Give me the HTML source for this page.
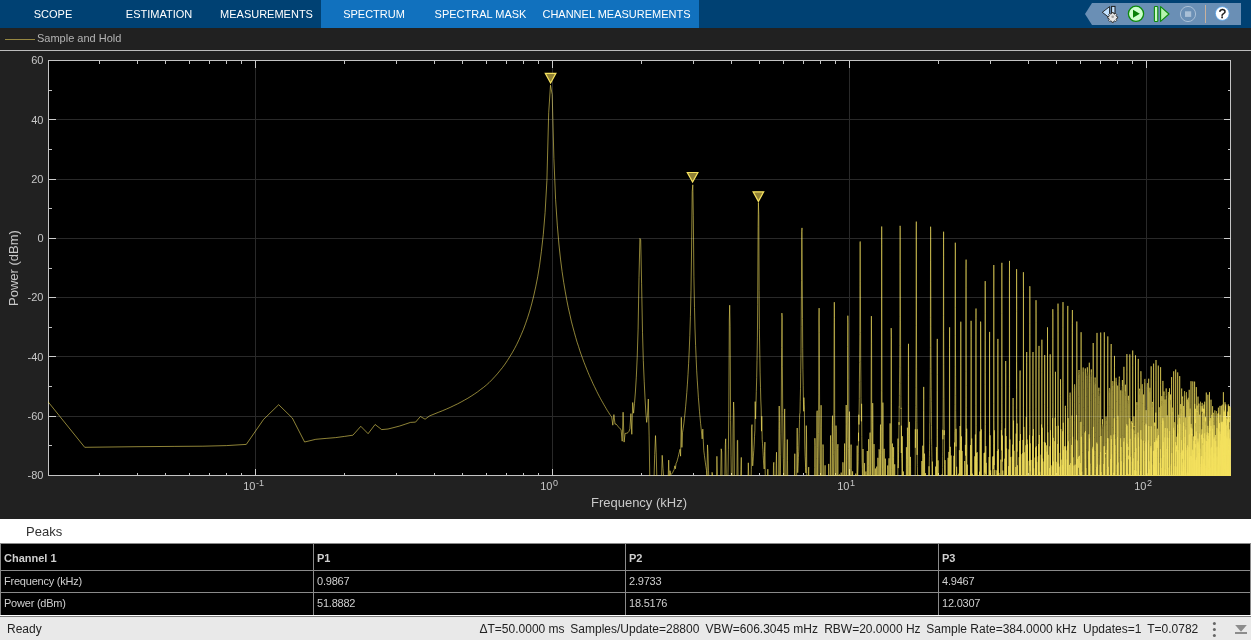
<!DOCTYPE html>
<html lang="en">
<head>
<meta charset="utf-8">
<title>Spectrum Analyzer</title>
<style>
html,body{margin:0;padding:0;}
body{width:1251px;height:640px;overflow:hidden;background:#212121;font-family:"Liberation Sans",sans-serif;position:relative;}
.abs{position:absolute;}
#wrap{position:absolute;left:0;top:0;width:1251px;height:640px;will-change:transform;}
#topbar{left:0;top:0;width:1251px;height:28px;background:#004173;}
#tabsel{left:321px;top:0;width:378px;height:28px;background:#1171be;}
.tab{top:0;height:28px;line-height:28px;font-size:11px;color:#fff;text-align:center;white-space:nowrap;transform:translateX(-50%);}
#legendline{left:5px;top:39px;width:30px;height:1px;background:#968741;}
#legendtxt{left:37px;top:31px;font-size:11px;line-height:14px;color:#b4b4b4;white-space:nowrap;}
#sep{left:0;top:50px;width:1251px;height:1px;background:#bdbdbd;}
svg.plot{position:absolute;left:0;top:0;}
#peakshdr{left:0;top:519px;width:1251px;height:24px;background:#fff;}
#peakstxt{left:26px;top:524px;font-size:13px;line-height:16px;color:#303030;}
#tbl{left:0;top:543px;width:1251px;height:73px;background:#000;}
.hl{left:0;width:1251px;height:1px;background:#8a8a8a;}
.vl{top:543px;width:1px;height:72px;background:#8a8a8a;}
.c{font-size:11px;line-height:14px;color:#cfcfcf;white-space:nowrap;letter-spacing:-0.22px;}
.b{font-weight:bold;letter-spacing:0;}
#status{left:0;top:617px;width:1251px;height:23px;background:#e9e9e9;}
.st{top:622px;font-size:12px;line-height:15px;color:#222;white-space:pre;}
</style>
</head>
<body>
<div id="wrap">
<div id="topbar" class="abs"></div>
<div id="tabsel" class="abs"></div>
<div class="abs tab" style="left:53px">SCOPE</div>
<div class="abs tab" style="left:159px">ESTIMATION</div>
<div class="abs tab" style="left:266.5px">MEASUREMENTS</div>
<div class="abs tab" style="left:374px">SPECTRUM</div>
<div class="abs tab" style="left:480.5px">SPECTRAL MASK</div>
<div class="abs tab" style="left:616.5px">CHANNEL MEASUREMENTS</div>
<svg class="abs" style="left:1080px;top:0" width="171" height="28" viewBox="1080 0 171 28">
<polygon points="1085,14 1092,3 1241,3 1241,25 1092,25" fill="#6a8fb5"/>
<polygon points="1102.3,12.3 1109.6,6.6 1109.6,18" fill="#c3e2ff" stroke="#1a1a1a" stroke-width="0.9" stroke-linejoin="miter"/>
<rect x="1111.6" y="6.4" width="3.4" height="7" fill="#c3e2ff" stroke="#1a1a1a" stroke-width="1"/>
<g transform="translate(1112.7,16.8) scale(0.76)">
<path d="M-1,-5.6h2l.4,1.5 1.1,.5 1.4,-.8 1.4,1.4-.8,1.4 .5,1.1 1.5,.4v2l-1.5,.4-.5,1.1 .8,1.4-1.4,1.4-1.4,-.8-1.1,.5-.4,1.5h-2l-.4,-1.5-1.1,-.5-1.4,.8-1.4,-1.4 .8,-1.4-.5,-1.1-1.5,-.4v-2l1.5,-.4 .5,-1.1-.8,-1.4 1.4,-1.4 1.4,.8 1.1,-.5z" fill="#e6e6e6" stroke="#2a2a2a" stroke-width="1.15" stroke-linejoin="round"/>
<circle r="1.7" fill="#9c9c9c"/>
</g>
<circle cx="1136" cy="13.8" r="7.6" fill="#ccffcc" stroke="#0c8a0c" stroke-width="1.3"/>
<polygon points="1133,9.8 1139.8,13.8 1133,17.8" fill="#068006"/>
<rect x="1154.4" y="6.5" width="3.4" height="15" rx="0.8" fill="#c6fbc0" stroke="#0c8a0c" stroke-width="1.1"/>
<polygon points="1160.6,6.6 1169,14 1160.6,21.4" fill="#b6f5ae" stroke="#0c8a0c" stroke-width="1.1" stroke-linejoin="round"/>
<circle cx="1188" cy="14" r="7.6" fill="none" stroke="#a9bfd6" stroke-width="1"/>
<rect x="1185" y="11.3" width="6.2" height="5.6" fill="#a9bfd6"/>
<rect x="1205" y="5" width="1" height="18" fill="#c9b19c"/>
<circle cx="1222.3" cy="13.5" r="6.9" fill="#fff" stroke="#4a9be6" stroke-width="0.8"/>
<text x="1222.3" y="18.2" text-anchor="middle" font-family="'Liberation Sans', sans-serif" font-size="13" fill="#111" stroke="#111" stroke-width="0.35">?</text>
</svg>
<div id="legendline" class="abs"></div>
<div id="legendtxt" class="abs">Sample and Hold</div>
<div id="sep" class="abs"></div>
<svg class="plot" width="1251" height="520" viewBox="0 0 1251 520">
<defs><clipPath id="axclip"><rect x="48" y="60" width="1183" height="416"/></clipPath></defs>
<rect x="48" y="60" width="1183" height="416" fill="#000"/>
<g stroke="#c4c4c4" stroke-width="1" shape-rendering="crispEdges"><line x1="48.5" y1="60.5" x2="55.5" y2="60.5"/><line x1="1223.5" y1="60.5" x2="1230.5" y2="60.5"/><line x1="48.5" y1="90.5" x2="51.5" y2="90.5"/><line x1="1227.5" y1="90.5" x2="1230.5" y2="90.5"/><line x1="48.5" y1="119.5" x2="55.5" y2="119.5"/><line x1="1223.5" y1="119.5" x2="1230.5" y2="119.5"/><line x1="48.5" y1="149.5" x2="51.5" y2="149.5"/><line x1="1227.5" y1="149.5" x2="1230.5" y2="149.5"/><line x1="48.5" y1="179.5" x2="55.5" y2="179.5"/><line x1="1223.5" y1="179.5" x2="1230.5" y2="179.5"/><line x1="48.5" y1="208.5" x2="51.5" y2="208.5"/><line x1="1227.5" y1="208.5" x2="1230.5" y2="208.5"/><line x1="48.5" y1="238.5" x2="55.5" y2="238.5"/><line x1="1223.5" y1="238.5" x2="1230.5" y2="238.5"/><line x1="48.5" y1="268.5" x2="51.5" y2="268.5"/><line x1="1227.5" y1="268.5" x2="1230.5" y2="268.5"/><line x1="48.5" y1="297.5" x2="55.5" y2="297.5"/><line x1="1223.5" y1="297.5" x2="1230.5" y2="297.5"/><line x1="48.5" y1="327.5" x2="51.5" y2="327.5"/><line x1="1227.5" y1="327.5" x2="1230.5" y2="327.5"/><line x1="48.5" y1="356.5" x2="55.5" y2="356.5"/><line x1="1223.5" y1="356.5" x2="1230.5" y2="356.5"/><line x1="48.5" y1="386.5" x2="51.5" y2="386.5"/><line x1="1227.5" y1="386.5" x2="1230.5" y2="386.5"/><line x1="48.5" y1="416.5" x2="55.5" y2="416.5"/><line x1="1223.5" y1="416.5" x2="1230.5" y2="416.5"/><line x1="48.5" y1="445.5" x2="51.5" y2="445.5"/><line x1="1227.5" y1="445.5" x2="1230.5" y2="445.5"/><line x1="48.5" y1="475.5" x2="55.5" y2="475.5"/><line x1="1223.5" y1="475.5" x2="1230.5" y2="475.5"/><line x1="99.5" y1="475.5" x2="99.5" y2="472.5"/><line x1="99.5" y1="60.5" x2="99.5" y2="63.5"/><line x1="137.5" y1="475.5" x2="137.5" y2="472.5"/><line x1="137.5" y1="60.5" x2="137.5" y2="63.5"/><line x1="165.5" y1="475.5" x2="165.5" y2="472.5"/><line x1="165.5" y1="60.5" x2="165.5" y2="63.5"/><line x1="189.5" y1="475.5" x2="189.5" y2="472.5"/><line x1="189.5" y1="60.5" x2="189.5" y2="63.5"/><line x1="209.5" y1="475.5" x2="209.5" y2="472.5"/><line x1="209.5" y1="60.5" x2="209.5" y2="63.5"/><line x1="226.5" y1="475.5" x2="226.5" y2="472.5"/><line x1="226.5" y1="60.5" x2="226.5" y2="63.5"/><line x1="241.5" y1="475.5" x2="241.5" y2="472.5"/><line x1="241.5" y1="60.5" x2="241.5" y2="63.5"/><line x1="255.5" y1="475.5" x2="255.5" y2="468.5"/><line x1="255.5" y1="60.5" x2="255.5" y2="67.5"/><line x1="344.5" y1="475.5" x2="344.5" y2="472.5"/><line x1="344.5" y1="60.5" x2="344.5" y2="63.5"/><line x1="396.5" y1="475.5" x2="396.5" y2="472.5"/><line x1="396.5" y1="60.5" x2="396.5" y2="63.5"/><line x1="434.5" y1="475.5" x2="434.5" y2="472.5"/><line x1="434.5" y1="60.5" x2="434.5" y2="63.5"/><line x1="462.5" y1="475.5" x2="462.5" y2="472.5"/><line x1="462.5" y1="60.5" x2="462.5" y2="63.5"/><line x1="486.5" y1="475.5" x2="486.5" y2="472.5"/><line x1="486.5" y1="60.5" x2="486.5" y2="63.5"/><line x1="506.5" y1="475.5" x2="506.5" y2="472.5"/><line x1="506.5" y1="60.5" x2="506.5" y2="63.5"/><line x1="523.5" y1="475.5" x2="523.5" y2="472.5"/><line x1="523.5" y1="60.5" x2="523.5" y2="63.5"/><line x1="538.5" y1="475.5" x2="538.5" y2="472.5"/><line x1="538.5" y1="60.5" x2="538.5" y2="63.5"/><line x1="552.5" y1="475.5" x2="552.5" y2="468.5"/><line x1="552.5" y1="60.5" x2="552.5" y2="67.5"/><line x1="641.5" y1="475.5" x2="641.5" y2="472.5"/><line x1="641.5" y1="60.5" x2="641.5" y2="63.5"/><line x1="693.5" y1="475.5" x2="693.5" y2="472.5"/><line x1="693.5" y1="60.5" x2="693.5" y2="63.5"/><line x1="731.5" y1="475.5" x2="731.5" y2="472.5"/><line x1="731.5" y1="60.5" x2="731.5" y2="63.5"/><line x1="759.5" y1="475.5" x2="759.5" y2="472.5"/><line x1="759.5" y1="60.5" x2="759.5" y2="63.5"/><line x1="783.5" y1="475.5" x2="783.5" y2="472.5"/><line x1="783.5" y1="60.5" x2="783.5" y2="63.5"/><line x1="803.5" y1="475.5" x2="803.5" y2="472.5"/><line x1="803.5" y1="60.5" x2="803.5" y2="63.5"/><line x1="820.5" y1="475.5" x2="820.5" y2="472.5"/><line x1="820.5" y1="60.5" x2="820.5" y2="63.5"/><line x1="835.5" y1="475.5" x2="835.5" y2="472.5"/><line x1="835.5" y1="60.5" x2="835.5" y2="63.5"/><line x1="849.5" y1="475.5" x2="849.5" y2="468.5"/><line x1="849.5" y1="60.5" x2="849.5" y2="67.5"/><line x1="938.5" y1="475.5" x2="938.5" y2="472.5"/><line x1="938.5" y1="60.5" x2="938.5" y2="63.5"/><line x1="990.5" y1="475.5" x2="990.5" y2="472.5"/><line x1="990.5" y1="60.5" x2="990.5" y2="63.5"/><line x1="1028.5" y1="475.5" x2="1028.5" y2="472.5"/><line x1="1028.5" y1="60.5" x2="1028.5" y2="63.5"/><line x1="1056.5" y1="475.5" x2="1056.5" y2="472.5"/><line x1="1056.5" y1="60.5" x2="1056.5" y2="63.5"/><line x1="1080.5" y1="475.5" x2="1080.5" y2="472.5"/><line x1="1080.5" y1="60.5" x2="1080.5" y2="63.5"/><line x1="1100.5" y1="475.5" x2="1100.5" y2="472.5"/><line x1="1100.5" y1="60.5" x2="1100.5" y2="63.5"/><line x1="1117.5" y1="475.5" x2="1117.5" y2="472.5"/><line x1="1117.5" y1="60.5" x2="1117.5" y2="63.5"/><line x1="1132.5" y1="475.5" x2="1132.5" y2="472.5"/><line x1="1132.5" y1="60.5" x2="1132.5" y2="63.5"/><line x1="1146.5" y1="475.5" x2="1146.5" y2="468.5"/><line x1="1146.5" y1="60.5" x2="1146.5" y2="67.5"/><rect x="48.5" y="60.5" width="1182.0" height="415.0" fill="none"/></g>
<g clip-path="url(#axclip)" fill="none" stroke="#f5e15e" stroke-opacity="0.58" stroke-width="1">
<path d="M-4.7 336.2l89.4 111.1M278.7 404.7l13.6 13.3M360.8 426.3l7.3 7.4M410.5 422.4l5.1 -0.3M446.3 409.1l3.9 -1.7M474.3 394.1l3.1 -2.1M497.3 373.9l2.6 -3.2M516.8 344.3l2.2 -4.6M533.7 295.9l2 -9M548.7 112.6l1.8 -27.4M562.1 271.6l1.6 10.8M574.3 332.3l1.4 5.1M585.4 365.8l1.3 3.3M595.6 389l1.2 2.5M605.1 406.7l1.1 1.9M613.9 414.6l1.1 9.6M622.2 441.2l0.9 -29M629.9 428.8l1 -15.2M637.2 357.5l0.9 -28.3M644.2 381.2l0.8 16.7M654.7 454.4l0.8 -18.8M669.4 484.4l0.6 -13.7M674.8 465.8l0.6 3M680 449.3l0.6 6.9M685 413.1l0.6 -6.3M689.8 335.7l0.6 -19.2M694.5 307.6l0.5 21.4M699 405l0.5 6.7M703.3 441.1l0.5 9.7M707.5 444.9l0.5 8.5M717.4 474.9l0.5 9.5M727.5 484.4l0.5 -11.6M731 455.2l0.4 24.3M740.5 484.4l0.4 -15M751.6 427.9l0.4 -3.3M754.5 436.7l0.4 -6.5M757.4 337.9l0.3 -33.1M760.1 372.9l0.4 14.8M762.9 449.6l0.3 5.8M767.5 484.4l0.3 -15.2M778.6 484.4l0.3 -55.6M781.3 404l0.3 -56.3M783.6 473.3l0.3 9M787.3 439.5l0.2 21.3M797.4 445.3l0.3 27.4M799.5 419.6l0.2 -5.5M801.5 280.6l0.2 -49M803.4 399.1l0.3 12.2M805.4 462.1l0.2 5.5M808.7 467.1l0.3 17.3M817.2 410.7l0.2 37.1M819.1 308.1l0.2 24.4M821.3 418.6l0.2 65.8M828.7 463.9l0.2 9.1M832.5 415.7l0.2 26M834.7 413.5l0.1 37.2M837.7 448.5l0.2 -4.3M843 463.6l0.2 20.8M846.4 423.2l0.2 61.2M848.2 379.2l0.1 42.9M849.7 447.8l0.2 36.6M855.7 473.6l0.2 10.8M858.3 453.8l0.2 -21.1M859.6 362.6l0.2 -27.9M860.9 381.7l0.1 16M862.1 462.7l0.2 5.7M864.4 463.2l0.2 -0.1M867.5 472.5l0.1 11.9M870.1 432.6l0.2 49.2M871.6 343.9l0.1 67M873.7 484.4l0.2 -9.7M876.7 466.6l0.1 17.8M880.4 431.9l0.1 -7.3M881.6 244l0.1 -17.5M882.8 433.1l0.1 -30.5M885.3 470l0.1 -11.4M889.9 484.4l0.1 -45.5M891.2 328.1l0.2 9.7M893.3 484.4l0.2 -26.9M896.9 475.8l0.2 8.6M898.6 452.6l0.1 -6.1M899.5 382.2l0.2 -16.1M900.5 320.1l0.1 27.8M901.4 425.7l0.1 14.2M902.3 436.2l0.1 37.2M907.2 484.4l0.1 -20.8M908.4 350l0.1 -6.2M909.6 441.4l0.1 43M915.3 429.3l0.1 18.5M916.1 325.5l0.1 -89.5M916.9 422.7l0.1 12.3M918.2 474.9l0.1 9.5M923.5 484.4l0.1 -74.1M925.5 473.2l0.1 11.2M929.5 450.3l0.1 -6.5M930.3 368.6l0.1 -21M931 353.7l0.1 19.6M931.7 445.6l0.1 6.3M935.6 484.4v-17.8M937.1 390.5l0.1 -48.2M938.1 460.4l0.1 19.7M942.8 429.8l0.1 9.5M943.5 243.2l0.1 -11.5M944.2 429.7v5.4M945.1 460.1l0.1 24.3M949.4 448.8l0.1 -101.3M950.9 484.4l0.1 -25.2M954.3 476.6l0.1 -6.1M954.9 404.6l0.1 -16.7M955.5 350.1l0.1 26.1M956.1 466.6l0.1 1.6M959.3 484.4l0.1 -18.2M960.4 479.1l0.1 -16.4M961 412.9v28.6M962.1 470.9v-20M965.4 451.5v-6.6M965.9 330l0.1 -61.8M966.5 437.8l0.1 11.8M970.4 484.4v-32.6M971.2 339.4l0.1 129.2M972.4 473.7v10.7M975.6 484.4v-8.1M976.1 385.1l0.1 40.4M977.1 461.5l0.1 -9.3M980.3 478.6l0.1 -16.4M980.8 416.7l0.1 27.5M981.8 474.9l0.1 9.5M984.7 472.5l0.1 -13.5M985.2 281.1l0.1 32.1M985.7 474.2l0.1 -28.1M989.3 484.4l0.1 -13.9M990 484.4v-24M992.7 460.2l0.1 -3.5M993.5 443.3l0.1 -17.3M994 396.1v24.6M994.8 478.5l0.1 -8.6M997.7 481.2v-21.1M998.1 466.6l0.1 17.8M1001.2 484.4l0.1 -8.5M1001.6 407l0.1 -19.8M1002 383l0.1 20.8M1002.8 484.4v-13.9M1005.3 428.3v38.4M1006.1 484.4v-26M1008.5 466.2l0.1 0.6M1009.2 462l0.1 -17.5M1009.6 418.5l0.1 24M1010.3 484.4v-24.4M1012.6 444.6l0.1 17.9M1013.5 468v-45.4M1015.7 481.8l0.1 -14.8M1016.4 409.6l0.1 -20.3M1016.8 388.9v20.3M1017.4 484.4l0.1 -19.1M1019.9 481.4l0.1 -41.9M1020.5 434.1v16.9M1022.9 484.4l0.1 -37.7M1023.4 288.9v-16.7M1023.8 426.9l0.1 9.6M1026.2 484.4v-52.4M1026.7 362.4l0.1 68M1027.5 444.4v27.9M1029.5 460.2l0.1 5.2M1029.8 286.2l0.1 2.4M1030.2 471.3v-26.5M1032.2 473.8l0.1 10.6M1032.9 357.6l0.1 -5.6M1033.4 449.5v34.9M1035.6 447.5l0.1 28.1M1036.1 322.4v86.1M1036.7 484.4v-22.6M1038.6 444.1l0.1 23.6M1039.2 484.4l0.1 -13.2M1041.2 454.6v26.8M1041.8 372.8l0.1 -33.1M1042.2 427.7l0.1 33.4M1044.3 472.3v-30.4M1044.8 391.9v54M1045.4 466.6v-23.5M1047.1 452.4l0.1 -0.8M1047.5 352.9l0.1 72.6M1048.2 454.8v4.8M1049.9 473.9v10.5M1050.6 436.4v48M1052.5 434.5v-16.4M1052.8 338.4v-29.2M1053.2 437.8v0M1054.8 441.2l0.1 20.1M1055.4 413.3v-41.5M1055.8 453.4l0.1 31M1057.7 449.6l0.1 27.5M1058 303.6l0.1 29.2M1058.3 425.8l0.1 16.9M1060.2 484.4v-25.2M1060.8 456.8v-27.8M1062.4 465.1v19.3M1062.9 432.7v-32.4M1063.1 466.6l0.1 16.7M1063.6 450.1v29M1065.1 459.9l0.1 24.5M1065.4 406v1.5M1065.7 446.4v30.6M1067.4 484.4l0.1 -38.9M1067.7 363.2v-52.1M1068 484.4v-50.2M1069.5 484.4v-19.5M1069.9 397.6v-1.9M1070.1 393.2l0.1 0.6M1070.4 464.7v19.7M1072.1 427.2v-11.6M1072.4 310v13.7M1072.7 440.3v44.1M1074.1 465.5v18.9M1074.4 387.7v-0.8M1074.6 384.3v0M1074.8 387.2l0.1 0.8M1075.2 464.6v19.8M1076.6 421.6v62.5M1076.9 358.8v53.5M1077.3 481.5l0.1 -22.6M1078.6 432.1v-17.8M1078.8 372.4v-0.4M1079 370.9v0.1M1079.2 373.7l0.1 0.6M1079.5 474.8v-19M1080.9 421.9v28.3M1081.3 484.4v-17M1082.6 470.2v-17.8M1082.8 370.7l0.1 -0.5M1083.1 368v-0.2M1083.3 367.6v0.2M1083.5 369.6v0.4M1083.7 425.4l0.1 17.8M1085 443l0.1 41.4M1085.5 484.4v-43.9M1086.7 449.7v-17.8M1086.9 374.5v-0.4M1087.1 372.3v-0.1M1087.3 367.3v4.4M1087.5 372.4l0.1 0.2M1087.7 374.7l0.1 0.4M1088 459.6v17.8M1089.3 483.5v-104.8M1089.8 484.4v-20.5M1090.8 400.5v-17.7M1091 374l0.1 -0.3M1091.2 372.6l0.1 -3.2M1091.5 373.4v0.2M1091.7 376.4v0.6M1092.7 461.1v-12.4M1093.1 463.1l0.1 -29.4M1093.4 484.4v-51.2M1094.6 484.4v-11.1M1094.8 383v-0.5M1095 380.2v-0.2M1095.2 379.7v0.1M1095.4 381.5v0.4M1095.6 432.7v17.8M1096.8 442.6v34M1097.1 471.3v13.1M1098.2 484.4l0.1 -8.8M1098.4 394.8l0.1 -0.4M1098.6 392.3l0.1 -0.2M1098.8 391.4l0.1 -3.7M1099 391.9l0.1 0.2M1099.2 394l0.1 0.3M1099.4 454.2l0.1 17.8M1100.5 471.7v12.7M1100.7 392.2l0.1 43.7M1101.1 472l0.1 12.4M1102.1 427l0.1 -0.4M1102.3 424.8l0.1 -0.1M1102.5 424.3l0.1 0.1M1102.7 425.4v0.3M1102.9 428.2v0.4M1104 446.7l0.1 -0.5M1104.3 358.8v70.2M1104.7 457.7v5.4M1105.7 420.1v-0.5M1105.9 417.2v-0.2M1106.1 416.6v0.1M1106.3 418.3v0.4M1106.5 459.9v8.3M1107.6 458.4v26M1107.8 448.2v25.8M1109 459.4v-17.8M1109.2 390.5v-0.4M1109.4 388.3v-0.1M1109.6 388.2v0.1M1109.7 390.1l0.1 0.4M1109.9 442.3v17.8M1111 438.5v42.2M1111.2 467.7l0.1 16.7M1112.3 480.9l0.1 -17.8M1112.5 384.8v-0.5M1112.7 382.2v-0.2M1112.9 381.7v0.1M1113 383.3l0.1 0.3M1113.2 411.9v17.7M1114.1 434.6v35.1M1114.4 380.7l0.1 -24.8M1114.9 452.9v-7.8M1115.7 398v-15.8M1115.9 379.3v-0.3M1116 377.9l0.1 -0.1M1116.2 378.2v0.2M1116.4 380.4v0.5M1116.6 454.9v17.8M1117.5 437v5M1117.9 430.3v-14.5M1118.8 452.6v-17.8M1119 381v-0.4M1119.1 378.8l0.1 -0.1M1119.3 378.4v0.1M1119.5 379.7v0.3M1119.7 386.4v17.8M1120.5 472.4v12M1120.9 404.8v79.6M1122 464.7v-17.8M1122.1 388.8l0.1 -0.4M1122.3 386.5v-0.1M1122.5 386.7v0.2M1122.6 389.4l0.1 0.5M1123.5 480.3v-17.5M1123.9 413.1v-44.6M1124.1 463.2v21.2M1125.1 395.1l0.1 -0.5M1125.3 392.2v-0.2M1125.5 391.6v0.1M1125.6 393.5v0.4M1125.8 444.2v13.2M1126.7 453.5l0.1 30.9M1127.1 433v51.4M1128 446.8v3.2M1128.2 402.2v-0.4M1128.3 400.1l0.1 0M1128.5 400.7v0.3M1128.7 403.9v2M1129.4 484.4l0.1 -17.2M1129.8 484.4v-10M1129.9 475.6v8.8M1130.2 473.5v10.9M1131 426.9v-0.4M1131.2 424.6v-0.1M1131.3 424.2v0.1M1131.5 425.7v0.3M1131.6 441.9l0.1 12.6M1132.5 428.2v-5.2M1132.7 468.5l0.1 15.9M1133.7 484.4v-9.5M1133.8 428.7l0.1 -0.4M1134 426.6v-0.1M1134.1 426.2l0.1 0M1134.3 427.4v0.2M1134.5 430.2v3.4M1135.2 452v24.5M1135.5 446.1v-55.7M1135.7 434.2v31.7M1136.5 484.4v-11.1M1136.7 408.3v-0.5M1136.8 405.9v-0.2M1137 405.7v0.1M1137.1 407.7v0.5M1137.2 470.2l0.1 14.2M1138.2 484.4v-37.4M1138.4 437.5v13.2M1139.2 429l0.1 -17.7M1139.4 391.8v-0.3M1139.5 390.1v-0.1M1139.7 390.1v0.1M1139.8 391.8v0.3M1140 426.2v17.8M1140.8 447.1v37.3M1141.1 442.6v-3.1M1141.9 405v-16.4M1142.1 385.9v-0.3M1142.2 384.3v0M1142.3 384.4l0.1 0.2M1142.5 386.2v0.3M1142.6 421.4v17.8M1143.5 468l0.1 -64.1M1143.9 484.4v-8.1M1144.6 383v-0.6M1144.7 379.8l0.1 -0.3M1144.9 378.9v0.1M1145 380.4v0.3M1145.2 406.9v17.7M1146 484.4v-44.7M1146.3 484.4v-16.8M1146.5 470.8v13.6M1147.2 386.7v-0.4M1147.3 384v-0.2M1147.4 383.2v0.1M1147.6 384.3v0.3M1147.7 387.2v2.3M1148.3 484.4v-20.9M1148.7 440.9v-55.7M1148.9 445.2v39.2M1149.6 461.3v-17.8M1149.7 390.4v-0.3M1149.8 388.3v-0.2M1150 387.8v0.1M1150.1 389.2v0.3M1150.2 393v17.8M1151 484.4v-23M1151.2 378.5v75.9M1151.5 470.7v-7.1M1152.1 406.8v-0.4M1152.2 404v-0.2M1152.4 402.9v-1M1152.5 403.4v0.2M1152.6 405.6v0.4M1153.3 484.4v-19.7M1153.6 367.3v-3.7M1153.9 484.4v-11.1M1154.5 475.4v-17.8M1154.7 426.2v-0.4M1154.8 424.5v-2.1M1154.9 425.6v0.3M1155 445.5l0.1 17.8M1155.7 450v-0.4M1156 360v15.1M1156.3 444.8v-4.4M1156.9 447v3.5M1157 448.2v-10.1M1157.1 447v0M1157.3 447.3v0.2M1157.4 449.2v0.3M1158.1 484.4l0.1 -20.1M1158.3 365.6l0.1 39.6M1158.6 463v14.6M1159.2 410.6l0.1 -0.4M1159.4 408.2v-0.2M1159.5 407.4v0M1159.6 408.3v0.2M1159.7 410.8l0.1 0.4M1160.3 462.9l0.1 2.3M1160.6 385.4l0.1 99M1161.3 476.4l0.1 4M1161.5 404.3l0.1 -0.4M1161.7 401.9v-0.1M1161.8 401.2v0.1M1161.9 402.3v0.2M1162 405v0.5M1162.6 484.4v-24.8M1162.8 484.4l0.1 -12.4M1163 428.7v-8M1163.3 475.1v7.4M1163.8 398.5v-0.5M1163.9 395.5l0.1 -0.1M1164.1 395.3v0.2M1164.2 397.8v0.5M1164.8 484.4v-9.6M1165.1 399.5v21.4M1165.4 470.8v13.6M1166 395.5v-0.5M1166.1 392.7v-0.2M1166.2 388.4v3.4M1166.3 392.6v0.3M1166.5 395.3v0.5M1167 459.8v-10.9M1167.3 462.6v-34.2M1167.6 461.5v-15.1M1168.2 398.9v-1.8M1168.3 394.2v-0.3M1168.4 392.2v1M1168.5 394.4v0.4M1168.6 413.1v17.8M1169.3 439.8v-1.7M1169.6 484.4v-31M1170.2 470v-17.8M1170.3 402.5v-0.4M1170.4 400.4v-0.2M1170.5 400l0.1 0M1170.7 401.2v0.3M1170.8 404.1v10.4M1171.4 463.9l0.1 17M1171.7 455.1v-2M1172.4 416.5v-4.9M1172.5 408.9v-0.2M1172.6 407.6v0M1172.7 408.2v0.2M1172.8 410.7v0.4M1173.3 476.1v8.3M1173.5 428.6v44M1173.8 484.4v-35.4M1174.4 462.6v-17.8M1174.5 424.4v-0.3M1174.6 422.6v-0.1M1174.7 422.2v0.1M1174.8 423.3v0.2M1174.9 425.8v0.4M1175.6 457.1v-15M1175.7 446.2v38.2M1176.4 460.2l0.1 -13.5M1176.6 449.1v-0.3M1176.7 447.5v0M1176.8 447.7v0.1M1176.9 449.5v0.3M1177.4 484.4v-11.7M1177.7 484.4v-8.7M1177.8 449.8v-16.2M1178.5 446.1v-17.8M1178.6 416.4v-0.3M1178.7 414.8v0M1178.8 415.4v0.2M1178.9 418v0.5M1179.4 484.4v-15.3M1179.7 399.1v-23M1179.8 474.5l0.1 9.9M1180.4 418.9v-5.8M1180.5 410.6v-0.3M1180.6 409.1v-0.1M1180.7 409.2l0.1 0.2M1180.8 410.9l0.1 0.4M1181 441.7v17.7M1181.6 484.4v-45.3M1181.8 474.5v9.9M1182.4 449.1v-17.8M1182.5 400.5v-0.4M1182.6 398.8v-2.3M1182.7 399.9v0.3M1182.8 419.9v17.8M1183.2 484.4v-19.1M1183.5 422.5v27.4M1183.7 426v5.9M1184.3 478.5v-24.8M1184.4 393.9v-0.5M1184.5 391.4v-0.1M1184.6 391.4v0.1M1184.7 393.6v0.5M1184.8 468.5v15.9M1185.2 436.9l0.1 19.8M1185.5 447v37.4M1185.7 463.1v21.3M1186.2 399.3v-3.3M1186.3 393.1v-0.2M1186.4 392.1v0M1186.5 393.3v0.3M1186.6 408.5v17.8M1187.2 456.8v-6.6M1187.5 445.4v8.7M1188 459v-17.8M1188.1 400.1v-0.4M1188.2 398v-0.1M1188.3 398v0.1M1188.4 399.9v0.4M1188.5 451.9v17.8M1189 484.4l0.1 -44.3M1189.2 438.2v46.2M1189.4 475.6v8.8M1189.9 412.5v-0.4M1190 409.6v-0.3M1190.1 408.6v0.1M1190.2 409.7v0.3M1190.3 412.9v11.2M1190.9 431.5v-3.9M1191.1 448.7v-24.8M1191.7 443.9v-4.8M1191.8 436.7v-0.3M1191.9 435.2v-0.1M1191.9 435.2l0.1 0.1M1192 436.6l0.1 0.3M1192.1 439.7l0.1 17.8M1192.7 464.2v20.2M1192.9 454.5v-4.1M1193.4 473.2l0.1 -18.7M1193.5 457l0.1 -0.4M1193.6 454.7l0.1 -0.1M1193.7 454.9v0.1M1193.8 457.3v0.5M1194.2 484.4v-10.3M1194.4 480.3v-43.6M1194.6 407.2v72.6M1194.9 484.4v-16.7M1195.2 435.8v0.6M1195.3 423.9v-0.4M1195.4 422v-0.1M1195.5 422.3v0.2M1195.6 424.7v0.4M1195.8 470.7v13.7M1196.3 480.6v-64.2M1196.5 484.4v-11.4M1196.9 432.6v-17.1M1197 412.9v-0.3M1197.1 411.3v-0.1M1197.2 411.2v0.1M1197.3 412.6v0.3M1197.4 415.5v17.1M1197.8 442.8v11.4M1198 396.6v29.2M1198.2 463.2l0.1 21.2M1198.7 410.9v-0.6M1198.8 407.9v-0.1M1198.9 407.6v0.2M1199 409.9v0.5M1199.1 444.6v39.8M1199.6 484.4v-36.3M1199.8 484.4v-35.8M1200.4 452.2v-17.8M1200.4 403.6l0.1 -0.3M1200.5 401.8v0M1200.6 402.3v0.2M1200.7 405v0.5M1201.2 466.9v14.4M1201.5 450v-15.2M1201.9 472.1v12.3M1202.1 413.9v-0.5M1202.2 411v-0.2M1202.3 410.4v0.1M1202.3 412.3l0.1 0.3M1202.4 433.7v2.2M1202.9 456.6l0.1 -11.5M1203.1 473.1v-35M1203.5 484.4l0.1 -25.2M1203.7 416.3v-0.4M1203.8 413.3v-0.2M1203.9 409v3.3M1204 413.2v-4.6M1204 416l0.1 0.5M1204.5 463.3v17.3M1204.7 401.7v37.3M1204.9 452v13.1M1205.3 423.7v-0.5M1205.4 421v-0.2M1205.5 420.3v0.1M1205.6 418.2v3.7M1205.7 428.6v17.8M1206.1 468.7v15.7M1206.3 409.2v75.2M1206.8 484.4v-12.6M1206.9 442.6v-0.4M1207 440.1v-0.2M1207.1 434.9v4.3M1207.2 440v-6.4M1207.3 442.4v0.4M1207.7 457.1v-15.2M1207.9 435.5v-40.8M1208.1 484.4v-31.6M1208.5 470v2.1M1208.6 469.5v-11M1208.6 468l0.1 0M1208.7 468.3v0.2M1208.8 470.3v0.3M1209.3 457.8v3.7M1209.5 392.1v19.8M1209.7 455.5v28.9M1210.1 433v-0.4M1210.2 430.5v-0.2M1210.2 429.6v0M1210.3 430.4v-12.3M1210.4 432.8v0.4M1210.9 484.4v-35.3M1211 450.2v34.2M1211.6 484.4v-16.2M1211.7 417.6v-0.4M1211.7 415.1v-0.1M1211.8 415v0.1M1211.9 417.1v0.4M1212 473.3v11.1M1212.5 432.4v36.2M1212.6 428.8l0.1 12.3M1213.1 424.9v-6.9M1213.2 415.4v-0.3M1213.3 414v-0.1M1213.4 414.4v0.2M1213.5 416.6v0.4M1213.9 484.4v-16.7M1214.1 457.3v-32.1M1214.2 466.7l0.1 -13.6M1214.7 433v-17.8M1214.7 411.6v-0.3M1214.8 410.3v0M1214.9 411.3v0.3M1215 414.7v16.1M1215.4 462.5v21.9M1215.7 461.6v-20.5M1216.1 458v-17.6M1216.2 414.1v-0.4M1216.3 412.3v-0.1M1216.4 412.5v0.2M1216.4 414.8l0.1 0.5M1216.9 478.1v-6.6M1217 427.9l0.1 8.7M1217.6 464.4v-17.8M1217.7 415.7v-0.4M1217.8 413.8v-0.1M1217.8 413.9v0.2M1217.9 416.1v0.4M1218 484.4l0.1 -19.7M1218.3 440.8l0.1 43.6M1218.5 413.2v30.2M1218.7 429.3v8M1219.1 432.2v-0.5M1219.2 423v5.8M1219.2 427.8v-4.3M1219.3 428.6v0.2M1219.4 431.3v0.4M1219.8 452.1v-3.9M1220 405.9v11.5M1220.1 460.1v-7.9M1220.5 444.7l0.1 -0.5M1220.6 441.8v-0.2M1220.7 441.1v0.1M1220.8 434v9.1M1220.9 458.3v-16.3M1221.3 455.2v-33.2M1221.5 484.4v-46.9M1221.8 458.4l0.1 16.9M1222 424.4v-2.7M1222.1 476.2v-7.3M1222.2 447.1v-23.4M1222.5 484.4v-8.6M1222.7 432.8v-10.9M1222.9 464.2v-34M1223.2 484.4l0.1 -23M1223.4 472.8v-17.7M1223.5 448.4v-0.4M1223.5 447.2v0M1223.6 419.4v-3.4M1223.7 435.1v-13.3M1223.9 476.1v8.3M1224.1 484.4v-44.5M1224.2 450.5v33.9M1224.4 449.7v34.7M1224.8 441.5v-12.5M1224.8 425.9l0.1 -0.3M1224.9 424.7v0M1225 422.3v-20.1M1225.1 449.4v9.8M1225.3 469.7v14.7M1225.5 414.2v-8M1225.7 434.4v-30M1225.9 479.3v-12.3M1226.1 437.9v-14.9M1226.2 420.2v-3.6M1226.3 418.7v0M1226.3 419.1l0.1 0.2M1226.4 421.4v0.4M1226.6 465.8v15M1226.9 484.4v-33.4M1227 484.4l0.1 -56.5M1227.2 484.4v-17M1227.5 445.2v-14.2M1227.6 428.3v-0.3M1227.6 426.8v-0.1M1227.7 426.8v0.2M1227.8 428.5v0.3M1227.8 455.9l0.1 17.8M1228.2 437v47.4M1228.4 412.5v10.1M1228.7 484.4l0.1 -28.6M1228.9 424.9v-0.4M1228.9 406v16.2M1229 421.4v-2.8M1229.1 422v0.1M1229.1 424l0.1 0.4M1229.3 482.1v-17.8M1229.6 443.2v41.2M1229.8 484.4v-28.8M1230.1 466.4v18M1230.2 422.4v-0.5M1230.3 419.5v-0.2"/>
<path d="M84.7 447.3l52.3 -0.6M292.3 418l12.3 24M368.1 433.7l7 -9.2M415.6 422.1l4.8 -5.6M450.2 407.4l3.7 -1.8M477.4 392l3 -2.3M499.9 370.7l2.6 -3.2M519 339.7l2.2 -5M535.7 286.9l2 -10.1M550.5 85.2l1.7 9.4M563.7 282.4l1.6 9.5M575.7 337.4l1.4 4.8M586.7 369.1l1.3 3.2M596.8 391.5l1.2 2.4M606.2 408.6l1.1 1.9M615 424.2l1 -0.3M623.1 412.2l1 29.9M630.9 413.6l0.9 20.7M638.1 329.2l0.9 -51.8M645 397.9l0.8 14.1M655.5 435.6l0.7 17.2M670 470.7l0.7 4M675.4 468.8l0.7 -5.7M680.6 456.2l0.7 -38.9M685.6 406.8l0.6 -6.8M690.4 316.5l0.6 -26.3M695 329l0.6 16.6M699.5 411.7l0.6 6.1M703.8 450.8l0.6 4.5M708 453.4l0.5 17.4M720.7 479.2l0.5 -30.4M728 472.8l0.4 -23.4M732.7 484.4l0.4 -56.3M740.9 469.4l0.4 -12M752 424.6l0.4 31.6M754.9 430.2l0.3 -28.6M757.7 304.8l0.4 -78.3M760.5 387.7l0.3 12.3M763.2 455.4l0.3 5.4M767.8 469.2l0.3 15.2M778.9 428.8l0.3 -22.8M781.6 347.7l0.3 -34.6M783.9 482.3l0.3 -18.4M787.5 460.8l0.3 23.6M797.7 472.7l0.2 -4.5M799.7 414.1l0.3 -1.2M801.7 231.6l0.3 -3.7M803.7 411.3l0.2 -13.7M805.6 467.6l0.3 5.4M814.5 484.4l0.2 -16.7M817.4 447.8l0.2 36.6M819.3 332.5l0.3 76.8M822.8 480.8l0.2 -36.3M828.9 473l0.2 11.4M832.7 441.7l0.2 42.7M834.8 450.7l0.2 24.3M837.9 444.2l0.2 34.2M844.3 484.4l0.2 -32.6M846.9 476.8l0.2 -16.5M848.3 422.1l0.2 26.3M850.7 484.4l0.2 -27M856.9 484.4l0.1 -12M858.5 432.7l0.1 8.5M859.8 334.7l0.1 -48.8M861 397.7l0.2 13.1M862.3 468.4l0.1 5.4M864.6 463.1l0.1 21.3M868.3 484.4l0.2 -19.1M870.5 484.4l0.2 -10M871.7 410.9l0.2 31.6M873.9 474.7l0.1 -30.6M877.8 482.2l0.1 -24.4M880.5 424.6l0.1 30M881.7 226.5l0.1 18.2M882.9 402.6l0.1 8.5M885.4 458.6l0.1 24.9M890 438.9l0.1 -15.5M891.4 337.8l0.1 65.3M893.5 457.5l0.1 -10.3M897.8 484.4l0.1 -34.5M898.7 446.5l0.1 -7.1M899.7 366.1l0.1 -20.6M900.6 347.9l0.1 20M901.5 439.9l0.1 7.1M902.4 473.4l0.1 11M907.3 463.6l0.1 -35.9M908.5 343.8l0.1 31.6M910.4 484.4l0.1 -27.5M915.4 447.8l0.1 -12.9M916.2 236l0.1 -14.4M917 435l0.1 19.9M921.7 484.4l0.1 -20.3M923.6 410.3l0.1 -23.4M928.9 481.6l0.1 -15.3M929.6 443.8l0.1 -3.9M930.4 347.6v-29.9M931.1 373.3l0.1 15.5M931.8 451.9l0.1 5.9M935.6 466.6l0.1 15.1M937.2 342.3l0.1 -3.4M942 484.4l0.1 -10.1M942.9 439.3l0.1 -13.1M943.6 231.7l0.1 24.8M944.2 435.1l0.1 -4.8M948 484.4l0.1 -26.2M949.5 347.5l0.1 -20.2M951 459.2l0.1 -3.7M954.4 470.5v-6.7M955 387.9l0.1 -21.5M955.6 376.2l0.1 19.2M956.2 468.2l0.1 5.5M959.4 466.2v-16M960.5 462.7v-20.3M961 441.5l0.1 20.4M962.1 450.9l0.1 14.3M965.4 444.9l0.1 10.7M966 268.2l0.1 -8.6M966.6 449.6v34.8M970.4 451.8l0.1 -6.7M971.3 468.6v15.8M974.7 484.4v-23.2M975.6 476.3l0.1 -17M976.2 425.5v25.3M977.2 452.2l0.1 27.5M980.4 462.2l0.1 -20.7M980.9 444.2l0.1 19.9M984 484.4v-11.4M984.8 459l0.1 -13.1M985.3 313.2v59.5M985.8 446.1v30.7M989.4 470.5l0.1 -37.8M990 460.4l0.1 -25.1M992.8 456.7v27.7M993.6 426v-22.6M994 420.7l0.1 18.4M994.9 469.9v14.5M997.7 460.1l0.1 -30M998.3 484.4l0.1 -31.3M1001.3 475.9v-24.4M1001.7 387.2v-27.3M1002.1 403.8l0.1 16.2M1002.8 470.5l0.1 9.4M1005.3 466.7l0.1 17.7M1006.1 458.4l0.1 -22.3M1008.6 466.8v17.6M1009.3 444.5v-23.2M1009.7 442.5v17.9M1010.3 460l0.1 -2.9M1012.7 462.5v21.9M1013.5 422.6l0.1 -2M1015.8 467v17.4M1016.5 389.3v-28.1M1016.8 409.2l0.1 16.1M1017.5 465.3v19.1M1020 439.5v-60.7M1020.5 451l0.1 33.4M1023 446.7v-6.8M1023.4 272.2l0.1 19M1023.9 436.5v47.9M1026.2 432l0.1 -15M1026.8 430.4v40.1M1027.5 472.3l0.1 12.1M1029.6 465.4v-9.4M1029.9 288.6v46.1M1030.2 444.8l0.1 -1.4M1032.5 484.4v-14.3M1033 352v32.6M1033.7 484.4v-16.1M1035.7 475.6v8.8M1036.1 408.5v33.7M1036.7 461.8l0.1 2.1M1038.7 467.7v16.7M1039.3 471.2v-36.2M1041.4 484.4l0.1 -38.9M1041.9 339.7v5.2M1042.3 461.1v23.3M1044.3 441.9l0.1 6.6M1044.8 445.9v29.3M1045.4 443.1v12.8M1047.2 451.6v32.8M1047.6 425.5v32.4M1048.2 459.6v24.8M1050.1 484.4l0.1 -110.7M1050.8 484.4v-15.9M1052.5 418.1l0.1 16.4M1052.8 309.2l0.1 8M1053.2 437.8v35.6M1054.9 461.3v23.1M1055.4 371.8l0.1 0M1056.1 481.8v-20M1057.8 483.2v-10.5M1058.1 332.8v64.2M1058.4 442.7v41.7M1060.2 459.2v-6.3M1060.8 429l0.1 9.1M1062.6 484.4v-37.2M1062.9 400.3v-72.6M1063.2 484.4v-15.6M1064.7 484.4l0.1 -25.6M1065.2 480.5v-17.7M1065.4 407.5l0.1 4.7M1065.9 484.4l0.1 -16.9M1067.5 445.5v9.2M1067.7 311.1l0.1 -5.2M1068 434.2l0.1 -16.1M1069.5 464.9v6.1M1069.9 395.7l0.1 -1.2M1070.2 393.8v1M1070.6 484.4v-21.2M1072.1 415.6v24.7M1072.4 323.7v84.2M1072.9 484.4v-21.2M1074.1 484.4l0.1 -10.6M1074.4 386.9v-0.6M1074.6 384.3l0.1 0.2M1074.9 388v2.5M1076.2 484.4v-26.4M1076.6 481.4l0.1 -16.5M1076.9 412.3v29.1M1077.4 458.9v12.8M1078.6 414.3v-17.8M1078.8 372v-0.4M1079 371l0.1 0.2M1079.3 374.3v0.7M1079.5 455.8v4.9M1080.9 450.2v34.2M1081.3 467.4l0.1 -30.6M1082.6 452.4l0.1 -17.8M1082.9 370.2v-0.4M1083.1 367.8v-0.1M1083.3 367.8v0.1M1083.5 370l0.1 0.4M1083.8 443.2v17.8M1085.2 484.4v-24.7M1085.5 440.5v-9.5M1086.7 431.9v-17.8M1086.9 374.1v-0.3M1087.1 372.2v-0.2M1087.3 371.7l0.1 0M1087.6 372.6v0.3M1087.8 375.1v0.4M1088.8 484.4v-33.1M1089.3 378.7v-16M1089.8 463.9v-0.3M1090.8 382.8l0.1 -6.2M1091.1 373.7v-0.2M1091.3 369.4v3.2M1091.5 373.6v0.3M1091.7 377v17.1M1092.7 448.7l0.1 23.9M1093.2 433.7v-54.5M1093.4 433.2l0.1 -6.3M1094.6 473.3v-17.8M1094.8 382.5v-0.4M1095 380v-0.2M1095.2 379.8v0.1M1095.4 381.9v0.5M1095.6 450.5v17.8M1096.9 484.4v-20.5M1097.2 484.4v-16.8M1098.3 475.6v-17.8M1098.5 394.4v-0.4M1098.7 392.1v-0.1M1098.9 387.7v3.7M1099.1 392.1v0.2M1099.3 394.3v0.4M1099.5 472v12.4M1100.6 484.4v-8.6M1100.8 435.9v26.4M1102 480.5v-17.8M1102.2 426.6v-0.3M1102.4 424.7v-0.1M1102.6 424.4v0M1102.7 425.7l0.1 0.3M1102.9 428.6l0.1 14.2M1104.1 446.2v38.2M1104.3 429l0.1 32.2M1104.7 463.1l0.1 21.3M1105.7 419.6v-0.5M1105.9 417v-0.1M1106.1 416.7v0.2M1106.3 418.7v0.4M1106.5 468.2v16.2M1107.7 484.1v-21.9M1107.8 474l0.1 10.4M1109 441.6v-17.8M1109.2 390.1v-0.4M1109.4 388.2v-0.1M1109.6 388.3v0.2M1109.8 390.5v0.4M1109.9 460.1l0.1 17.8M1111.1 477.2v-25.9M1111.3 484.4v-28M1112.4 463.1v-17.8M1112.5 384.3l0.1 -0.4M1112.7 382v-0.1M1112.9 381.8v0.1M1113.1 383.6v0.4M1113.2 429.6l0.1 17.8M1114.1 469.7v14.7M1114.5 355.9v11.5M1114.9 445.1v29.3M1115.7 382.2v-0.5M1115.9 379v-0.2M1116.1 377.8v0M1116.2 378.4l0.1 0.2M1116.4 380.9v0.4M1116.6 472.7v11.7M1117.5 442v42.4M1117.9 415.8v21.5M1118.8 434.8l0.1 -17.8M1119 380.6v-0.3M1119.2 378.7v-0.2M1119.3 378.5l0.1 0.1M1119.5 380v0.4M1119.7 404.2v17.8M1120.6 484.4v-35.3M1121 481v-34M1122 446.9v-17.8M1122.2 388.4v-0.4M1122.3 386.4l0.1 -0.1M1122.5 386.9v0.3M1122.7 389.9v0.6M1123.5 462.8v18M1123.9 368.5v-1.7M1125 484.4v-12.5M1125.2 394.6v-0.5M1125.3 392v-0.2M1125.5 391.7v0.2M1125.6 393.9l0.1 0.4M1125.8 457.4v22.3M1126.9 484.4v-112.1M1127.2 484.4l0.1 -38.2M1128 450l0.1 -17.7M1128.2 401.8v-0.4M1128.4 400.1v-4.3M1128.5 401v0.3M1128.7 405.9v17.8M1129.5 467.2v-14.5M1129.8 474.4v-28.8M1130 484.4v-37.2M1130.9 484.4v-17.6M1131 426.5l0.1 -0.4M1131.2 424.5v-0.1M1131.3 424.3l0.1 0.1M1131.5 426v0.3M1131.7 454.5v22.9M1132.5 423l0.1 33M1132.8 484.4l0.1 -28.3M1133.7 474.9v-17.8M1133.9 428.3v-0.3M1134 426.5v-0.2M1134.2 426.2v0.1M1134.3 427.6v0.3M1134.5 433.6v17.8M1135.2 476.5v7.9M1135.5 390.4v-35.1M1135.7 465.9v18.5M1136.5 473.3v-20.3M1136.7 407.8v-0.3M1136.8 405.7v-0.1M1137 405.8v0.2M1137.1 408.2v0.4M1137.9 484.4v-23.6M1138.2 447v-75.9M1138.4 450.7l0.1 33.7M1139.3 411.3v-17M1139.4 391.5v-0.3M1139.5 390l0.1 -0.1M1139.7 390.2v0.1M1139.8 392.1l0.1 0.4M1140 444v17.8M1140.9 484.4v-21.2M1141.1 439.5v36.4M1141.9 388.6l0.1 -0.5M1142.1 385.6v-0.3M1142.2 384.3v-0.1M1142.4 384.6v0.1M1142.5 386.5v0.4M1142.6 439.2l0.1 17.8M1143.6 403.9v-9.4M1143.9 476.3v6M1144.6 382.4v-0.5M1144.8 379.5v-0.2M1144.9 379v0M1145 380.7l0.1 0.4M1145.2 424.6v17.8M1146 439.7v-16M1146.3 467.6v-42M1147 477l0.1 -17.8M1147.2 386.3v-0.4M1147.3 383.8v-0.1M1147.4 383.3l0.1 0M1147.6 384.6v0.3M1147.7 389.5v17.8M1148.3 463.5l0.1 -23.2M1148.7 385.2v-6.5M1149 484.4v-23.3M1149.6 443.5v-17.7M1149.7 390.1v-0.4M1149.8 388.1l0.1 -0.1M1150 387.9v0.1M1150.1 389.5v0.3M1150.2 410.8l0.1 17.8M1151 461.4v-13.3M1151.2 454.4v30M1151.5 463.6v20.8M1152.1 406.4v-0.5M1152.2 403.8l0.1 -0.2M1152.4 401.9v1M1152.5 403.6v0.2M1152.6 406l0.1 0.5M1153.3 464.7v15.6M1153.6 363.6v35.1M1153.9 473.3v11.1M1154.5 457.6l0.1 -17.8M1154.7 425.8v-0.3M1154.8 422.4v2.1M1154.9 425.9v-2.8M1155.1 463.3v14.3M1155.7 449.6v34.8M1156 375.1v96.3M1156.3 440.4v34.3M1156.9 450.5v-0.4M1157 438.1v9.6M1157.1 447l0.1 -5.5M1157.3 447.5v0.1M1157.4 449.5v0.4M1158.2 464.3v-28.1M1158.4 405.2v51.4M1159.1 484.2v-17.8M1159.3 410.2v-0.4M1159.4 408v-0.2M1159.5 407.4v0.1M1159.6 408.5v0.2M1159.8 411.2v0.4M1160.4 465.2v19.2M1160.8 484.4v-26.4M1161.4 476.6v-17.8M1161.6 403.9v-0.3M1161.7 401.8v-0.2M1161.8 401.3v0M1161.9 402.5v0.3M1162 405.5l0.1 9.9M1162.6 459.6v-13.9M1162.9 472v-52.6M1163 420.7l0.1 29.4M1163.7 478.2v-22.9M1163.8 398l0.1 -0.5M1164 395.4v-0.2M1164.1 395.5v0.2M1164.2 398.3v0.5M1164.8 474.8l0.1 5M1165.1 420.9l0.1 63.5M1165.9 484.4v-9.9M1166 395v-0.4M1166.1 392.5v-0.2M1166.2 391.8v0M1166.3 392.9l0.1 0.3M1166.5 395.8v2.6M1167 448.9l0.1 25.5M1167.3 428.4v4.5M1167.6 446.4v20.7M1168.2 397.1v-0.5M1168.3 393.9v-0.2M1168.4 393.2v0.1M1168.5 394.8v0.3M1168.6 430.9l0.1 17.8M1169.3 438.1v38.3M1169.6 453.4v-22.3M1170.2 452.2v-17.7M1170.3 402.1v-0.3M1170.4 400.2l0.1 -0.1M1170.6 400v0.1M1170.7 401.5v0.3M1170.8 414.5v17.8M1171.5 484.4v-14.7M1171.7 453.1v31.3M1172.4 411.6v-0.4M1172.5 408.7v-0.3M1172.6 407.6v0M1172.7 408.4v0.2M1172.8 411.1v0.5M1173.4 484.4v-11.2M1173.5 472.6l0.1 11.8M1173.8 449v-18.7M1174.4 444.8v-17.8M1174.5 424.1v-0.3M1174.6 422.5v-0.1M1174.7 422.3v0.1M1174.8 423.5v0.3M1174.9 426.2l0.1 1.5M1175.6 442.1v20.1M1175.8 484.4v-34.7M1176.5 446.7v4.7M1176.6 448.8v-3.4M1176.7 447.5v-0.1M1176.8 447.8v0.2M1176.9 449.8v0.4M1177.4 472.7l0.1 -22.4M1177.7 475.7v-43.6M1177.8 433.6l0.1 20.1M1178.5 428.3v-9.4M1178.6 416.1v-0.3M1178.7 414.8v0M1178.8 415.6v0.2M1178.9 418.5v0.5M1179.4 469.1l0.1 -2.4M1179.7 376.1v12.9M1179.9 484.4v-24.9M1180.4 413.1l0.1 -0.4M1180.5 410.3l0.1 -0.2M1180.6 409l0.1 0M1180.8 409.4v0.1M1180.9 411.3v0.3M1181 459.4v17.8M1181.6 439.1v-47.5M1181.9 484.4v-10.7M1182.4 431.3v-17.8M1182.5 400.1v-0.3M1182.6 396.5v2.3M1182.7 400.2v0.4M1182.8 437.7v17.8M1183.2 465.3v9.9M1183.5 449.9v34.5M1183.7 431.9v52.5M1184.3 453.7v-10.8M1184.4 393.4v-0.4M1184.5 391.3v-0.1M1184.6 391.5v0.2M1184.7 394.1v0.4M1184.9 484.4v-9.2M1185.3 456.7v27.7M1185.6 484.4v-44.7M1185.8 484.4v-10.8M1186.2 396v-0.5M1186.3 392.9v-0.2M1186.4 392.1v0M1186.5 393.6v0.4M1186.6 426.3v17.8M1187.2 450.2v31.1M1187.5 454.1v30.3M1188 441.2v-17.8M1188.1 399.7v-0.3M1188.2 397.9v-0.1M1188.3 398.1v0.2M1188.4 400.3v0.4M1188.5 469.7v14.7M1189.1 440.1v-23.8M1189.3 484.4v-42.9M1189.7 484.4l0.1 -8.3M1189.9 412.1v-0.5M1190 409.3v-0.2M1190.1 408.7v0M1190.2 410v0.3M1190.3 424.1v17.8M1190.9 427.6v35.1M1191.1 423.9v11.6M1191.7 439.1v-0.4M1191.8 436.4v-0.2M1191.9 435.1v0M1192 435.3v0.1M1192.1 436.9v0.3M1192.2 457.5v17.7M1192.8 484.4v-11.7M1192.9 450.4v33.7M1193.5 454.5v16.9M1193.6 456.6v-20.1M1193.7 454.6v-0.1M1193.7 455l0.1 0.3M1193.8 457.8l0.1 0.5M1194.2 474.1v-16.9M1194.4 436.7l0.1 -1M1194.6 484.4l0.1 -59.1M1194.9 467.7v-5M1195.2 436.4v3.6M1195.3 423.5v-3.9M1195.4 421.9v0M1195.5 422.5v0.2M1195.6 425.1v0.5M1196.1 484.4v-17.4M1196.3 416.4v-29.3M1196.5 473v11.4M1196.9 415.5l0.1 -0.4M1197 412.6v-0.2M1197.1 411.2v-0.1M1197.2 411.3v0.1M1197.3 412.9v0.3M1197.4 432.6v17.8M1197.8 454.2v30.2M1198 425.8l0.1 58.6M1198.6 484.4l0.1 -31.5M1198.7 410.3l0.1 -0.4M1198.8 407.8v-0.2M1198.9 407.8v0.2M1199 410.4v0.5M1199.2 478.7v-10.4M1199.6 448.1v-14.5M1199.8 448.6v1.1M1200.4 434.4v-17.8M1200.5 403.3v-0.3M1200.5 401.8l0.1 -0.1M1200.6 402.5v0.2M1200.7 405.5v0.5M1201.3 484.4v-27.8M1201.5 434.8v20.7M1202 484.4v-23.4M1202.1 413.4v-0.4M1202.2 410.8v-0.2M1202.3 410.5v0.2M1202.4 412.6v0.5M1202.4 435.9l0.1 45.5M1203 445.1v24.7M1203.1 438.1l0.1 3.8M1203.6 459.2v-0.1M1203.7 415.9v-0.5M1203.8 413.1v-0.2M1203.9 412.3v0M1204 408.6v-4.1M1204.1 416.5v10.8M1204.6 484.4v-20.7M1204.7 439v45.4M1204.9 465.1v19.3M1205.3 423.2l0.1 -0.4M1205.4 420.8v-0.2M1205.5 420.4v0M1205.6 421.9v0.3M1205.7 446.4v17.7M1206.2 484.4v-35.1M1206.4 484.4v-12.2M1206.8 471.8v2.6M1206.9 442.2v-0.4M1207 439.9v-0.2M1207.1 439.2v0M1207.2 433.6v-1.3M1207.3 442.8v0.4M1207.7 441.9v20.4M1207.9 394.7v0.3M1208.1 452.8v-19.7M1208.5 472.1v-0.5M1208.6 458.5v2M1208.7 468v0M1208.7 468.5l0.1 0.1M1208.8 470.6v0.4M1209.3 461.5v22.9M1209.5 411.9v72.5M1209.7 484.4l0.1 -8.6M1210.1 432.6v-0.4M1210.2 430.3v-0.2M1210.2 429.6l0.1 0.1M1210.3 418.1v1.4M1210.4 433.2v0.5M1210.9 449.1v-23.2M1211.1 484.4v-29.7M1211.6 468.2v-21M1211.7 417.2v-0.4M1211.7 415l0.1 -0.1M1211.8 415.1v0.2M1211.9 417.5v0.5M1212.3 484.4v-8.1M1212.5 468.6v15.8M1212.7 441.1v43.3M1213.1 418v-0.4M1213.2 415.1v-0.3M1213.3 413.9v-1.1M1213.4 414.6v0.2M1213.5 417v0.5M1213.9 467.7v-9.4M1214.1 425.2v5.9M1214.3 453.1v22.3M1214.7 415.2v-1M1214.7 411.3l0.1 -0.2M1214.8 410.3v0M1214.9 411.6v0.3M1215 430.8v17.8M1215.5 477.5v-42.2M1215.7 441.1v15.2M1216.1 440.4v-17.8M1216.2 413.7v-0.3M1216.3 412.2v-0.1M1216.4 412.7v0.2M1216.5 415.3v0.4M1216.9 471.5v12.9M1217.1 436.6v47.8M1217.6 446.6v-17.8M1217.7 415.3v-0.3M1217.8 413.7v0M1217.8 414.1l0.1 0.2M1217.9 416.5v0.4M1218.1 464.7v6.3M1218.4 484.4v-39.4M1218.5 443.4v41M1218.7 437.3v47.1M1219.1 431.7v-0.5M1219.2 428.8v-0.2M1219.2 423.5l0.1 4.3M1219.3 428.8v0.3M1219.4 431.7v0.5M1219.8 448.2v35.1M1220 417.4v67M1220.1 452.2l0.1 29.4M1220.6 444.2v-0.4M1220.6 441.6v-0.2M1220.7 441.2v0.1M1220.8 443.1v0.4M1220.9 442v19.5M1221.3 422v5.1M1221.5 437.5v-14.4M1221.9 475.3v9.1M1222 421.7v36.7M1222.1 468.9v7.3M1222.2 423.7v12.6M1222.5 475.8v8.6M1222.7 421.9v25.6M1222.9 430.2v4.5M1223.3 461.4v0.6M1223.4 455.1v-4M1223.5 448v-0.2M1223.5 447.2v0.1M1223.6 416v33.7M1223.7 421.8v22.8M1223.9 484.4l0.1 -9.7M1224.1 439.9v-29.3M1224.3 484.4v-54.5M1224.6 478.4l0.1 -15.6M1224.8 429v-0.6M1224.9 425.6v-0.2M1224.9 424.7v0.1M1225 402.2v15.6M1225.1 459.2v-32.4M1225.3 484.4v-15.3M1225.5 406.2v29.2M1225.7 404.4v7.3M1225.9 467v17.4M1226.1 423v-0.5M1226.2 416.6v3M1226.3 418.7v-0.1M1226.4 419.3v0.2M1226.4 421.8v0.5M1226.7 484.4v-16M1226.9 451v-25.6M1227.1 427.9v-8.7M1227.2 467.4v6.7M1227.5 431v-0.5M1227.6 428v-0.2M1227.6 426.7v0M1227.7 427v0.1M1227.8 428.8v0.4M1227.9 473.7v10.7M1228.2 484.4v-22.6M1228.4 422.6v61.8M1228.8 455.8v6.1M1228.9 424.5v-0.3M1228.9 422.2v-0.2M1229 418.6v2.8M1229.1 422.1v-15.9M1229.2 424.4v0.4M1229.3 464.3v18.1M1229.7 478.4v-35.2M1229.8 455.6v-15.8M1230.2 484.4v-24.9M1230.2 421.9v-0.5M1230.3 419.3v-0.2"/>
<path d="M137 446.7l37.1 -0.3M304.6 442l11.2 -2.7M375.1 424.5l6.6 5.1M420.4 416.5l4.7 2.7M453.9 405.6l3.6 -1.7M480.4 389.7l3 -2.2M502.5 367.5l2.5 -3.4M521.2 334.7l2.2 -5.2M537.7 276.8l1.9 -11.7M552.2 94.6l1.7 64.1M565.3 291.9l1.5 8.4M577.1 342.2l1.5 4.4M588 372.3l1.3 3.1M598 393.9l1.2 2.3M607.3 410.5l1.2 1.8M616 423.9l1.1 1.3M624.1 442.1l1 -8.7M631.8 434.3l0.9 -31.8M639 277.4l0.9 -39M645.8 412l0.9 10.4M656.2 452.8l0.8 31.6M670.7 474.7l0.7 -0.4M676.1 463.1l0.7 -1M681.3 417.3l0.6 30.1M686.2 400l0.6 -7.5M691 290.2l0.6 -43.2M695.6 345.6l0.6 13.7M700.1 417.8l0.5 5.7M704.4 455.3l0.5 3.9M708.5 470.8l0.5 12.7M721.2 448.8l0.5 3.2M728.4 449.4l0.4 -36.9M733.1 428.1l0.5 -26.1M741.3 457.4l0.4 27M752.4 456.2l0.3 9.7M755.2 401.6l0.4 17.3M758.1 226.5l0.3 -23.9M760.8 400l0.4 9M763.5 460.8l0.4 4.9M773.2 484.4l0.3 -19.3M779.2 406l0.3 15.3M781.9 313.1l0.3 4.1M784.2 463.9l0.3 -49.1M794.3 484.4l0.3 -14.9M797.9 468.2l0.3 -5M800 412.9l0.2 -11.2M802 227.9l0.2 35.1M803.9 397.6l0.3 7.2M805.9 473l0.2 -20.9M814.7 467.7l0.2 -29.5M817.8 484.4l0.2 -8M819.6 409.3l0.2 32.8M823 444.5l0.2 3.8M830.3 478.2l0.2 -42.4M833.5 477.4l0.2 -22.9M835 475l0.2 9.4M839.4 484.4l0.2 -9.9M844.5 451.8l0.1 -8.3M847.1 460.3l0.2 -21.4M848.5 448.4l0.2 19.6M850.9 457.4l0.2 -12.8M857 472.4l0.2 -26.7M858.6 441.2l0.2 -26.5M859.9 285.9l0.2 -43.4M861.2 410.8l0.1 10.4M862.4 473.8l0.2 5.1M865.6 484.4l0.2 -9.7M868.5 465.3l0.1 -26.1M870.7 474.4l0.1 -19.4M871.9 442.5l0.1 21.9M874 444.1l0.1 5.9M877.9 457.8l0.2 12.4M880.6 454.6l0.2 29.8M881.8 244.7l0.2 147M883 411.1l0.2 57.6M887.6 484.4l0.1 -18.9M890.1 423.4l0.1 19.9M891.5 403.1l0.1 40.7M893.6 447.2l0.1 28.1M897.9 449.9l0.1 -11.3M898.8 439.4l0.2 -17.2M899.8 345.5l0.1 -28.8M900.7 367.9l0.1 15.8M901.6 447l0.1 6.1M903.3 476.9l0.1 -5.4M907.4 427.7l0.1 3.5M908.6 375.4l0.1 60.3M910.5 456.9l0.1 9.5M915.5 434.9l0.1 -3M916.3 221.6l0.1 21.4M917.1 454.9l0.1 -25.6M921.8 464.1l0.1 -3.1M923.7 386.9l0.1 12.6M929 466.3l0.1 11.3M929.7 439.9l0.1 -16.8M930.4 317.7l0.1 -56.9M931.2 388.8l0.1 12.8M931.9 457.8l0.1 5.5M936.4 476.7v-29.6M937.3 338.9l0.1 35.7M942.1 474.3l0.1 10.1M943 426.2l0.1 -12.6M943.7 256.5v75.3M944.3 430.3l0.1 9.8M948.1 458.2v-0.4M949.6 327.3v15.6M951.1 455.5v28.9M954.4 463.8l0.1 -21.3M955.1 366.4v-31M955.7 395.4v15.2M956.3 473.7v5.7M959.4 450.2l0.1 18.7M960.5 442.4l0.1 -28.1M961.1 461.9l0.1 16.2M962.2 465.2l0.1 19.2M965.5 455.6l0.1 -11.6M966.1 259.6v28.2M966.6 484.4l0.1 -55.7M970.5 445.1l0.1 30.1M971.6 484.4l0.1 -16.8M974.7 461.2l0.1 -4.9M975.7 459.3l0.1 -22M976.2 450.8l0.1 18.8M979.5 484.4v-12.7M980.5 441.5v-29M981 464.1v15.2M984 473l0.1 -19.9M984.9 445.9v-15.4M985.3 372.7l0.1 30.4M986.2 484.4l0.1 -21.6M989.5 432.7v-86.7M990.1 435.3l0.1 11.2M993.2 484.4v-20.4M993.6 403.4l0.1 -33.4M994.1 439.1v14.6M996.8 481l0.1 -10.7M997.8 430.1v-57.6M998.4 453.1v-3.8M1001.3 451.5l0.1 -8M1001.7 359.9l0.1 -46.5M1002.2 420v13.3M1004.7 484.4l0.1 -25.7M1005.6 482.5v-39.5M1006.2 436.1v14.4M1008.9 484.4l0.1 -30.5M1009.3 421.3l0.1 -34.7M1009.7 460.4l0.1 14.1M1010.4 457.1v27.3M1013 484.4v-56.8M1013.6 420.6v37.9M1016.1 484.4l0.1 -50.8M1016.5 361.2l0.1 -49.7M1016.9 425.3v13.4M1019.2 482.5v-25.3M1020 378.8l0.1 -8.3M1020.9 484.4v-30.2M1023 439.9l0.1 31.5M1023.5 291.2v118.8M1024.2 484.4v-31.3M1026.3 417v21.2M1026.8 470.5v13.9M1029 484.4v-13M1029.6 456v-13.1M1029.9 334.7l0.1 47.2M1030.3 443.4v23M1032.5 470.1l0.1 -34.2M1033 384.6l0.1 58.8M1033.7 468.3l0.1 10M1035.8 478.5l0.1 -18.1M1036.1 442.2l0.1 22.8M1036.8 463.9v20.5M1038.9 484.4v-32M1039.3 435l0.1 3.7M1041.5 445.5v-21M1041.9 344.9v52.1M1042.5 484.4l0.1 -11.3M1044.4 448.5v35.9M1044.8 475.2l0.1 9.2M1045.4 455.9l0.1 28.5M1047.3 484.4v-11.9M1047.6 457.9v22.2M1049.5 484.4v-16.3M1050.2 373.7v-19.4M1050.8 468.5l0.1 -3.4M1052.6 434.5v49.9M1052.9 317.2v59.6M1053.2 473.4l0.1 11M1055.1 484.4v-39.7M1055.5 371.8v41.5M1056.1 461.8v15.6M1057.8 472.7l0.1 -14.7M1058.1 397v31.3M1058.6 484.4v-20.9M1060.2 452.9l0.1 31.5M1060.9 438.1v46.3M1062.6 447.2l0.1 -15.9M1062.9 327.7l0.1 -25.6M1063.2 468.8l0.1 -46.1M1064.8 458.8v-12.7M1065.2 462.8v-17.8M1065.5 412.2v17.8M1066 467.5v-17.1M1067.5 454.7v25.7M1067.8 305.9v33.1M1068.1 418.1v21.4M1069.5 471l0.1 13.4M1070 394.5v-0.8M1070.2 394.8v1.2M1070.6 463.2l0.1 2.2M1072.1 440.3v44.1M1072.4 407.9l0.1 37.9M1072.9 463.2v-5.9M1074.2 473.8v-17.8M1074.4 386.3v-0.6M1074.7 384.5v0.2M1074.9 390.5v17.8M1076.2 458l0.1 -18.5M1076.7 464.9v-20.1M1076.9 441.4v20.7M1077.4 471.7v12.7M1078.6 396.5v-17.8M1078.8 371.6l0.1 -0.2M1079.1 371.2v0.3M1079.3 375v10.8M1079.5 460.7l0.1 23.7M1081 484.4l0.1 -14.3M1081.4 436.8v6.4M1082.7 434.6v-17.7M1082.9 369.8v-0.4M1083.1 367.7v-0.1M1083.3 367.9l0.1 0.2M1083.6 370.4v0.5M1083.8 461v17.8M1085.2 459.7v-50.5M1085.5 431l0.1 27.6M1086.7 414.1v-17.8M1086.9 373.8l0.1 -0.3M1087.1 372l0.1 -0.1M1087.4 371.7v0.1M1087.6 372.9v0.2M1087.8 375.5v0.4M1088.8 451.3v3.7M1089.3 362.7v19.8M1089.8 463.6v20.8M1090.9 376.6v-0.5M1091.1 373.5v-0.3M1091.3 372.6v0M1091.5 373.9v0.4M1091.7 394.1v17.8M1092.8 472.6v11.8M1093.2 379.2v-36.2M1093.5 426.9v30.9M1094.6 455.5v-17.8M1094.8 382.1l0.1 -0.5M1095 379.8l0.1 -0.1M1095.2 379.9l0.1 0.2M1095.4 382.4l0.1 0.4M1095.6 468.3l0.1 16.1M1096.9 463.9l0.1 -38.3M1097.2 467.6v-23.5M1098.3 457.8v-17.8M1098.5 394v-0.3M1098.7 392v-0.2M1098.9 391.4v0M1099.1 392.3v0.2M1099.3 394.7v0.4M1100.2 484.4v-10.2M1100.6 475.8v-21.3M1100.8 462.3v19M1102 462.7v-17.7M1102.2 426.3v-0.3M1102.4 424.6v-0.1M1102.6 424.4v0.1M1102.8 426v0.3M1103 442.8v17.8M1104.2 484.4v-9.6M1104.4 461.2v22.1M1105.6 484.4v-31.5M1105.7 419.1l0.1 -0.4M1105.9 416.9l0.1 -0.2M1106.1 416.9v0.1M1106.3 419.1v0.5M1107.3 484.4v-27.6M1107.7 462.2v-31.5M1107.9 483.5l0.1 -44.5M1109 423.8l0.1 -17.7M1109.2 389.7l0.1 -0.3M1109.4 388.1v-0.1M1109.6 388.5v0.1M1109.8 390.9v0.4M1110.7 483v-24M1111.1 451.3v-42.5M1111.3 456.4l0.1 -17.2M1112.4 445.3v-17.8M1112.6 383.9v-0.3M1112.7 381.9l0.1 -0.1M1112.9 381.9v0.1M1113.1 384v0.4M1113.3 447.4v17.8M1114.2 484.4v-52.3M1114.5 367.4v72.4M1114.9 474.4v10M1115.7 381.7l0.1 -0.5M1115.9 378.8v-0.2M1116.1 377.8v0M1116.3 378.6v0.2M1116.4 381.3v0.5M1116.7 484.4v-8.3M1117.6 484.4l0.1 -43.8M1117.9 437.3v47.1M1118.9 417v-17.8M1119 380.3v-0.3M1119.2 378.5v-0.1M1119.4 378.6v0.1M1119.5 380.4v0.3M1119.7 422v17.8M1120.6 449.1v-10.8M1121 447v4.5M1122 429.1v-17.8M1122.2 388v-0.4M1122.4 386.3v-6.3M1122.5 387.2v0.2M1122.7 390.5v9.5M1123.7 484.4v-13.8M1123.9 366.8v38.4M1125 471.9v-17.8M1125.2 394.1v-0.4M1125.3 391.8l0.1 -0.1M1125.5 391.9v0.2M1125.7 394.3v0.5M1126.5 481.5v-38.7M1126.9 372.3v-18.2M1127.3 446.2v-2.3M1128.1 432.3v-17.8M1128.2 401.4v-0.3M1128.4 395.8v4.3M1128.5 401.3l0.1 0.3M1128.7 423.7v17.8M1129.5 452.7v21.3M1129.8 445.6v-51.5M1130 447.2v-8.4M1130.9 466.8v-17.8M1131.1 426.1v-0.3M1131.2 424.4v-0.1M1131.4 424.4v0.2M1131.5 426.3v0.4M1132.2 484.4v-8.6M1132.6 456v28.4M1132.9 456.1v-26.7M1133.7 457.1l0.1 -17.8M1133.9 428v-0.3M1134 426.3l0.1 0M1134.2 426.3v0.1M1134.3 427.9l0.1 0.3M1134.5 451.4v17.8M1135.3 484.4v-24.3M1135.5 355.3v3.7M1135.8 484.4v-20.5M1136.5 453l0.1 -14.1M1136.7 407.5v-0.4M1136.8 405.6l0.1 -0.1M1137 406v0.2M1137.1 408.6l0.1 0.5M1137.9 460.8v7.2M1138.2 371.1l0.1 -12.2M1138.6 482.6v-36.3M1139.3 394.3v-0.5M1139.4 391.2v-0.2M1139.6 389.9v0M1139.7 390.3v0.2M1139.9 392.5v0.4M1140 461.8v17.7M1140.9 463.2v-60.9M1141.1 475.9v8.5M1142 388.1v-0.4M1142.1 385.3v-0.2M1142.2 384.2l0.1 0M1142.4 384.7v0.2M1142.5 386.9v0.3M1142.7 457v17.8M1143.6 394.5v27.4M1144.5 478v-17.8M1144.6 381.9l0.1 -0.4M1144.8 379.3v-0.1M1144.9 379v0.2M1145.1 381.1v0.4M1145.2 442.4v17.8M1146 423.7v19.7M1146.3 425.6v-0.3M1147.1 459.2v-17.8M1147.2 385.9v-0.4M1147.3 383.7v-0.2M1147.5 383.3v0.1M1147.6 384.9v0.3M1147.7 407.3l0.1 17.8M1148.4 440.3v12.9M1148.7 378.7v31.1M1149 461.1v8.7M1149.6 425.8v-17.8M1149.7 389.7v-0.3M1149.9 388v-0.1M1150 388v0.1M1150.1 389.8v0.3M1150.3 428.6v17.8M1151 448.1v23.6M1151.3 484.4v-20.5M1152 484.4v-8.3M1152.1 405.9v-0.3M1152.3 403.6v-0.2M1152.4 402.9v0M1152.5 403.8v0.3M1152.7 406.5v0.4M1153.4 483v-31.7M1153.6 398.7v55.7M1154.3 484.4v-17.2M1154.6 439.8v-11.2M1154.7 425.5v-0.3M1154.8 424.5v0M1154.9 423.1l0.1 3.6M1155.1 477.6v-35.5M1155.8 484.4v-61.7M1156 471.4v13M1156.3 474.7v9.7M1156.9 450.1v-0.4M1157 447.7v-0.1M1157.2 441.5v5.4M1157.3 447.6v-16.2M1157.4 449.9v0.3M1158.2 436.2v8.4M1158.4 456.6v27.8M1159.1 466.4l0.1 -17.8M1159.3 409.8v-0.3M1159.4 407.8v-0.1M1159.5 407.5v0M1159.6 408.7l0.1 0.3M1159.8 411.6v10M1160.5 484.4v-27.9M1160.8 458v8M1161.4 458.8l0.1 -17.8M1161.6 403.6v-0.4M1161.7 401.6v-0.1M1161.8 401.3v0.1M1161.9 402.8v0.3M1162.1 415.4v17.8M1162.6 445.7v22.3M1162.9 419.4v-38.5M1163.1 450.1v34.3M1163.7 455.3v1.6M1163.9 397.5v-0.4M1164 395.2v-0.1M1164.1 395.7v0.2M1164.2 398.8v0.6M1165 484.4v-42.4M1165.2 484.4v-30.8M1165.9 474.5v-17.8M1166 394.6v-0.4M1166.1 392.3v-0.1M1166.2 391.8l0.1 0.1M1166.4 393.2v0.2M1166.5 398.4v17.8M1167.1 474.4v10M1167.3 432.9v50.4M1167.6 467.1v17.3M1168.2 396.6v-0.5M1168.3 393.7v-0.2M1168.4 393.3v0.1M1168.5 395.1l0.1 0.4M1168.7 448.7v17.7M1169.3 476.4l0.1 8M1169.6 431.1v13.8M1170.2 434.5v-17.8M1170.3 401.8l0.1 -0.3M1170.5 400.1v-0.1M1170.6 400.1v0.1M1170.7 401.8v0.3M1170.8 432.3v17.8M1171.5 469.7l0.1 -62.5M1171.8 484.4v-10.9M1172.4 411.2v-0.5M1172.5 408.4v-0.2M1172.6 407.6v0M1172.7 408.6v0.3M1172.8 411.6l0.1 4.2M1173.4 473.2v-25.8M1173.6 483.4v-41.7M1173.8 430.3v16.6M1174.4 427v-0.8M1174.5 423.8v-0.3M1174.6 422.4v-0.1M1174.7 422.4v0.1M1174.8 423.8l0.1 0.3M1175 427.7v17.8M1175.6 462.2v22.2M1175.8 449.7v0.7M1176.5 451.4v-0.4M1176.6 445.4v2.9M1176.7 447.4v0M1176.8 448v0.1M1176.9 450.2v0.4M1177.5 450.3v13.7M1177.7 432.1v-53.8M1177.9 453.7v30.7M1178.5 418.9v-0.5M1178.6 415.8v-0.3M1178.7 414.8v0M1178.8 415.8v0.3M1178.9 419v12.8M1179.5 466.7v17.7M1179.7 389v79.8M1179.9 459.5v-6.5M1180.5 412.7v-0.4M1180.6 410.1v-0.3M1180.7 409v-4.9M1180.8 409.5v0.2M1180.9 411.6v0.4M1181.4 484.4v-13.5M1181.6 391.6l0.1 -3.1M1181.9 473.7v10.7M1182.4 413.5v-10.5M1182.5 399.8v-0.3M1182.6 398.8v0.1M1182.7 400.6l0.1 0.4M1182.8 455.5l0.1 -1.7M1183.2 475.2v9.2M1183.6 484.4v-58.6M1183.8 484.4v-37.3M1184.3 442.9v-17.8M1184.4 393v-0.3M1184.5 391.2v-0.1M1184.6 391.7v0.2M1184.7 394.5v0.6M1184.9 475.2v9.2M1185.3 484.4v-39.6M1185.6 439.7v-10M1185.8 473.6v5.3M1186.2 395.5l0.1 -0.5M1186.3 392.7l0.1 -0.2M1186.4 392.1l0.1 0.1M1186.5 394l0.1 0.4M1186.6 444.1l0.1 17.8M1187.3 484.4v-68.1M1187.6 484.4v-14.2M1188 423.4l0.1 -17.7M1188.1 399.4l0.1 -0.3M1188.2 397.8l0.1 0M1188.3 398.3l0.1 0.2M1188.4 400.7l0.1 0.4M1188.6 484.4v-11.7M1189.1 416.3v12.1M1189.3 441.5v-7.1M1189.8 476.1v8.3M1189.9 411.6v-0.4M1190 409.1v-0.1M1190.1 408.7v0.1M1190.2 410.3v0.4M1190.3 441.9v17.8M1190.9 462.7v21.7M1191.1 435.5v48.9M1191.7 438.7v-0.4M1191.8 436.2v-2.3M1191.9 435.1v-0.1M1192 435.4v0.1M1192.1 437.2v0.3M1192.2 475.2v9.2M1192.8 472.7v-58.2M1193 484.4v-11.7M1193.5 471.4v5.9M1193.6 436.5v6.9M1193.7 454.5v0M1193.8 455.3v0.2M1193.9 458.3v0.6M1194.2 457.2v19M1194.5 435.7v39.4M1194.7 425.3v-21.4M1194.9 462.7v21.7M1195.2 440v-13.8M1195.3 419.6v3.3M1195.4 421.9v0M1195.5 422.7v0.2M1195.6 425.6v0.5M1196.1 467v-7.3M1196.3 387.1v8M1196.8 484.4v-18.8M1197 415.1v-0.5M1197 412.4l0.1 -6.8M1197.1 411.1l0.1 0M1197.2 411.4v0.2M1197.3 413.2v0.3M1197.4 450.4v17.8M1197.9 477.3v-38.7M1198.1 484.4v-24.7M1198.7 452.9v3.3M1198.8 409.9v-0.4M1198.8 407.6l0.1 -0.1M1198.9 408v0.2M1199 410.9v0.5M1199.2 468.3v16.1M1199.6 433.6v21.4M1199.8 449.7v34.7M1200.4 416.6v-10.7M1200.5 403v-0.3M1200.6 401.7v0M1200.6 402.7l0.1 0.3M1200.7 406v13.5M1201.3 456.6v4.4M1201.5 455.5v28.9M1202 461v-31.7M1202.1 413v-0.5M1202.2 410.6v-0.1M1202.3 410.7v0.1M1202.4 413.1v0.4M1202.5 476.8v-7.4M1203 469.8v14.6M1203.2 441.9v42.5M1203.6 459.1v25.3M1203.7 415.4v-0.4M1203.8 412.9v-0.2M1203.9 412.3v0.1M1204 404.5v9.5M1204.1 427.3v17.8M1204.6 463.7v-30.3M1204.8 484.4v-33.4M1205.3 484.4v-12.7M1205.4 422.8v-0.4M1205.4 420.6l0.1 -0.1M1205.5 420.4v0.2M1205.6 422.2v0.4M1205.7 464.1v17.8M1206.2 449.3v-8.7M1206.4 472.2v-31M1206.8 474.4v10M1206.9 441.8l0.1 -0.4M1207 439.7v-0.2M1207.1 439.2v0.1M1207.2 432.3v8.4M1207.3 443.2v3.1M1207.7 462.3v22.1M1207.9 395v42.1M1208.1 433.1v16.1M1208.5 471.6v-0.4M1208.6 460.5v8.2M1208.7 468v-6.1M1208.8 468.6v-11.7M1208.8 471v0.4M1209.3 484.4l0.1 -50.6M1209.5 484.4v-36.3M1209.8 475.8v8.6M1210.1 432.2v-0.4M1210.2 430.1v-0.1M1210.3 429.7v0M1210.3 419.5l0.1 11.6M1210.4 433.7v2.8M1210.9 425.9v13M1211.1 454.7v-6.4M1211.6 447.2v6.7M1211.7 416.8v-0.4M1211.8 414.9v-0.1M1211.8 415.3l0.1 0.2M1211.9 418v0.5M1212.3 476.3v8.1M1212.5 484.4v-65.3M1212.7 484.4v-30.5M1213.1 417.6l0.1 -0.5M1213.2 414.8v-0.2M1213.3 412.8v1.1M1213.4 414.8v0.2M1213.5 417.5v0.4M1213.9 458.3v26.1M1214.1 431.1v53.3M1214.3 475.4v9M1214.7 414.2v-0.5M1214.8 411.1v-0.3M1214.8 410.3v0.1M1214.9 411.9v0.4M1215 448.6v15.8M1215.5 435.3v-0.3M1215.7 456.3v28.1M1216.1 422.6l0.1 -6.4M1216.2 413.4v-0.2M1216.3 412.1v-0.9M1216.4 412.9v0.2M1216.5 415.7v0.5M1216.9 484.4v-11M1217.1 484.4v-36.8M1217.6 428.8v-10.9M1217.7 415v-0.3M1217.8 413.7v-0.1M1217.9 414.3v0.2M1217.9 416.9v0.5M1218.1 471v13.4M1218.4 445v-37.4M1218.6 484.4v-47.2M1218.8 484.4v-26.8M1219.1 431.2v-0.4M1219.2 428.6v-0.2M1219.3 427.8v0.1M1219.3 429.1v0.3M1219.4 432.2v16M1219.9 484.4v-39.2M1220 484.4v-31.3M1220.5 484.4v-30.4M1220.6 443.8v-0.4M1220.6 441.4l0.1 -0.1M1220.7 441.3v0.2M1220.8 443.5v0.4M1220.9 461.5v22.9M1221.3 427.1v51.7M1221.5 423.1v21.4M1221.9 484.4v-10.4M1222 458.4v18.3M1222.1 476.2v0M1222.2 436.3v41.3M1222.5 484.4v-16.3M1222.7 447.5v36.9M1222.9 434.7v49.7M1223.3 462v22.4M1223.4 451.1v-0.6M1223.5 447.8v-0.2M1223.5 447.3l0.1 0.2M1223.6 449.7v0.5M1223.7 444.6v39.8M1224 474.7v-7.4M1224.1 410.6v7.9M1224.3 429.9v-11.5M1224.7 462.8v20M1224.8 428.4v-0.5M1224.9 425.4v-0.2M1224.9 424.8v0.1M1225 417.8v9.4M1225.1 426.8v5.6M1225.3 469.1l0.1 11.3M1225.5 435.4v49M1225.7 411.7v57.7M1226 484.4v-14.6M1226.1 422.5l0.1 -0.5M1226.2 419.6v-0.2M1226.3 418.6v0M1226.4 419.5v0.3M1226.4 422.3v0.5M1226.7 468.4v-4.6M1226.9 425.4v10.7M1227.1 419.2v28.4M1227.2 474.1v10.3M1227.5 430.5v-0.4M1227.6 427.8v-0.2M1227.6 426.7l0.1 -0.4M1227.7 427.1v0.2M1227.8 429.2v0.3M1228.1 483.6v-21.5M1228.2 461.8v-52.2M1228.5 484.4v-34.5M1228.8 461.9v22.5M1228.9 424.2v-0.4M1228.9 422l0.1 -0.1M1229 421.4v0M1229.1 406.2v2.1M1229.2 424.8v0.4M1229.5 484.4v-19.9M1229.7 443.2v3.8M1229.8 439.8l0.1 19.9M1230.2 459.5v-20.2M1230.2 421.4l0.1 -0.4M1230.3 419.1v-0.1"/>
<path d="M174.1 446.4l28.8 -0.2M315.8 439.3l10.3 -0.9M381.7 429.6l6.3 -0.6M425.1 419.2l4.5 -3.3M457.5 403.9l3.6 -1.9M483.4 387.5l2.9 -2.4M505 364.1l2.4 -3.6M523.4 329.5l2.1 -5.7M539.6 265.1l1.8 -13.8M553.9 158.7l1.7 40.9M566.8 300.3l1.5 7.5M578.6 346.6l1.3 4.3M589.3 375.4l1.3 2.9M599.2 396.2l1.2 2.2M608.5 412.3l1.1 1.8M617.1 425.2l1 1.3M625.1 433.4l1 -0.1M632.7 402.5l0.9 10.7M639.9 238.4l0.8 1.3M646.7 422.4l0.8 -7.2M661.5 480.5l0.7 -25.2M671.4 474.3l0.7 -0.9M676.8 462.1l0.6 -2.3M681.9 447.4l0.6 -14.6M686.8 392.5l0.6 -8.4M691.6 247l0.6 -55.6M696.2 359.3l0.5 11.5M700.6 423.5l0.6 5.4M704.9 459.2l0.5 3.7M711.6 484.4l0.5 -12.1M721.7 452l0.4 32.4M728.8 412.5l0.5 -92.5M733.6 402l0.4 10.5M747.9 484.4l0.4 -21.6M752.7 465.9l0.4 -4.7M755.6 418.9l0.4 -15.3M758.4 202.6l0.4 12.2M761.2 409l0.3 22.2M763.9 465.7l0.3 3.3M773.5 465.1l0.3 -2.8M779.5 421.3l0.3 62M782.2 317.2l0.2 49.7M784.5 414.8l0.2 -5.9M794.6 469.5l0.2 -15.8M798.2 463.2l0.2 -5.5M800.2 401.7l0.3 -13M802.2 263l0.3 55.7M804.2 404.8l0.2 4.4M806.1 452.1l0.2 -26.5M814.9 438.2l0.3 7.4M818 476.4l0.2 -18.3M819.8 442.1l0.2 22.4M823.2 448.3l0.2 36.1M830.5 435.8l0.2 -0.4M833.7 454.5l0.2 -34.4M835.6 484.4l0.2 -24.4M839.6 474.5l0.1 9.9M844.6 443.5l0.2 28.5M847.3 438.9l0.2 -30.8M848.7 468l0.2 16.4M851.1 444.6l0.1 23.8M857.2 445.7l0.2 31.8M858.8 414.7l0.2 9.8M860.1 242.5l0.1 -1M861.3 421.2l0.2 0.1M862.7 483.8l0.2 -14.3M865.8 474.7l0.1 -3.2M868.6 439.2l0.2 10.4M870.8 455l0.2 -25.8M872 464.4l0.1 16.8M874.1 450l0.2 34.4M878.1 470.2l0.1 14.2M880.9 482.6l0.1 -14.4M882 391.7l0.1 35.5M883.2 468.7l0.1 15.7M887.7 465.5l0.1 4M890.2 443.3l0.2 41.1M891.6 443.8l0.1 25.5M893.7 475.3l0.1 9.1M898 438.6l0.1 16.2M899 422.2l0.1 2.6M899.9 316.7l0.1 -52.5M900.8 383.7l0.1 13.1M901.7 453.1l0.1 5.6M903.4 471.5l0.1 12.9M907.5 431.2l0.2 47.8M908.7 435.7l0.2 30.7M910.6 466.4l0.1 18M915.6 431.9l0.1 -11.7M916.4 243l0.1 91M917.2 429.3l0.1 35.3M921.9 461l0.1 23.4M923.8 399.5l0.1 78M929.1 477.6l0.1 -5.5M929.8 423.1l0.1 -0.9M930.5 260.8l0.1 -34.1M931.3 401.6l0.1 10.9M932 463.3l0.1 5M936.4 447.1l0.1 4.5M937.4 374.6l0.1 55M942.4 480.7l0.1 -6.1M943.1 413.6l0.1 -15M943.7 331.8l0.1 32.7M944.4 440.1l0.1 24.3M948.1 457.8l0.1 26.6M949.6 342.9l0.1 100.2M953.1 484.4v-9.6M954.5 442.5l0.1 41.9M955.1 335.4l0.1 -62.5M955.7 410.6l0.1 12.5M956.6 484.4v-17.7M959.5 468.9l0.1 15.5M960.6 414.3l0.1 -49.2M961.3 484.4l0.1 -39.2M964.7 481.2v-20.2M965.6 444l0.1 -12.7M966.1 287.8l0.1 66.1M966.7 428.7l0.1 34.5M970.6 475.2v9.2M971.7 467.6v-29.1M974.8 456.3l0.1 28.1M975.8 437.3v-32.1M976.3 469.6l0.1 14.8M979.5 471.7l0.1 12.7M980.5 412.5l0.1 -53M981.1 483.3l0.1 -44.8M984.1 453.1v11.2M984.9 430.5l0.1 -19.5M985.4 403.1l0.1 21.3M986.3 462.8l0.1 11M989.5 346l0.1 -14.1M990.2 446.5v37.9M993.2 464l0.1 -8M993.7 370v-81.9M994.1 453.7l0.1 11.4M996.9 470.3l0.1 14.1M997.8 372.5l0.1 -33.6M998.4 449.3l0.1 32.2M1001.4 443.5v-13.4M1001.8 313.4v-47.5M1002.2 433.3l0.1 10.9M1004.8 458.7v8M1005.6 443l0.1 -70.8M1006.2 450.5l0.1 33.9M1009 453.9v-4.5M1009.4 386.6v-105.9M1009.8 474.5v9.3M1012.1 484.4l0.1 -20M1013 427.6l0.1 -29.6M1013.6 458.5l0.1 25.9M1016.2 433.6v47.4M1016.6 311.5v-42.1M1016.9 438.7l0.1 12.9M1019.2 457.2l0.1 11M1020.1 370.5v28.7M1020.9 454.2v7M1023.1 471.4v13M1023.5 410l0.1 35.2M1024.2 453.1l0.1 -0.7M1026.3 438.2l0.1 46.2M1027 480.3l0.1 -40.8M1029 471.4l0.1 -10.6M1029.6 442.9l0.1 -16.1M1030 381.9v27.5M1030.3 466.4l0.1 18M1032.6 435.9v3.8M1033.1 443.4v30.3M1035.2 484.4v-26.8M1035.9 460.4v-24.4M1036.2 465v17.3M1038.2 484.4v-26M1038.9 452.4v-83.9M1039.4 438.7v45.7M1041.5 424.5l0.1 15.7M1041.9 397l0.1 44.5M1042.6 473.1v-14.5M1044.6 478.9v-27.4M1045 484.4v-29.7M1046.7 484.4v-10.5M1047.3 472.5l0.1 -25.2M1047.7 484.4l0.1 -31.1M1049.5 468.1v0.6M1050.2 354.3v16.3M1050.9 465.1v19.3M1052.6 484.4l0.1 -12.1M1052.9 376.8l0.1 42M1053.4 484.4l0.1 -12.1M1055.1 444.7v-27M1055.5 413.3v50M1057.3 484.4l0.1 -20.9M1057.9 458v-19M1058.1 428.3l0.1 21.6M1058.6 463.5l0.1 6.3M1060.5 484.4v-88.9M1061.1 484.4v-24.1M1062.7 431.3v24.1M1063 302.1v10.8M1063.3 422.7v2.4M1064.8 446.1v23.4M1065.2 445l0.1 -17.8M1065.5 430v17.8M1066 450.4v18.8M1067.5 480.4l0.1 -11.5M1067.8 339v58.2M1068.1 439.5v44.9M1069.7 484.4l0.1 -42M1070 393.7v-0.7M1070.2 396l0.1 5.9M1070.7 465.4v19M1072.2 484.4v-9.6M1072.5 445.8v24.5M1072.9 457.3l0.1 27.1M1074.2 456v-17.8M1074.4 385.7l0.1 -0.5M1074.7 384.7v0.3M1074.9 408.3l0.1 17.8M1076.3 439.5v17.5M1076.7 444.8v-27.6M1076.9 462.1l0.1 16.1M1078.4 484.4v-27.7M1078.6 378.7l0.1 -4M1078.9 371.4v-0.3M1079.1 371.5v0.3M1079.3 385.8l0.1 17.8M1080.5 484.4l0.1 -21.3M1081.1 470.1v-118.9M1081.4 443.2v41.2M1082.7 416.9v-17.8M1082.9 369.4v-0.3M1083.1 367.6l0.1 -0.1M1083.4 368.1v0.2M1083.6 370.9v0.5M1084.7 484.4l0.1 -9.2M1085.2 409.2l0.1 -40.8M1085.6 458.6v25.8M1086.7 396.3l0.1 -17.8M1087 373.5v-0.3M1087.2 371.9v-0.1M1087.4 371.8v0M1087.6 373.1v0.3M1087.8 375.9l0.1 12.6M1088.8 455l0.1 29.4M1089.3 382.5l0.1 101.9M1090.7 484.4v-12.7M1090.9 376.1v-0.5M1091.1 373.2v-0.2M1091.3 372.6v0.1M1091.5 374.3l0.1 0.3M1091.7 411.9l0.1 17.8M1092.9 484.4v-13.1M1093.2 343v3.1M1093.5 457.8v26.6M1094.6 437.7l0.1 -17.8M1094.9 381.6v-0.3M1095.1 379.7v-0.1M1095.3 380.1v0.2M1095.5 382.8v0.5M1096.5 484.4v-17.2M1097 425.6v-79.7M1097.2 444.1l0.1 12.1M1098.3 440v-17.8M1098.5 393.7v-0.3M1098.7 391.8v-0.1M1098.9 391.4v0.1M1099.1 392.5v0.3M1099.3 395.1v0.4M1100.2 474.2v-9.4M1100.6 454.5v-30.4M1100.9 482.5v-41.5M1102 445v-16.3M1102.2 426v-0.3M1102.4 424.5v-0.1M1102.6 424.5v0.2M1102.8 426.3v0.3M1103 460.6v17.8M1104.2 474.8v-25.4M1104.4 484.4l0.1 -16.6M1105.6 452.9v1.2M1105.8 418.7v-0.3M1106 416.7v-0.1M1106.1 417l0.1 0.2M1106.3 419.6l0.1 0.5M1107.3 456.8v-6.9M1107.7 430.7v-66M1108 439v-0.7M1109.1 406.1v-13.8M1109.3 389.4v-0.3M1109.4 388l0.1 0M1109.6 388.6v0.3M1109.8 391.3v0.5M1110.7 459l0.1 12.2M1111.1 408.8v-57.5M1111.4 439.2v18.2M1112.4 427.5v-17.8M1112.6 383.6v-0.4M1112.8 381.8v-0.1M1112.9 382l0.1 0.2M1113.1 384.4v0.4M1113.3 465.2v17.8M1114.2 432.1l0.1 -13.8M1114.5 439.8v39.3M1115.6 484.4v-15.3M1115.8 381.2v-0.4M1115.9 378.6v-0.2M1116.1 377.8v0M1116.3 378.8v0.3M1116.4 381.8l0.1 2M1116.7 476.1v8.3M1117.7 440.6v-50.5M1118.1 484.4v-21.9M1118.9 399.2v-16.5M1119 380l0.1 -0.3M1119.2 378.4v0M1119.4 378.7v0.1M1119.5 380.7l0.1 0.4M1119.7 439.8v17.8M1120.6 438.3l0.1 25.5M1121 451.5l0.1 32.9M1122 411.3l0.1 -17.7M1122.2 387.6v-0.3M1122.4 380v6.2M1122.5 387.4l0.1 0.4M1122.7 400v17.7M1123.7 470.6v-28.9M1123.9 405.2l0.1 52.4M1125 454.1l0.1 -17.8M1125.2 393.7v-0.4M1125.4 391.7v-0.1M1125.5 392.1v0.2M1125.7 394.8v0.5M1126.5 442.8v1.7M1126.9 354.1v17.5M1127.3 443.9v37.5M1128.1 414.5v-10.3M1128.2 401.1l0.1 -0.3M1128.4 400.1v0M1128.6 401.6v0.4M1128.7 441.5v17.8M1129.5 474v10.4M1129.8 394.1v-39.7M1130 438.8v28.1M1130.9 449v-17.8M1131.1 425.8v-0.3M1131.2 424.3v-0.1M1131.4 424.6v0.1M1131.5 426.7l0.1 0.4M1132.2 475.8v8.6M1132.6 484.4l0.1 -22.6M1132.9 429.4v10.2M1133.8 439.3v-9M1133.9 427.7v-0.3M1134.1 426.3v-0.1M1134.2 426.4v0.2M1134.4 428.2v0.4M1134.5 469.2v15.2M1135.3 460.1v-22.5M1135.5 359v49M1135.8 463.9l0.1 -15.7M1136.6 438.9v-17.8M1136.7 407.1v-0.3M1136.9 405.5v0M1137 406.2v0.2M1137.2 409.1v0.5M1137.9 468v16.4M1138.3 358.9v23.9M1138.6 446.3v3.3M1139.3 393.8v-0.4M1139.4 391l0.1 -0.3M1139.6 389.9v-1.2M1139.7 390.5v0.2M1139.9 392.9v0.4M1140.6 480v-8.8M1140.9 402.3v-31.1M1141.8 484.4v-8.2M1142 387.7v-0.4M1142.1 385.1v-0.2M1142.3 384.2v0M1142.4 384.9v0.2M1142.5 387.2l0.1 0.5M1142.7 474.8v9.6M1143.6 421.9v62.5M1144.5 460.2v-17.8M1144.7 381.5v-0.4M1144.8 379.2v-0.2M1144.9 379.2l0.1 0.1M1145.1 381.5v0.4M1145.2 460.2v17.8M1146 443.4v41M1146.3 425.3v40.9M1147.1 441.4v-17.8M1147.2 385.5v-0.3M1147.3 383.5l0.1 -0.1M1147.5 383.4v0.1M1147.6 385.2v0.3M1147.8 425.1v17.8M1148.4 453.2v31.2M1148.7 409.8v61M1149 469.8v14.6M1149.6 408v-15.8M1149.7 389.4l0.1 -0.3M1149.9 387.9v-0.1M1150 388.1v0.2M1150.1 390.1l0.1 0.4M1150.3 446.4v17.8M1151 471.7v12.7M1151.3 463.9v-37.6M1152 476.1v-17.8M1152.1 405.6l0.1 -0.4M1152.3 403.4v-0.2M1152.4 402.9v0.1M1152.5 404.1l0.1 0.2M1152.7 406.9v2.3M1153.4 451.3l0.1 5.5M1153.6 454.4l0.1 29.6M1154.3 467.2l0.1 17.2M1154.6 428.6v-0.5M1154.7 425.2v-0.2M1154.8 424.5v0.2M1155 426.7v0.5M1155.1 442.1v3.5M1155.8 422.7v-10.1M1156.1 484.4v-10.4M1156.4 484.4v-13.4M1156.9 449.7v-0.3M1157 447.6l0.1 -0.2M1157.2 446.9v0.1M1157.3 431.4v-2.7M1157.4 450.2v0.4M1158.2 444.6v39.8M1158.4 484.4l0.1 -38.2M1159.2 448.6v-17.7M1159.3 409.5v-0.3M1159.4 407.7v-0.1M1159.5 407.5l0.1 0.1M1159.7 409v0.3M1159.8 421.6v17.8M1160.5 456.5v-7.3M1160.8 466v18.4M1161.5 441v-17.8M1161.6 403.2v-0.3M1161.7 401.5v-0.1M1161.8 401.4v0.1M1161.9 403.1l0.1 0.3M1162.1 433.2v17.8M1162.6 468v16.4M1162.9 380.9v1.8M1163.1 484.4l0.1 -24.3M1163.7 456.9l0.1 -17.8M1163.9 397.1v-0.4M1164 395.1v0M1164.1 395.9v0.3M1164.2 399.4v15.5M1165 442v-4.5M1165.2 453.6l0.1 -25.6M1165.9 456.7v-17.8M1166 394.2v-0.3M1166.1 392.2l0.1 -0.2M1166.3 391.9v0.1M1166.4 393.4v0.4M1166.5 416.2v17.7M1167.1 484.4l0.1 -47.6M1167.4 484.4v-41.7M1168.1 484.4v-14.4M1168.2 396.1v-0.5M1168.3 393.5v-0.1M1168.4 393.4v0.1M1168.6 395.5v0.5M1168.7 466.4v17.8M1169.4 484.4v-12.2M1169.6 444.9v39.5M1170.2 416.7l0.1 -12.5M1170.4 401.5v-0.3M1170.5 400v0M1170.6 400.2v0.2M1170.7 402.1v0.4M1170.8 450.1v17.8M1171.6 407.2v-30.1M1171.8 473.5v10.9M1172.4 410.7v-0.4M1172.5 408.2v-0.2M1172.6 407.6v0.1M1172.7 408.9l0.1 0.3M1172.9 415.8v17.8M1173.4 447.4v10.7M1173.6 441.7v-61.7M1173.8 446.9v37.5M1174.4 426.2v-0.4M1174.5 423.5v-0.2M1174.6 422.3l0.1 -0.1M1174.7 422.5l0.1 0.1M1174.9 424.1v0.3M1175 445.5v17.8M1175.7 484.4v-18.2M1175.8 450.4v34M1176.5 451v-0.5M1176.6 448.3v-0.2M1176.7 447.4v0M1176.8 448.1v-3.8M1176.9 450.6v0.4M1177.5 464v20.4M1177.7 378.3v-5.9M1177.9 477.3l0.1 -27.4M1178.5 418.4v-0.4M1178.6 415.5v-0.2M1178.7 414.8v0M1178.8 416.1v0.3M1178.9 431.8l0.1 17.6M1179.6 484.4v-54.2M1179.7 468.8v15.6M1179.9 453l0.1 31.3M1180.5 412.3v-0.4M1180.6 409.8v-0.2M1180.7 404.1v4.8M1180.8 409.7v0.2M1180.9 412v0.4M1181.4 470.9v13.5M1181.7 388.5v36.3M1182.2 484.4l0.1 -12.8M1182.4 403l0.1 -0.6M1182.5 399.5l0.1 -0.2M1182.6 398.9l0.1 0.1M1182.8 401v0.5M1182.9 453.8v4.2M1183.3 484.4v-35M1183.6 425.8v-19.8M1183.8 447.1v-3.7M1184.3 425.1v-17.8M1184.4 392.7v-0.3M1184.5 391.1v0M1184.6 391.9v0.3M1184.7 395.1v2.3M1185.1 484.4v-11.2M1185.3 444.8l0.1 -27.4M1185.6 429.7v26.6M1186.2 484.4v-14M1186.3 395v-0.4M1186.4 392.5v-0.2M1186.5 392.2v0.2M1186.6 394.4v0.4M1186.7 461.9v17.8M1187.3 416.3v-16.7M1187.6 470.2v-0.9M1188.1 405.7v-3.9M1188.2 399.1v-0.3M1188.3 397.8v0M1188.4 398.5v0.2M1188.5 401.1v0.5M1188.6 472.7v11.7M1189.1 428.4v56M1189.3 434.4v30M1189.8 483.2l0.1 -17.8M1189.9 411.2l0.1 -0.4M1190 409l0.1 -0.2M1190.1 408.8l0.1 0.1M1190.2 410.7v0.4M1190.3 459.7v17.8M1191 479v-84.1M1191.2 484.4v-28.1M1191.7 438.3v-0.4M1191.8 433.9v1.8M1191.9 435v-6.4M1192 435.5v0.2M1192.1 437.5v0.3M1192.6 478.7v-10.2M1192.8 414.5v-33.1M1193 472.7v-14.4M1193.5 477.3v-17.8M1193.6 443.4v12.2M1193.7 454.5v0M1193.8 455.5v-2M1193.9 458.9v15.6M1194.2 476.2l0.1 8.2M1194.5 475.1v9.3M1194.7 403.9v14.5M1195.1 484.4v-24.2M1195.2 426.2l0.1 -0.5M1195.3 422.9l0.1 -0.2M1195.4 421.9v0M1195.5 422.9v-14.1M1195.6 426.1v12.5M1196.1 459.7v24.7M1196.3 395.1v59.6M1196.8 465.6v-5.7M1197 414.6v-0.4M1197.1 405.6v6.3M1197.2 411.1v0M1197.2 411.6l0.1 0.1M1197.3 413.5v0.4M1197.4 468.2v16.2M1197.9 438.6v1.8M1198.1 459.7v-18.1M1198.7 456.2v-5.8M1198.8 409.5v-0.4M1198.9 407.5v0M1198.9 408.2l0.1 0.2M1199 411.4v4.8M1199.4 484.4v-8.7M1199.6 455v29.4M1199.9 484.4v-12M1200.4 405.9v-0.5M1200.5 402.7v-0.3M1200.6 401.7v0.1M1200.7 403v0.3M1200.7 419.5l0.1 17.7M1201.3 461v23.4M1201.6 484.4v-17.4M1202 429.3v6.1M1202.1 412.5v-2.9M1202.2 410.5v-0.1M1202.3 410.8v0.3M1202.4 413.5v0.5M1202.5 469.4l0.1 15M1203 484.4v-49.4M1203.2 484.4v-11M1203.6 484.4v-9.4M1203.7 415v-0.4M1203.8 412.7v-0.1M1203.9 412.4v0.1M1204 414v0.3M1204.1 445.1v17.8M1204.6 433.4v7.3M1204.8 451v-12.4M1205.3 471.7v-28M1205.4 422.4v-0.3M1205.5 420.5v-0.1M1205.5 420.6v0.1M1205.6 422.6v0.4M1205.8 484.4v-14M1206.2 440.6v28.3M1206.4 441.2v6.5M1206.9 484.4v-11.1M1207 441.4v-0.3M1207 439.5v-0.1M1207.1 439.3v0.1M1207.2 440.7v0.3M1207.3 446.3v17.8M1207.8 484.4v-32.1M1207.9 437.1v47.3M1208.1 449.2v35.2M1208.5 471.2v-0.4M1208.6 468.7v-0.2M1208.7 461.9v6.1M1208.8 456.9v-17.9M1208.8 471.4l0.1 0.5M1209.4 433.8v-5.9M1209.5 448.1l0.1 -27.3M1210 478.5v-17.8M1210.1 431.8v-0.3M1210.2 430v-0.1M1210.3 429.7v0.1M1210.4 431.1v0.3M1210.4 436.5v17.8M1210.9 438.9v45.5M1211.1 448.3v31M1211.6 453.9v-17.8M1211.7 416.4v-0.3M1211.8 414.8v0M1211.9 415.5v0.2M1211.9 418.5v0.5M1212.3 476.8l0.1 -31.2M1212.5 419.1l0.1 -12.9M1212.7 453.9v2.5M1213.2 417.1v-0.4M1213.2 414.6v-0.2M1213.3 413.9v0.1M1213.4 415v0.3M1213.5 417.9v3.4M1214 484.4v-25.3M1214.1 484.4l0.1 -43.3M1214.3 484.4v-9.5M1214.7 413.7v-0.5M1214.8 410.8v-0.1M1214.8 410.4l0.1 0.1M1214.9 412.3v0.4M1215 464.4v13.5M1215.5 435v40.7M1215.7 480.7l0.1 -33M1216.2 416.2v-0.5M1216.2 413.2v-0.3M1216.3 411.2v0.9M1216.4 413.1v0.3M1216.5 416.2v5.7M1216.9 473.4l0.1 -16.8M1217.1 447.6v-1M1217.6 417.9v-0.5M1217.7 414.7v-0.2M1217.8 413.6v0M1217.9 414.5v0.3M1217.9 417.4v0.5M1218.2 477.7v-13.2M1218.4 407.6v2.4M1218.6 437.2v-17.4M1218.8 457.6v-1.5M1219.1 430.8v-0.4M1219.2 428.4v-0.2M1219.3 427.9v0.1M1219.3 429.4l0.1 0.3M1219.4 448.2v17.8M1219.9 445.2v-13.7M1220 453.1l0.1 -38.4M1220.5 454v-12M1220.6 443.4v-0.4M1220.7 441.3v-0.1M1220.7 441.5v0.1M1220.8 443.9v0.4M1221.1 484.4v-9M1221.4 484.4v-23.9M1221.5 444.5v39.9M1221.9 474v-30.7M1222.1 476.6v-0.2M1222.1 476.2v0.1M1222.3 479.5v-34.5M1222.5 468.1l0.1 8.5M1222.8 484.4v-58.4M1223 484.4v-22.2M1223.3 484.4v-47.2M1223.4 450.5v-0.5M1223.5 447.6v-0.2M1223.6 447.5v0.1M1223.6 450.2v0.5M1223.8 484.4v-21.9M1224 467.3v17.1M1224.1 418.5v59.4M1224.3 418.4v24.8M1224.7 484.4v-15M1224.8 427.9v-0.5M1224.9 425.2v-0.2M1224.9 424.9l0.1 0.2M1225 427.2v0.4M1225.1 432.4v52M1225.4 484.4v-37.9M1225.6 484.4v-49.2M1225.7 469.4v15M1226 469.8v3.3M1226.2 422v-0.4M1226.2 419.4v-0.2M1226.3 418.6v0.1M1226.4 419.8v0.2M1226.4 422.8l0.1 6.5M1226.7 463.8v20.6M1226.9 436.1v48.3M1227.1 447.6v36.8M1227.4 484.4v-8M1227.5 430.1v-0.4M1227.6 427.6v-0.2M1227.7 426.3v-6.9M1227.7 427.3v0.2M1227.8 429.5v0.4M1228.1 462.1v14.3M1228.2 409.6l0.1 -5.2M1228.5 449.9v0.5M1228.8 477.1v-17.8M1228.9 423.8v-0.3M1229 421.9v-0.2M1229 421.4v0.1M1229.1 408.3v14.5M1229.2 425.2v0.5M1229.5 464.5v-11.6M1229.7 447v37.4M1229.9 459.7v24.7M1230.2 439.3v15.3M1230.3 421v-13.7M1230.3 419v-0.1"/>
<path d="M202.9 446.2l23.5 -0.6M326.1 438.4l9.6 -0.8M388 429l6 -1.5M429.6 415.9l4.4 -1.8M461.1 402l3.4 -1.9M486.3 385.1l2.8 -2.5M507.4 360.5l2.4 -3.8M525.5 323.8l2.1 -6.1M541.4 251.3l1.9 -16.9M555.6 199.6l1.7 25.5M568.3 307.8l1.6 6.9M579.9 350.9l1.4 4M590.6 378.3l1.3 2.8M600.4 398.4l1.2 2.2M609.6 414.1l1.1 1.6M618.1 426.5l1 1.2M626.1 433.3l1 -0.2M633.6 413.2l0.9 -9.7M640.7 239.7l0.9 44.1M647.5 415.2l0.8 -16.2M662.2 455.3l0.8 12.9M672.1 473.4l0.7 -1.1M677.4 459.8l0.7 -2.5M682.5 432.8l0.6 -4M687.4 384.1l0.6 -9.5M692.2 191.4l0.6 -6.6M696.7 370.8l0.6 10.1M701.2 428.9l0.5 5.1M705.4 462.9l0.5 3.6M712.1 472.3l0.5 3.6M724.8 484.4l0.5 -40M729.3 320l0.4 -14.8M734 412.5l0.4 68.2M748.3 462.8l0.4 11.2M753.1 461.2l0.3 -5.2M756 403.6l0.3 -12M758.8 214.8l0.3 75.8M761.5 431.2l0.3 -15M764.2 469l0.3 -17.7M773.8 462.3l0.3 22.1M780.1 482.5l0.3 -11.7M782.4 366.9l0.3 45.4M784.7 408.9l0.3 33.3M794.8 453.7l0.3 30.7M798.4 457.7l0.3 -6M800.5 388.7l0.2 -15.5M802.5 318.7l0.2 29.6M804.4 409.2l0.3 32.8M806.3 425.6l0.3 13.4M815.2 445.6l0.2 38.8M818.2 458.1l0.3 -24.9M820 464.5l0.2 17.2M824.6 484.4l0.3 -13.3M830.7 435.4l0.2 40.6M833.9 420.1l0.2 -97.3M835.8 460l0.2 -34.4M841 484.4l0.2 -11.8M844.8 472l0.2 12.4M847.5 408.1l0.1 -61.7M849 484.4l0.2 -22M851.2 468.4l0.2 16M857.7 479l0.1 -5.3M859 424.5l0.1 -12.6M860.2 241.5l0.2 39.6M861.5 421.3l0.1 -17.5M862.9 469.5l0.1 -20.5M865.9 471.5l0.2 12.9M868.8 449.6l0.1 34.8M871 429.2l0.1 -41.2M872.4 484.4l0.2 -61.6M875.1 484.4l0.2 -12.3M879 484.4l0.1 -35.1M881 468.2l0.2 -17.9M882.1 427.2l0.1 23.7M884 484.4l0.1 -34.2M887.8 469.5l0.2 14.9M890.7 477.9l0.2 -21.9M891.7 469.3l0.2 15.1M894.6 481.8l0.1 -17.5M898.1 454.8l0.1 13.3M899.1 424.8l0.1 -18M900 264.2l0.1 -38.4M900.9 396.8l0.1 11.8M901.8 458.7l0.2 5.2M906.2 484.4l0.1 -15.6M908 484.4l0.1 -10.1M908.9 466.4l0.1 18M911.3 484.4l0.1 -8M915.7 420.2l0.1 -14.6M916.5 334l0.1 34.1M917.3 464.6l0.1 2M922.6 484.4l0.1 -26.1M924.4 484.4l0.1 -30.8M929.2 472.1v-5M929.9 422.2l0.1 -12.3M930.6 226.7l0.1 4.5M931.4 412.5v10.5M932.1 468.3l0.1 4.6M936.5 451.6l0.1 32.8M937.5 429.6l0.1 29.5M942.5 474.6l0.1 -6.9M943.2 398.6l0.1 -18.6M943.8 364.5l0.1 22.4M944.5 464.4l0.1 6.6M948.7 484.4l0.1 -22.8M949.7 443.1l0.1 36.9M953.1 474.8l0.1 7.3M954.6 484.4l0.1 -53.1M955.2 272.9l0.1 -30.2M955.8 423.1l0.1 8.9M956.6 466.7l0.1 2.5M960 484.4v-32.2M960.7 365.1l0.1 -42.7M961.4 445.2l0.1 -8.8M964.7 461l0.1 6M965.7 431.3v-15.2M966.2 353.9l0.1 31.5M966.8 463.2v19.6M970.9 484.4l0.1 -17.7M971.7 438.5l0.1 8.5M975.3 484.4v-35.3M975.8 405.2l0.1 -70.3M976.5 484.4v-30.6M980 484.4v-30.2M980.6 359.5v-37.9M981.2 438.5l0.1 -9.1M984.1 464.3l0.1 20.1M985 411v-26.4M985.5 424.4v16.5M986.4 473.8v10.6M989.6 331.9v21.8M990.6 484.4v-14.1M993.3 456v11M993.7 288.1l0.1 -23.1M994.2 465.1v-7.5M997.3 484.4v-11.1M997.9 338.9v4.9M998.9 484.4v-11.5M1001.4 430.1l0.1 20.3M1001.8 265.9l0.1 -3.1M1002.3 444.2v17.4M1004.8 466.7l0.1 17.7M1005.7 372.2v-11.2M1006.6 482.9v-34.4M1009 449.4l0.1 16.4M1009.4 280.7l0.1 -19.8M1009.8 483.8l0.1 -19.8M1012.2 464.4v-7.7M1013.1 398v7.6M1013.9 484.4v-22M1016.2 481l0.1 -33.2M1016.6 269.4v-0.3M1017 451.6v-25.2M1019.3 468.2v16.2M1020.1 399.2l0.1 65.1M1020.9 461.2l0.1 23.2M1023.2 484.4v-17.1M1023.6 445.2v23.5M1024.3 452.4v32M1026.5 481.7l0.1 -32.3M1027.1 439.5v0.9M1029.1 460.8v19.1M1029.7 426.8v-20.7M1030 409.4l0.1 19.9M1030.6 478.4l0.1 -18.4M1032.6 439.7l0.1 44.7M1033.1 473.7l0.1 10.7M1035.2 457.6l0.1 5.6M1035.9 436v-37.9M1036.3 484.4v-15.3M1038.2 458.4l0.1 -2.1M1038.9 368.5l0.1 -22.6M1039.7 478.2v-6.4M1041.6 440.2v44.2M1042 441.5v26.8M1042.6 458.6v21.7M1044.6 451.5v-46.9M1045 454.7l0.1 -12.3M1046.7 473.9l0.1 -28.5M1047.4 447.3v-39.8M1047.8 453.3v-20.9M1049.5 468.7l0.1 15.7M1050.2 370.6l0.1 110.7M1052.1 484.4l0.1 -10.8M1052.7 472.3v-16.7M1053 418.8v25.9M1053.5 472.3v-10.8M1055.1 417.7l0.1 9.7M1055.5 463.3l0.1 21.1M1057.4 463.5v12.7M1057.9 439v-25.9M1058.2 449.9v16.8M1058.7 469.8v14.6M1060.5 395.5v-16.3M1061.1 460.3l0.1 -0.6M1062.7 455.4v29M1063 312.9v69.4M1063.3 425.1v40.6M1064.8 469.5l0.1 14.9M1065.3 427.2v-17.2M1065.5 447.8l0.1 17.8M1066 469.2l0.1 15.2M1067.6 468.9v-15.2M1067.8 397.2l0.1 30.1M1068.3 484.4v-16.7M1069.8 442.4v-3.5M1070 393l0.1 -0.3M1070.3 401.9v17.8M1071.7 484.4l0.1 -37.7M1072.2 474.8l0.1 -22.8M1072.5 470.3v14.1M1073.2 484.4v-9.1M1074.2 438.2l0.1 -17.8M1074.5 385.2v-0.3M1074.7 385v0.4M1075 426.1v17.8M1076.3 457v27.4M1076.7 417.2l0.1 -47.3M1077 484.4l0.1 -31.3M1078.4 456.7l0.1 8.9M1078.7 374.7v-0.7M1078.9 371.1v-0.1M1079.1 371.8l0.1 0.3M1079.4 403.6v17.8M1080.6 463.1v0.8M1081.1 351.2v-19M1081.6 484.4v-9.4M1082.7 399.1l0.1 -17.8M1082.9 369.1l0.1 -0.4M1083.2 367.5v0M1083.4 368.3v0.3M1083.6 371.4v0.6M1084.8 475.2v9.2M1085.3 368.4v0.3M1085.8 484.4v-16.7M1086.8 378.5v-2.8M1087 373.2v-0.2M1087.2 371.8v-0.1M1087.4 371.8v0.2M1087.6 373.4l0.1 0.3M1087.9 388.5v17.8M1089 484.4v-44.3M1089.5 484.4v-18.4M1090.7 471.7v-17.8M1090.9 375.6l0.1 -0.4M1091.1 373l0.1 -0.1M1091.3 372.7l0.1 0.1M1091.6 374.6v0.4M1091.8 429.7v17.8M1092.9 471.3l0.1 -24.5M1093.2 346.1l0.1 47.4M1093.6 484.4l0.1 -17.4M1094.7 419.9v-17.8M1094.9 381.3v-0.4M1095.1 379.6v0M1095.3 380.3v0.3M1095.5 383.3v0.6M1096.5 467.2l0.1 6.4M1097 345.9v-13M1097.3 456.2v28.2M1098.3 422.2l0.1 -17.8M1098.5 393.4l0.1 -0.3M1098.7 391.7l0.1 -0.1M1098.9 391.5l0.1 0.1M1099.1 392.8l0.1 0.2M1099.3 395.5l0.1 5.4M1100.2 464.8l0.1 19.6M1100.6 424.1l0.1 -59.5M1100.9 441v-5M1102 428.7l0.1 -0.5M1102.2 425.7l0.1 -0.2M1102.4 424.4l0.1 -0.1M1102.6 424.7l0.1 0.1M1102.8 426.6v0.4M1103.8 484.4v-20.4M1104.2 449.4v-40.4M1104.5 467.8v-21.6M1105.6 454.1v-11.2M1105.8 418.4v-0.4M1106 416.6v0M1106.2 417.2v0.2M1106.4 420.1v0.5M1107.3 449.9l0.1 31.4M1107.7 364.7l0.1 -28.3M1108 438.3v39.2M1109.1 392.3v-0.5M1109.3 389.1v-0.2M1109.5 388v0M1109.6 388.9l0.1 0.2M1109.8 391.8v0.5M1110.8 471.2v13.2M1111.1 351.3l0.1 -7.3M1111.4 457.4v27M1112.4 409.7v-17.8M1112.6 383.2v-0.3M1112.8 381.7v0M1113 382.2v0.2M1113.1 384.8l0.1 0.5M1113.4 482.5v-9.7M1114.3 418.3v22.2M1114.6 476.7l0.1 -37.8M1115.6 469.1v-17.7M1115.8 380.8v-0.4M1115.9 378.4l0.1 -0.2M1116.1 377.8v0.1M1116.3 379.1v0.3M1116.5 383.8v17.8M1117.3 484.4v-19.7M1117.7 390.1v-4.5M1118.1 462.5v11M1118.9 382.7v-0.4M1119.1 379.7v-0.3M1119.2 378.4l0.1 -0.1M1119.4 378.8v0.2M1119.6 381.1v0.4M1119.7 457.6l0.1 17.8M1120.7 463.8v20.6M1121.2 484.4v-18.1M1122.1 393.6v-3.3M1122.2 387.3v-0.2M1122.4 386.2v0.2M1122.6 387.8v0.3M1122.7 417.7v17.8M1123.7 441.7v7.6M1124 457.6v26.8M1125.1 436.3v-17.8M1125.2 393.3v-0.3M1125.4 391.6v0M1125.5 392.3l0.1 0.2M1125.7 395.3v0.5M1126.5 444.5l0.1 39.9M1126.9 371.6v112.8M1127.4 484.4l0.1 -11.4M1128.1 404.2v-0.5M1128.3 400.8v-0.2M1128.4 400.1v0.1M1128.6 402v0.4M1128.7 459.3l0.1 -3.7M1129.6 484.4v-40.7M1129.8 354.4v1.1M1130 466.9l0.1 17.5M1130.9 431.2l0.1 -3M1131.1 425.5v-0.2M1131.2 424.2l0.1 0M1131.4 424.7v0.2M1131.6 427.1v0.4M1132.3 484.4v-22.7M1132.7 461.8v-96.1M1132.9 439.6v44.8M1133.8 430.3v-0.4M1133.9 427.4v-11M1134.1 426.2v-0.1M1134.2 426.6v0.1M1134.4 428.6v0.3M1134.6 484.4v-14.2M1135.3 437.6l0.1 14M1135.5 408l0.1 45.8M1135.9 448.2v19.8M1136.6 421.1v-11.4M1136.7 406.8v-0.3M1136.9 405.5v-3.3M1137 406.4v0.3M1137.2 409.6v7.3M1138.1 481v-45.8M1138.3 382.8v78.4M1138.6 449.6v34.8M1139.3 393.4v-0.5M1139.5 390.7v-0.2M1139.6 388.7v1.2M1139.7 390.7l0.1 0.2M1139.9 393.3v0.4M1140.6 471.2v13.2M1140.9 371.2l0.1 6.5M1141.8 476.2l0.1 -17.8M1142 387.3v-0.4M1142.1 384.9v-0.2M1142.3 384.2v0M1142.4 385.1v0.2M1142.6 387.7v0.4M1143.4 481.6v-40.9M1143.7 484.4v-13.6M1144.5 442.4l0.1 -17.8M1144.7 381.1v-0.4M1144.8 379v0M1145 379.3v0.2M1145.1 381.9v0.5M1145.8 484.4v-36.8M1146.1 484.4v-46.8M1146.3 466.2l0.1 18.2M1147.1 423.6v-17.7M1147.2 385.2v-0.4M1147.4 383.4v-0.1M1147.5 383.5v0.2M1147.6 385.5l0.1 0.4M1147.8 442.9v17.7M1148.5 478.4v-36M1148.7 470.8v13.6M1149.1 484.4v-14.2M1149.6 392.2v-0.5M1149.8 389.1v-0.2M1149.9 387.8v0M1150 388.3v0.2M1150.2 390.5v0.4M1150.3 464.2v17.8M1151.1 484.4v-15.9M1151.3 426.3v2.5M1152 458.3l0.1 -17.8M1152.2 405.2v-0.3M1152.3 403.2v-0.1M1152.4 403v0M1152.6 404.3v0.3M1152.7 409.2v17.8M1153.5 456.8v27.6M1153.7 484.4v-19.8M1154.5 484.4v-12.5M1154.6 428.1v-0.6M1154.7 425v-0.2M1154.8 424.7l0.1 0.1M1155 427.2v0.5M1155.1 445.6v38.8M1155.8 412.6l0.1 26.4M1156.1 474v-33.4M1156.4 471v13.4M1156.9 449.4l0.1 -0.4M1157.1 447.4v-0.1M1157.2 447v0M1157.3 428.7v19.6M1157.4 450.6l0.1 0.5M1158.3 484.4v-25.6M1158.5 446.2v-11.2M1159.2 430.9v-17.8M1159.3 409.2v-0.3M1159.4 407.6v-0.1M1159.6 407.6v0.2M1159.7 409.3v0.3M1159.8 439.4v17.8M1160.5 449.2v30.1M1160.9 484.4v-14.7M1161.5 423.2v-17.5M1161.6 402.9v-0.3M1161.7 401.4v-0.1M1161.8 401.5l0.1 0.2M1162 403.4v0.4M1162.1 451v17.7M1162.7 484.4v-41.5M1162.9 382.7v44.6M1163.2 460.1v-18.1M1163.8 439.1v-17.7M1163.9 396.7v-0.4M1164 395.1v-3.6M1164.1 396.2v0.3M1164.2 414.9l0.1 17.8M1165 437.5v34M1165.3 428v10.9M1165.9 438.9v-17.8M1166 393.9l0.1 -0.4M1166.2 392v-0.1M1166.3 392v0.1M1166.4 393.8v0.3M1166.5 433.9v17.8M1167.2 436.8v-21.4M1167.4 442.7v-5.1M1168.1 470v-17.8M1168.2 395.6v-0.4M1168.3 393.4v-0.1M1168.4 393.5l0.1 0.2M1168.6 396v0.5M1169.2 484.4v-16.7M1169.4 472.2v-72.4M1169.7 484.4v-18.7M1170.3 404.2v-0.5M1170.4 401.2v-0.2M1170.5 400v-0.1M1170.6 400.4v0.1M1170.7 402.5v0.3M1170.8 467.9v16.5M1171.6 377.1v7.2M1172.3 484.4v-14.5M1172.4 410.3v-0.4M1172.5 408l0.1 -0.1M1172.6 407.7l0.1 0.1M1172.8 409.2v0.3M1172.9 433.6v17.8M1173.4 458.1v26.3M1173.6 380l0.1 -8.7M1173.9 484.4v-18.2M1174.4 425.8v-0.4M1174.5 423.3l0.1 -0.2M1174.7 422.2v0M1174.8 422.6v0.1M1174.9 424.4v0.3M1175 463.3v17.8M1175.7 466.2v-70.2M1175.9 484.4v-8.5M1176.5 450.5v-0.4M1176.6 448.1v-0.2M1176.7 447.4v0M1176.8 444.3v-7.6M1176.9 451v0.5M1177.6 484.4v-24.4M1177.7 372.4v32.1M1178 449.9v9.5M1178.5 418v-0.5M1178.6 415.3v-0.1M1178.7 414.8l0.1 0.1M1178.8 416.4l0.1 0.4M1179 449.4v1.5M1179.6 430.2v-12.3M1179.8 484.4v-24.1M1180.4 484.4v-12.2M1180.5 411.9v-0.4M1180.6 409.6v-0.1M1180.7 408.9v0.1M1180.8 409.9v0.2M1180.9 412.4v0.4M1181.5 484.4v-13M1181.7 424.8v54.5M1182.3 471.6v12.8M1182.5 402.4v-0.6M1182.6 399.3v-0.2M1182.7 399v0.1M1182.8 401.5v0.5M1182.9 458v26.4M1183.3 449.4v0.3M1183.6 406v15.9M1183.8 443.4v35.3M1184.3 407.3v-11.9M1184.4 392.4v-0.3M1184.5 391.1v0M1184.6 392.2v0.3M1184.7 397.4v17.7M1185.1 473.2v-6M1185.4 417.4v9.3M1185.6 456.3v28.1M1186.2 470.4v-17.8M1186.3 394.6v-0.4M1186.4 392.3v-0.1M1186.5 392.4v0.2M1186.6 394.8v0.5M1187.1 484.4v-11.7M1187.3 399.6l0.1 19M1187.6 469.3v15.1M1188.1 401.8v-0.5M1188.2 398.8v-0.2M1188.3 397.8v0M1188.4 398.7v0.3M1188.5 401.6v0.5M1188.9 484.4v-24.3M1189.2 480.7v-53.6M1189.3 464.4v20M1189.9 465.4v-17.8M1190 410.8v-0.4M1190.1 408.8v-0.1M1190.2 408.9v0.2M1190.2 411.1l0.1 0.4M1190.8 484.4v-28.4M1191 394.9v-13.7M1191.2 456.3v1.8M1191.7 437.9v-0.3M1191.8 435.7v-0.1M1191.9 428.6v6.4M1192 435.7v0.2M1192.1 437.8v0.4M1192.6 468.5v15.9M1192.8 381.4v5.2M1193 458.3v21.6M1193.5 459.5v-1.1M1193.6 455.6v-0.3M1193.7 454.5v0M1193.8 453.5v-12.6M1193.9 474.5v3.4M1194.3 484.4v-12M1194.5 484.4v-22.7M1194.7 418.4v66M1195.1 460.2v10.4M1195.3 425.7v-0.5M1195.4 422.7v-0.2M1195.4 421.9l0.1 0M1195.5 408.8l0.1 6.2M1195.6 438.6v8.8M1196.2 484.4v-35.2M1196.3 454.7v29.7M1196.8 459.9l0.1 24.5M1197 414.2v-0.3M1197.1 411.9v-0.2M1197.2 411.1v0M1197.3 411.7v0.2M1197.3 413.9l0.1 0.3M1197.5 484.4v-10.4M1197.9 440.4v44M1198.1 441.6v17.4M1198.7 450.4v-17.8M1198.8 409.1v-0.4M1198.9 407.5v-3.9M1199 408.4v0.4M1199 416.2l0.1 17.8M1199.4 475.7v5.1M1199.7 484.4v-44.1M1199.9 472.4v-8.5M1200.4 405.4v-0.5M1200.5 402.4v-0.2M1200.6 401.8v0M1200.7 403.3v0.4M1200.8 437.2v17.8M1201.4 484.4v-23.4M1201.6 467v10.2M1202 435.4v3.5M1202.1 409.6v-3.5M1202.2 410.4v0M1202.3 411.1v0.2M1202.4 414v0.6M1202.8 484.4v-19M1203 435v-22.2M1203.2 473.4l0.1 -5.8M1203.6 475l0.1 -20.2M1203.7 414.6v-0.4M1203.8 412.6v-0.2M1203.9 412.5v0.1M1204 414.3v0.4M1204.1 462.9v17.8M1204.6 440.7v43.7M1204.8 438.6v24.1M1205.3 443.7v-4.5M1205.4 422.1v-0.3M1205.5 420.4v-0.1M1205.5 420.7l0.1 0.2M1205.6 423v0.4M1205.8 470.4v-4.7M1206.2 468.9v15.5M1206.4 447.7v36.7M1206.9 473.3v-17.8M1207 441.1v-0.3M1207 439.4l0.1 -0.1M1207.1 439.4v0.1M1207.2 441v0.3M1207.3 464.1v17.8M1207.8 452.3v-26.5M1208 484.4v-39.1M1208.2 484.4v-23.9M1208.5 470.8v-0.4M1208.6 468.5v-0.1M1208.7 468v0M1208.8 439v17.9M1208.9 471.9v-10.8M1209.4 427.9v32.1M1209.6 420.8v9.4M1210 460.7v-17.8M1210.1 431.5v-0.3M1210.2 429.9v-0.1M1210.3 429.8v0.1M1210.4 431.4v0.3M1210.4 454.3l0.1 17.8M1211 484.4v-48.5M1211.2 484.4v-13.7M1211.6 436.1v-16.9M1211.7 416.1v-0.3M1211.8 414.8v0M1211.9 415.7v0.3M1211.9 419l0.1 12.1M1212.4 445.6v6.4M1212.6 406.2v23M1212.7 456.4l0.1 28M1213.2 416.7v-0.4M1213.2 414.4l0.1 -0.1M1213.3 414v0M1213.4 415.3v0.3M1213.5 421.3v17.8M1214 459.1v-19.9M1214.2 441.1v-3.7M1214.3 474.9l0.1 9.5M1214.7 413.2v-0.5M1214.8 410.7v-0.2M1214.9 410.5v0.1M1214.9 412.7v0.4M1215.1 484.4v-7.9M1215.5 475.7v8.7M1215.8 447.7v5.2M1216.2 415.7v-0.4M1216.2 412.9l0.1 -0.2M1216.3 412.1v0.1M1216.4 413.4v0.3M1216.5 421.9v17.8M1217 456.6v19M1217.1 446.6l0.1 37.8M1217.6 417.4v-0.5M1217.7 414.5v-0.2M1217.8 413.6v0.1M1217.9 414.8v0.2M1217.9 417.9l0.1 11.6M1218.2 464.5l0.1 19.9M1218.4 410v45.8M1218.6 419.8v18.2M1218.8 456.1v28.3M1219.1 430.4v-0.4M1219.2 428.2v-0.1M1219.3 428v0.1M1219.4 429.7v0.3M1219.4 466v17.8M1219.9 431.5v22.1M1220.1 414.7v1.8M1220.5 442v24.3M1220.6 443v-2.6M1220.7 441.2v-0.1M1220.7 441.6v0.3M1220.8 444.3v0.5M1221.1 475.4v9M1221.4 460.5v-50.4M1221.6 484.4v-19.3M1221.9 443.3v6.8M1222.1 476.4v-0.1M1222.1 476.3v0.1M1222.3 445v2.8M1222.6 484.4v-26.4M1222.8 426v-21.4M1223 462.2v-5.1M1223.3 437.2v-9.2M1223.4 450v-38.3M1223.5 447.4v-0.1M1223.6 447.6v0.3M1223.6 450.7v0.6M1223.8 462.5v12M1224 484.4v-27.7M1224.2 484.4v-26M1224.3 443.2v41.2M1224.7 469.4v-27.2M1224.8 427.4v-0.4M1224.9 425v-0.1M1225 425.1v0.2M1225 427.6v0.5M1225.2 484.4v-11.2M1225.4 446.5v1.6M1225.6 435.2v-18.2M1225.8 483.9v-46M1226 473.1l0.1 11.3M1226.2 421.6v-0.4M1226.2 419.2v-0.2M1226.3 418.7v0M1226.4 420v0.3M1226.5 429.3v17.8M1226.8 484.4v-31.5M1227 484.4v-8.1M1227.1 484.4v-26.5M1227.4 476.4v-12.7M1227.5 429.7v-0.4M1227.6 427.4v-0.2M1227.7 419.4v7.2M1227.7 427.5v-15.9M1227.8 429.9v0.4M1228.1 476.4v8M1228.3 404.4v33.1M1228.5 450.4v34M1228.8 459.3v-17.8M1228.9 423.5v-0.3M1229 421.7v-0.1M1229 421.5v0.1M1229.1 422.8v0.3M1229.2 425.7v10.1M1229.5 452.9v24.7M1229.7 484.4l0.1 -40.1M1229.9 484.4v-10.8M1230.2 454.6v-8.9M1230.3 407.3v5.5M1230.3 418.9v0"/>
<path d="M226.4 445.6l19.9 -1.2M335.7 437.6l8.9 -1.2M394 427.5l5.7 -1.5M434 414.1l4.2 -1.7M464.5 400.1l3.4 -1.9M489.1 382.6l2.8 -2.8M509.8 356.7l2.4 -3.9M527.6 317.7l2.1 -6.6M543.3 234.4l1.8 -21.9M557.3 225.1l1.6 18.9M569.9 314.7l1.4 6.4M581.3 354.9l1.4 3.8M591.9 381.1l1.2 2.8M601.6 400.6l1.2 2.1M610.7 415.7l1 1.1M619.1 427.7l1 1.1M627.1 433.1l0.9 -0.5M634.5 403.5l0.9 -11.5M641.6 283.8l0.9 48.5M648.3 399l0.8 36.1M663 468.2l0.7 10.1M672.8 472.3l0.6 -1.3M678.1 457.3l0.6 -2.6M683.1 428.8l0.7 -4.8M688 374.6l0.6 -10.9M692.8 184.8l0.5 31.1M697.3 380.9l0.6 8.9M701.7 434l0.5 4.9M705.9 466.5l0.6 4M712.6 475.9l0.4 8.4M725.3 444.4l0.4 -5.6M729.7 305.2l0.4 21M736.9 478.1l0.4 -37.7M748.7 474l0.3 10.4M753.4 456l0.4 -5.6M756.3 391.6l0.4 -14M759.1 290.6l0.3 38.9M761.8 416.2l0.4 23.2M764.5 451.3l0.4 -9.2M775.9 484.4l0.3 -20.8M780.4 470.8l0.3 -16.1M782.7 412.3l0.3 26.9M785 442.2l0.3 42.2M796.6 484.4l0.3 -35M798.7 451.7l0.2 -6.6M800.7 373.2l0.3 -19.7M802.7 348.3l0.2 21M804.7 442l0.2 7.9M806.6 439l0.2 45.4M816.5 484.4l0.2 -25.9M818.5 433.2l0.2 -39.1M820.6 484.4l0.2 -56.5M824.9 471.1l0.2 -5.8M830.9 476l0.2 8.4M834.1 322.8l0.2 -20.6M836 425.6l0.2 5.6M841.2 472.6l0.2 11M845.9 484.4l0.2 -60M847.6 346.4l0.2 -30.7M849.2 462.4l0.2 -48.5M852.4 484.4l0.2 -13.1M857.8 473.7l0.2 -5.7M859.1 411.9l0.2 -13.3M860.4 281.1l0.2 51.5M861.6 403.8l0.2 32.5M863 449l0.2 15.3M867 484.4l0.2 -17.9M869.7 484.4l0.1 -13.1M871.1 388l0.2 -62.9M872.6 422.8l0.1 -19.7M875.3 472.1l0.1 -3.6M879.1 449.3l0.2 1.9M881.2 450.3l0.1 -23.7M882.2 450.9l0.2 18.5M884.1 450.2l0.1 -1.4M888.7 484.4l0.2 -20.6M890.9 456l0.1 -31.9M892.2 483.1l0.2 -39.5M894.7 464.3l0.1 13.2M898.2 468.1l0.2 -4.7M899.2 406.8l0.1 0.4M900.1 225.8l0.1 1.7M901 408.6l0.2 -0.7M902 463.9l0.1 4.9M906.3 468.8l0.1 -21.6M908.1 474.3l0.1 -26.2M909.3 484.4l0.1 -46.2M911.4 476.4l0.1 -0.3M915.8 405.6l0.1 -18.2M916.6 368.1l0.1 22.9M917.4 466.6l0.1 8.7M922.7 458.3l0.1 -12.6M924.5 453.6l0.1 3.1M929.2 467.1l0.1 -5.2M930 409.9l0.1 -11.4M930.7 231.2l0.1 50.5M931.4 423l0.1 2.6M932.2 472.9l0.1 11.5M936.9 484.2l0.1 -20.2M937.6 459.1l0.1 20.8M942.6 467.7l0.1 -11.2M943.3 380v-25M943.9 386.9l0.1 17.1M944.6 471l0.1 6M948.8 461.6l0.1 -9.7M950.2 480l0.1 -33.2M953.8 484.4v-12M954.7 431.3l0.1 -1.5M955.3 242.7l0.1 7.3M955.9 432l0.1 14.5M956.7 469.2l0.1 8.2M960 452.2l0.1 -26.2M960.8 322.4v-0.7M961.5 436.4v24.5M964.8 467l0.1 17.4M965.7 416.1l0.1 -19M966.3 385.4l0.1 21.8M967.3 484.4v-19.8M971 466.7l0.1 -128.9M971.8 447l0.1 37.4M975.3 449.1l0.1 -14.6M975.9 334.9l0.1 -26.4M976.5 453.8l0.1 -0.9M980 454.2l0.1 -22.8M980.6 321.6l0.1 2.1M981.3 429.4v31.6M984.6 478.5v-18.4M985 384.6l0.1 -43.8M985.5 440.9l0.1 13.5M988.9 484.4l0.1 -22.3M989.6 353.7l0.1 88.4M990.6 470.3l0.1 1.7M993.3 467l0.1 2M993.8 265l0.1 13M994.2 457.6l0.1 -27.3M997.3 473.3l0.1 -22.3M997.9 343.8l0.1 51.3M998.9 472.9l0.1 11.5M1001.5 450.4v-14.4M1001.9 262.8v36.3M1002.3 461.6l0.1 -26.1M1005.1 484.4l0.1 -10.5M1005.7 361l0.1 25.2M1006.6 448.5l0.1 4.2M1009.1 465.8v18.6M1009.5 260.9v16M1009.9 464v-24.6M1012.2 456.7l0.1 27.7M1013.1 405.6l0.1 58.5M1013.9 462.4l0.1 -11.6M1016.3 447.8v-9.5M1016.6 269.1l0.1 40.8M1017 426.4l0.1 -2.9M1019.6 479.8v-38.8M1020.2 464.3v20.1M1022.5 484.4l0.1 -31.2M1023.2 467.3l0.1 -23.8M1023.6 468.7v15.7M1025.8 484.4v-34.1M1026.6 449.4v-71.4M1027.1 440.4v42.4M1029.4 484.4v-14.2M1029.7 406.1l0.1 -29.1M1030.1 429.3v15.8M1030.7 460v19.3M1032.8 481.4l0.1 -26.7M1033.3 484.4v-39.6M1035.3 463.2v21.2M1035.9 398.1l0.1 -84.2M1036.3 469.1l0.1 -22.9M1038.3 456.3v28.1M1039 345.9v13.3M1039.7 471.8l0.1 12.6M1041.7 482.2v-21.1M1042 468.3l0.1 16.1M1044 480.4v-18.9M1044.6 404.6l0.1 -46.7M1045.1 442.4v23.3M1046.8 445.4v8.7M1047.4 407.5l0.1 -69.4M1047.8 432.4l0.1 14.2M1049.8 484.4v-29.1M1050.4 484.4l0.1 -22.8M1052.2 473.6v-7.2M1052.7 455.6v-21.7M1053 444.7v19.2M1053.5 461.5l0.1 22.9M1055.2 427.4v57M1055.7 484.4l0.1 -48.3M1057.4 476.2v8.2M1057.9 413.1l0.1 -42M1058.2 466.7v13.7M1059.9 484.4v-17.7M1060.5 379.2l0.1 19.4M1061.2 459.7v24.7M1062.8 484.4v-12.3M1063 382.3l0.1 39.9M1063.3 465.7l0.1 18.7M1065 484.4l0.1 -13.6M1065.3 410v-2.8M1065.6 465.6v17.8M1067.1 481.9l0.1 -22.4M1067.6 453.7v-19.4M1067.9 427.3v21.2M1068.3 467.7v-26.3M1069.8 438.9v-5.7M1070.1 392.7v-0.1M1070.3 419.7v17.7M1071.8 446.7v-1.8M1072.3 452v-33.7M1072.6 484.4v-13.5M1073.2 475.3v9.1M1074.3 420.4v-17.8M1074.5 384.9v-0.3M1074.7 385.4l0.1 0.5M1075 443.9v17.8M1076.5 484.4v-39.9M1076.8 369.9v-46M1077.1 453.1v-12.6M1078.5 465.6v2.1M1078.7 374v-0.6M1078.9 371l0.1 -0.1M1079.2 372.1v0.5M1079.4 421.4v17.8M1080.6 463.9v20.5M1081.1 332.2v16.7M1081.6 475l0.1 -3M1082.8 381.3v-9.6M1083 368.7v-0.2M1083.2 367.5v0M1083.4 368.6l0.1 0.3M1083.6 372l0.1 17.8M1085 484.4v-24.9M1085.3 368.7v42.1M1085.8 467.7v15.8M1086.8 375.7v-0.4M1087 373v-0.3M1087.2 371.7l0.1 0M1087.4 372l0.1 0.1M1087.7 373.7v0.3M1087.9 406.3v17.8M1089 440.1l0.1 -5.8M1089.5 466v-27.4M1090.7 453.9l0.1 -17.8M1091 375.2v-0.4M1091.2 372.9v-0.2M1091.4 372.8v0.2M1091.6 375v0.5M1091.8 447.5v17.8M1093 446.8v14.5M1093.3 393.5v46.5M1093.7 467v-16.4M1094.7 402.1v-17.7M1094.9 380.9v-0.3M1095.1 379.6v-2.1M1095.3 380.6v0.3M1095.5 383.9v13.3M1096.6 473.6v10.8M1097 332.9v23.1M1097.4 484.4l0.1 -20M1098.4 404.4v-8.8M1098.6 393.1v-0.3M1098.8 391.6v-0.1M1099 391.6v0.1M1099.2 393v0.3M1099.4 400.9v17.7M1100.4 484.4v-9.9M1100.7 364.6v-32.1M1100.9 436l0.1 37.2M1102.1 428.2v-0.4M1102.3 425.5v-0.3M1102.5 424.3v-3M1102.7 424.8v0.2M1102.8 427l0.1 0.3M1103.8 464l0.1 9.5M1104.2 409l0.1 -66.6M1104.5 446.2v15.8M1105.6 442.9l0.1 -17.8M1105.8 418v-0.3M1106 416.6v0M1106.2 417.4v0.3M1106.4 420.6v3.8M1107.5 484.4v-28.7M1107.8 336.4v8.6M1108.2 477.6v-10.8M1109.1 391.8v-0.5M1109.3 388.9v-0.3M1109.5 388v0M1109.7 389.1v0.3M1109.8 392.3l0.1 14.5M1110.9 484.4v-10.4M1111.2 344v30.2M1111.5 483.2l0.1 -28.9M1112.4 391.9l0.1 -6.2M1112.6 382.9v-0.2M1112.8 381.7v-0.6M1113 382.4v0.3M1113.2 385.3v0.5M1113.4 472.8l0.1 11.6M1114.3 440.5v43.9M1114.7 438.9v1.6M1115.6 451.4v-17.8M1115.8 380.4v-0.4M1116 378.2v-0.2M1116.1 377.9l0.1 0.1M1116.3 379.4v0.3M1116.5 401.6v17.7M1117.3 464.7v15.3M1117.7 385.6v34.1M1118.1 473.5v10.9M1118.9 382.3v-0.5M1119.1 379.4v-0.2M1119.3 378.3v-1.7M1119.4 379v0.2M1119.6 381.5v0.4M1119.8 475.4v9M1120.8 484.4v-72.7M1121.2 466.3v-5.1M1122.1 390.3v-0.6M1122.2 387.1l0.1 -0.3M1122.4 386.4v0M1122.6 388.1v0.4M1122.7 435.5l0.1 17.8M1123.7 449.3l0.1 35.1M1124.1 484.4v-34.4M1125.1 418.5v-17.7M1125.2 393l0.1 -0.3M1125.4 391.6v-6.9M1125.6 392.5v0.3M1125.7 395.8v12.8M1126.7 484.4v-52.1M1127 484.4l0.1 -28.6M1127.5 473v11.4M1128.1 403.7v-0.6M1128.3 400.6v-0.2M1128.4 400.2l0.1 0.1M1128.6 402.4v0.5M1128.8 455.6v26M1129.6 443.7l0.1 -25.3M1129.8 355.5l0.1 43.3M1130.2 484.4v-8.8M1131 428.2v-0.5M1131.1 425.3v-0.3M1131.3 424.2v-2.9M1131.4 424.9v0.3M1131.6 427.5v0.5M1132.3 461.7l0.1 4.3M1132.7 365.7v-15.2M1133 484.4v-26.1M1133.8 429.9v-0.4M1133.9 416.4l0.1 10.6M1134.1 426.1v0M1134.2 426.7l0.1 0.2M1134.4 428.9v0.4M1134.6 470.2l0.1 14.2M1135.4 451.6v32.8M1135.6 453.8v27.2M1135.9 468v16.4M1136.6 409.7v-0.5M1136.7 406.5l0.1 -0.2M1136.9 402.2v3.3M1137 406.7l0.1 0.3M1137.2 416.9v17.7M1138.1 435.2v-2.6M1138.3 461.2v23.2M1139.2 482.4v-17.8M1139.3 392.9v-0.4M1139.5 390.5v-0.1M1139.6 389.9v0M1139.8 390.9v0.3M1139.9 393.7v0.5M1140.7 484.4l0.1 -35M1141 377.7v55.6M1141.9 458.4v-17.8M1142 386.9v-0.4M1142.1 384.7l0.1 -0.1M1142.3 384.2v0.1M1142.4 385.3v0.3M1142.6 388.1v0.4M1143.4 440.7v0.3M1143.7 470.8v-19.9M1144.6 424.6v-17.7M1144.7 380.7v-0.3M1144.8 379l0.1 -0.1M1145 379.5v0.3M1145.1 382.4v0.6M1145.8 447.6v-6M1146.1 437.6v-27.4M1146.4 484.4l0.1 -30.2M1147.1 405.9v-17.8M1147.2 384.8l0.1 -0.3M1147.4 383.3v0M1147.5 383.7v0.2M1147.7 385.9v0.4M1147.8 460.6v17.8M1148.5 442.4v2.9M1148.8 484.4v-41.6M1149.1 470.2l0.1 -0.9M1149.6 391.7l0.1 -0.5M1149.8 388.9v-0.3M1149.9 387.8v0M1150 388.5l0.1 0.2M1150.2 390.9v0.4M1150.8 484.4v-35.2M1151.1 468.5v-78.3M1151.3 428.8v45.9M1152.1 440.5v-17.8M1152.2 404.9v-0.3M1152.3 403.1v-0.1M1152.4 403l0.1 0.2M1152.6 404.6v0.3M1152.7 427v17.8M1153.5 484.4l0.1 -22.3M1153.7 464.6v-13.8M1154.5 471.9v-29.8M1154.6 427.5v-0.5M1154.7 424.8l0.1 -0.2M1154.9 424.8v0.2M1155 427.7v0.5M1155.5 484.4v-8M1155.9 439v45.4M1156.1 440.6v5.4M1156.8 484.4v-16.5M1157 449v-0.3M1157.1 447.3v-0.1M1157.2 447v0.1M1157.3 448.3v0.3M1157.5 451.1v6.1M1158.3 458.8v-48.9M1158.5 435v26.1M1159.2 413.1v-1.7M1159.3 408.9v-0.3M1159.4 407.5l0.1 0M1159.6 407.8v0.1M1159.7 409.6v0.4M1159.8 457.2v17.8M1160.6 484.4v-99.7M1160.9 469.7v-1.7M1161.5 405.7v-0.5M1161.6 402.6v-0.2M1161.7 401.3l0.1 0M1161.9 401.7v0.1M1162 403.8v0.4M1162.1 468.7v15.7M1162.7 442.9l0.1 -24.7M1162.9 427.3v47.8M1163.2 442v17.5M1163.8 421.4v-17.8M1163.9 396.3v-0.3M1164 391.5v3.6M1164.1 396.5l0.1 0.4M1164.3 432.7v17.8M1165 471.5v12.9M1165.3 438.9v45.5M1165.9 421.1l0.1 -17.8M1166.1 393.5v-0.3M1166.2 391.9v-0.1M1166.3 392.1v0.2M1166.4 394.1v0.4M1166.5 451.7v17.8M1167.2 415.4v14.4M1167.4 437.6l0.1 33.1M1168.1 452.2v-17.8M1168.2 395.2v-0.4M1168.3 393.3l0.1 -0.1M1168.5 393.7v0.2M1168.6 396.5v0.5M1169.2 467.7v7.8M1169.4 399.8l0.1 -11.5M1169.7 465.7v3.9M1170.3 403.7v-0.4M1170.4 401v-0.2M1170.5 399.9v-5.4M1170.6 400.5v0.2M1170.7 402.8v0.4M1171.3 479.5v-8M1171.6 384.3v57.6M1172.3 469.9v-17.8M1172.4 409.9l0.1 -0.3M1172.6 407.9v-0.1M1172.7 407.8v0.1M1172.8 409.5v0.4M1172.9 451.4v17.7M1173.5 484.4v-17.2M1173.7 371.3v28.3M1173.9 466.2v6.7M1174.4 425.4l0.1 -0.4M1174.6 423.1v-0.2M1174.7 422.2v0M1174.8 422.7v0.2M1174.9 424.7v0.3M1175.4 479.4v-5.4M1175.7 396v-26.5M1175.9 475.9l0.1 -9.4M1176.5 450.1v-0.3M1176.6 447.9v-0.1M1176.7 447.4v0.1M1176.8 436.7l0.1 12.2M1176.9 451.5l0.1 4.3M1177.6 460v-35.4M1177.7 404.5v59.5M1178 459.4v25M1178.5 417.5l0.1 -0.4M1178.6 415.2l0.1 -0.2M1178.8 414.9v0.1M1178.9 416.8v0.4M1179 450.9v33.5M1179.6 417.9v23.9M1179.8 460.3v-36.4M1180.4 472.2v-17.7M1180.5 411.5v-0.3M1180.6 409.5v-0.2M1180.7 409v0.1M1180.8 410.1v0.3M1180.9 412.8v0.4M1181.5 471.4v-31.3M1181.7 484.4l0.1 -20.1M1182.4 479.5v-29M1182.5 401.8v-0.5M1182.6 399.1v-0.2M1182.7 399.1v0.3M1182.8 402v0.6M1183 484.4v-16.5M1183.3 449.7l0.1 34.7M1183.6 421.9v62.5M1183.9 484.4v-10.6M1184.3 395.4v-0.6M1184.4 392.1v-0.3M1184.5 391.1l0.1 0.1M1184.6 392.5l0.1 0.3M1184.7 415.1l0.1 17.8M1185.1 467.2v17.2M1185.4 426.7v57.7M1185.7 484.4v-16M1186.2 452.6v-17.7M1186.3 394.2v-0.4M1186.4 392.2v-0.1M1186.5 392.6v0.2M1186.6 395.3v0.5M1187.1 472.7v2.9M1187.4 418.6v65.8M1187.9 484.4v-11.2M1188.1 401.3v-0.4M1188.2 398.6v-0.2M1188.3 397.8v0M1188.4 399v0.2M1188.5 402.1v14.2M1188.9 460.1l0.1 -13M1189.2 427.1v-37.3M1189.4 484.4v-9.8M1189.9 447.6v-17.8M1190 410.4v-0.3M1190.1 408.7v0M1190.2 409.1v0.2M1190.3 411.5v0.4M1190.8 456v5.9M1191 381.2v22.2M1191.2 458.1v26.3M1191.7 437.6v-0.3M1191.8 435.6v-0.2M1191.9 435v0M1192 435.9v0.2M1192.1 438.2v0.4M1192.7 484.4v-14.5M1192.8 386.6v52.1M1193.3 483.7l0.1 -8.5M1193.5 458.4v-0.5M1193.6 455.3v-0.2M1193.7 454.5v0.1M1193.8 440.9v15.6M1193.9 477.9v-23.4M1194.3 472.4v-28.4M1194.5 461.7l0.1 -69.3M1194.8 479.7v-34M1195.1 470.6v13.8M1195.3 425.2v-0.5M1195.4 422.5v-0.2M1195.5 421.9v0.1M1195.6 415v8.9M1195.6 447.4l0.1 -3.3M1196.2 449.2v-17.7M1196.4 484.4v-25.1M1196.9 484.4v-16.2M1197 413.9v-0.4M1197.1 411.7v-0.1M1197.2 411.1v0M1197.3 411.9v0.2M1197.4 414.2v0.4M1197.5 474v5.7M1198 484.4v-20.4M1198.1 459l0.1 25.4M1198.7 432.6v-17.8M1198.8 408.7v-0.3M1198.9 403.6v3.9M1199 408.8v0.3M1199.1 434v17.8M1199.5 484.4v-27.6M1199.7 440.3v-25.6M1199.9 463.9v20.5M1200.4 404.9v-0.4M1200.5 402.2v-0.1M1200.6 401.8v0.1M1200.7 403.7v0.4M1200.8 455v17.8M1201.4 461v-5.1M1201.9 484.4v-9M1202 438.9v-17.8M1202.1 406.1v5.4M1202.2 410.4v-7.6M1202.3 411.3v0.3M1202.4 414.6v10.8M1202.8 465.4l0.1 -1.8M1203 412.8l0.1 13.7M1203.3 467.6v16.8M1203.7 454.8v-15.4M1203.7 414.2l0.1 -0.3M1203.8 412.4v-0.1M1203.9 412.6v0.2M1204 414.7v0.4M1204.2 484.4v-17M1204.7 484.4v-34.3M1204.8 462.7v21.7M1205.3 439.2v-14.6M1205.4 421.8v-0.3M1205.5 420.3v0M1205.6 420.9v0.2M1205.6 423.4l0.1 0.4M1205.8 465.7v18.7M1206.3 484.4v-72.8M1206.5 484.4v-10.2M1206.9 455.5v-12M1207 440.8v-0.3M1207.1 439.3v-0.1M1207.1 439.5l0.1 0.1M1207.2 441.3v0.3M1207.6 479.5v-5.3M1207.8 425.8v10M1208 445.3v-9.5M1208.2 460.5v6M1208.5 470.4v-0.3M1208.6 468.4v-0.2M1208.7 468v0.1M1208.8 456.9v12.7M1208.9 461.1v7.7M1209.4 460v24.4M1209.6 430.2v54.2M1210 442.9l0.1 -9.1M1210.1 431.2v-0.2M1210.2 429.8v-0.1M1210.3 429.9v0.2M1210.4 431.7v0.4M1210.5 472.1v12.3M1211 435.9v-36.2M1211.2 470.7v-16.6M1211.6 419.2v-0.6M1211.7 415.8v-0.2M1211.8 414.8v0M1211.9 416v0.3M1212 431.1v17.8M1212.4 452v32.4M1212.6 429.2v55.2M1213.1 478.3v-17.8M1213.2 416.3v-0.3M1213.3 414.3v-0.2M1213.3 414l0.1 0.1M1213.4 415.6v0.3M1213.5 439.1v17.8M1214 439.2v16M1214.2 437.4v35.2M1214.6 477.7v-18M1214.7 412.7v-0.4M1214.8 410.5v-0.1M1214.9 410.6v0.2M1214.9 413.1l0.1 0.5M1215.1 476.5v3.5M1215.6 476.6v-10.2M1215.8 452.9v31.5M1216.2 415.3v-0.5M1216.3 412.7v-0.2M1216.3 412.2v0.1M1216.4 413.7v0.4M1216.5 439.7v17.8M1217 475.6v8.8M1217.2 484.4v-9.9M1217.6 416.9l0.1 -0.4M1217.7 414.3v-0.2M1217.8 413.7v0M1217.9 415v0.3M1218 429.5v17.8M1218.3 484.4v-31.8M1218.4 455.8l0.1 28.6M1218.6 438v46.4M1219 481.7l0.1 -31M1219.1 430v-0.4M1219.2 428.1v-0.1M1219.3 428.1v0.1M1219.4 430v0.4M1219.5 484.4v-8.3M1219.9 453.6v30.8M1220.1 416.5v44.7M1220.5 466.3v-12.1M1220.6 440.4v1.9M1220.7 441.1v0M1220.7 441.9l0.1 0.2M1220.8 444.8v0.6M1221.2 484.4v-18.6M1221.4 410.1v-4.5M1221.6 465.1v10.9M1221.9 450.1v29.3M1222.1 476.3v0M1222.1 476.4l0.1 0.1M1222.3 447.8v36.6M1222.6 458v-1.1M1222.8 404.6v14.4M1223 457.1v27.3M1223.3 428l0.1 27.8M1223.4 411.7v-19.5M1223.5 447.3v-0.1M1223.6 447.9v0.3M1223.6 451.3l0.1 10.2M1223.8 474.5v9.9M1224 456.7v-17.6M1224.2 458.4v-44.6M1224.4 484.4v-26.4M1224.7 442.2v9.8M1224.8 427v-11.5M1224.9 424.9v-0.1M1225 425.3v0.2M1225 428.1v0.6M1225.2 473.2v-4M1225.4 448.1v36.3M1225.6 417v17.4M1225.8 437.9v-2.3M1226.1 484.4v-10.9M1226.2 421.2v-0.4M1226.2 419l0.1 -0.1M1226.3 418.7v0.1M1226.4 420.3v0.4M1226.5 447.1v17.8M1226.8 452.9v-14.6M1227 476.3v-39.5M1227.1 457.9v-19M1227.4 463.7v20.7M1227.5 429.3v-0.3M1227.6 427.2v-0.2M1227.7 426.6v0.1M1227.7 411.6l0.1 16.3M1227.8 430.3v0.5M1228.1 484.4l0.1 -17.5M1228.3 437.5v46.9M1228.6 484.4v-20.5M1228.8 441.5v-15.7M1228.9 423.2v-0.3M1229 421.6v-0.1M1229 421.6l0.1 0.1M1229.1 423.1v0.3M1229.2 435.8v17.8M1229.6 484.4v-32.6M1229.8 444.3v-5.9M1229.9 473.6v9.5M1230.2 445.7v-17.7M1230.3 412.8v7.2"/>
<path d="M246.3 444.4l17.2 -24.9M344.6 436.4l8.3 -1.2M399.7 426l5.5 -1.8M438.2 412.4l4.1 -1.6M467.9 398.2l3.2 -2M491.9 379.8l2.7 -2.9M512.2 352.8l2.3 -4.1M529.7 311.1l2 -7.2M545.1 212.5l1.8 -31.8M558.9 244l1.6 15.1M571.3 321.1l1.5 5.8M582.7 358.7l1.3 3.6M593.1 383.9l1.3 2.6M602.8 402.7l1.1 2M611.7 416.8l1.1 8.4M620.1 428.8l1 0.8M628 432.6l1 -1.3M635.4 392l0.9 -14.8M642.5 332.3l0.8 28.2M649.1 435.1l0.8 48.5M668 482.8l0.7 -22.7M673.4 471l0.7 -1.3M678.7 454.7l0.7 -2.8M683.8 424l0.6 -5.2M688.6 363.7l0.6 -12.7M693.3 215.9l0.6 61M697.9 389.8l0.5 8M702.2 438.9l0.6 -9.8M706.5 470.5l0.5 6.8M716.5 483l0.4 -26.7M725.7 438.8l0.5 34.9M730.1 326.2l0.5 94.2M737.3 440.4l0.4 -0.2M750.9 484.4l0.4 -14.8M753.8 450.4l0.4 -6.3M756.7 377.6l0.3 -17.2M759.4 329.5l0.4 24.8M762.2 439.4l0.3 4.3M764.9 442.1l0.3 29.9M776.2 463.6l0.3 -11.4M780.7 454.7l0.3 -20.9M783 439.2l0.3 19.4M786.7 484.4l0.3 -28.6M796.9 449.4l0.3 -21.4M798.9 445.1l0.3 -11.5M801 353.5l0.2 -27.1M802.9 369.3l0.3 16.3M804.9 449.9l0.2 6.4M808.3 484.4l0.2 -11.3M816.7 458.5l0.2 -45.8M818.7 394.1l0.2 -74.1M820.8 427.9l0.3 -22.7M825.1 465.3l0.2 19.1M832.1 484.4l0.2 -58.7M834.3 302.2l0.2 15.2M836.2 431.2l0.2 51M842.7 484.4l0.2 -22.1M846.1 424.4l0.1 -19.4M847.8 315.7l0.2 7M849.4 413.9l0.1 -2.3M852.6 471.3l0.2 13.1M858 468l0.2 -6.3M859.3 398.6l0.1 -15.8M860.6 332.6l0.1 28.6M861.8 436.3l0.2 20.8M863.2 464.3l0.2 20.1M867.2 466.5l0.1 -15.5M869.8 471.3l0.2 -38.2M871.3 325.1l0.1 -9M872.7 403.1l0.2 16.6M875.4 468.5l0.2 15.9M879.3 451.2l0.1 33.2M881.3 426.6l0.1 -35.9M882.4 469.4l0.1 15M884.2 448.8l0.2 35.6M888.9 463.8l0.1 -5.5M891 424.1l0.1 -69.1M892.4 443.6l0.1 -0.1M896.7 484.4l0.1 -9.4M898.4 463.4l0.1 -5.2M899.3 407.2l0.1 -11.6M900.2 227.5l0.1 44.6M901.2 407.9l0.1 45.1M902.1 468.8l0.1 14M906.4 447.2l0.2 12.4M908.2 448.1l0.1 -43.4M909.4 438.2l0.1 -16.3M911.5 476.1l0.1 8.3M915.9 387.4l0.1 -24.3M916.7 391l0.1 17.5M917.5 475.3l0.1 6.6M922.8 445.7l0.1 23.3M924.6 456.7l0.1 27.7M929.3 461.9l0.1 -5.6M930.1 398.5l0.1 -13.5M930.8 281.7l0.1 45.1M931.5 425.6l0.1 13.6M932.3 484.4l0.1 -22.8M937 464v-27.3M937.9 484.4l0.1 -14.2M942.7 456.5l0.1 -4.6M943.3 355l0.1 -39.4M944 404l0.1 14M945 479.2l0.1 -13.3M948.9 451.9v26.7M950.3 446.8l0.1 5.8M953.8 472.4l0.1 -16.6M954.8 429.8v-11.5M955.4 250v57.5M956 446.5v-17.7M958.7 481.4l0.1 -7.7M960.1 426l0.1 7.4M960.8 321.7l0.1 40.2M961.5 460.9l0.1 23.5M965.2 484.4l0.1 -11.8M965.8 397.1l0.1 -25.7M966.4 407.2v16.9M967.3 464.6l0.1 1.3M971.1 337.8v-17M972.2 484.4l0.1 -9.5M975.4 434.5l0.1 19.4M976 308.5v10M976.6 452.9l0.1 31.5M980.1 431.4v10.1M980.7 323.7l0.1 45.3M981.3 461l0.1 23.4M984.6 460.1l0.1 -7.5M985.1 340.8l0.1 -53.9M985.6 454.4v11.3M989 462.1l0.1 -5.1M989.7 442.1l0.1 33.9M990.7 472v12.4M993.4 469l0.1 -11.7M993.9 278v79.7M994.3 430.3l0.1 1.4M997.4 451v16.3M998 395.1v44.7M1000.8 484l0.1 -24.4M1001.5 436l0.1 -13.3M1001.9 299.1l0.1 54.5M1002.4 435.5v38.9M1005.2 473.9v-44.3M1005.8 386.2v73.9M1006.7 452.7v31.7M1009.1 484.4l0.1 -8.5M1009.5 276.9l0.1 105M1009.9 439.4l0.1 3.5M1012.5 484.4l0.1 -21.9M1013.2 464.1v20.3M1014 450.8v24.2M1016.3 438.3l0.1 -12.9M1016.7 309.9v50.6M1017.1 423.5v19.4M1019.6 441l0.1 1.1M1020.4 484.4v-32M1022.6 453.2v2.9M1023.3 443.5v-36.3M1023.7 484.4l0.1 -27M1025.8 450.3l0.1 -5M1026.6 378l0.1 -26M1027.4 484.4l0.1 -31.1M1029.4 470.2l0.1 -35M1029.8 377v-53.4M1030.1 445.1v13.3M1032.2 481.7v-21.8M1032.9 454.7v-44.2M1033.3 444.8l0.1 -15.7M1035.6 484.4v-35.2M1036 313.9v-13.7M1036.4 446.2v10.8M1038.5 484.4l0.1 -28.7M1039 359.2v81.9M1041.1 484.4v-19.4M1041.7 461.1l0.1 -30.1M1042.2 484.4v-52.8M1044 461.5v17.2M1044.7 357.9v-2.8M1045.1 465.7v18.7M1046.8 454.1l0.1 30.3M1047.5 338.1v-10.8M1047.9 446.6v37.8M1049.8 455.3l0.1 -9M1050.5 461.6v-31.4M1052.2 466.4v18M1052.7 433.9l0.1 -31.2M1053 463.9l0.1 15.8M1054.7 484.4l0.1 -27.6M1055.3 484.4l0.1 -21M1055.8 436.1v-10M1057.7 484.4v-40.4M1058 371.1v-59.5M1058.3 484.4v-41.5M1059.9 466.7v3.3M1060.6 398.6v85.8M1062.3 484.4v-15.6M1062.8 472.1v-17.1M1063.1 422.2v25.2M1063.5 484.4l0.1 -25.3M1065.1 470.8v-23.6M1065.3 407.2l0.1 -1.4M1065.6 484.4l0.1 -31.2M1067.2 459.5v15.3M1067.6 434.3l0.1 -26.7M1067.9 448.5v16.4M1068.3 441.4l0.1 10.1M1069.8 433.2l0.1 -17.8M1070.1 392.6v0.1M1070.3 437.4l0.1 15.5M1071.8 444.9v38.2M1072.3 418.3v-86.1M1072.6 470.9v-34.2M1074 484.4v-9.2M1074.3 402.6v-14M1074.5 384.6l0.1 -0.2M1074.8 385.9v0.6M1075 461.7v17.8M1076.5 444.5v-29.4M1076.8 323.9v-2.4M1077.1 440.5v24.3M1078.5 467.7v-17.8M1078.7 373.4l0.1 -0.5M1079 370.9v-0.9M1079.2 372.6v0.5M1079.4 439.2v17.8M1080.8 484.4v-53.8M1081.1 348.9l0.1 118.2M1081.7 472v12.4M1082.8 371.7v-0.5M1083 368.5v-0.3M1083.2 367.5l0.1 0.1M1083.5 368.9v0.3M1083.7 389.8v17.8M1085 459.5v-27M1085.3 410.8v49.6M1086.6 484.4v-16.9M1086.8 375.3v-0.4M1087 372.7l0.1 -0.2M1087.3 371.7v-0.1M1087.5 372.1v0.1M1087.7 374v0.3M1087.9 424.1v17.7M1089.1 434.3v31.8M1089.5 438.6l0.1 9.4M1090.8 436.1v-17.8M1091 374.8v-0.4M1091.2 372.7v-0.1M1091.4 373v0.2M1091.6 375.5v0.4M1091.8 465.3v17.8M1093 461.3v23.1M1093.3 440v27.4M1093.7 450.6v18.9M1094.7 384.4v-0.9M1094.9 380.6l0.1 -0.2M1095.1 377.5l0.1 2.1M1095.3 380.9l0.1 0.3M1095.5 397.2l0.1 17.7M1096.7 484.4l0.1 -39.3M1097 356l0.1 81.9M1097.5 464.4v2.6M1098.4 395.6v-0.4M1098.6 392.8v-0.2M1098.8 391.5v-0.1M1099 391.7v0.1M1099.2 393.3v0.3M1099.4 418.6v17.8M1100.4 474.5l0.1 -22.4M1100.7 332.5v5.8M1101 473.2v11.2M1102.1 427.8v-0.4M1102.3 425.2v-0.2M1102.5 421.3v-2.1M1102.7 425v0.2M1102.9 427.3v0.4M1103.9 473.5v10.9M1104.3 342.4v-10.1M1104.5 462v22.4M1105.7 425.1v-4.5M1105.8 417.7l0.1 -0.3M1106 416.6l0.1 0M1106.2 417.7v0.3M1106.4 424.4v17.7M1107.5 455.7v-17.6M1107.8 345v61.8M1108.2 466.8v17.6M1109.1 391.3l0.1 -0.4M1109.3 388.6v-0.2M1109.5 388v0.1M1109.7 389.4v0.3M1109.9 406.8v17.7M1110.9 474v-38.6M1111.2 374.2v62.5M1111.6 454.3v8M1112.5 385.7v-0.5M1112.6 382.7l0.1 -0.3M1112.8 381.1v0.6M1113 382.7v0.3M1113.2 385.8v8.3M1114 484.4v-45.9M1114.4 484.4v-28.4M1114.7 440.5v43.9M1115.6 433.6l0.1 -17.8M1115.8 380v-0.3M1116 378v-0.1M1116.2 378v0.1M1116.3 379.7l0.1 0.4M1116.5 419.3v17.8M1117.4 484.4l0.1 -14.5M1117.7 419.7v56.8M1118.8 484.4v-14M1118.9 381.8l0.1 -0.4M1119.1 379.2v-0.2M1119.3 376.6v1.7M1119.4 379.2l0.1 0.3M1119.6 381.9v0.5M1120.4 484.4v-10.9M1120.8 411.7v-21.4M1121.2 461.2l0.1 23.2M1122.1 389.7v-0.5M1122.3 386.8v-0.1M1122.4 386.4l0.1 0.2M1122.6 388.5v0.4M1122.8 453.3v17.8M1123.8 484.4l0.1 -23.2M1124.1 450v-12M1125.1 400.8v-5.2M1125.3 392.7v-0.3M1125.4 384.7v6.9M1125.6 392.8v0.3M1125.7 408.6l0.1 17.8M1126.7 432.3v-8M1127.1 455.8v-30.1M1128 484.4v-31.3M1128.1 403.1l0.1 -0.5M1128.3 400.4v-0.1M1128.5 400.3v0.2M1128.6 402.9v0.5M1128.9 484.4v-10.2M1129.7 418.4v10.4M1129.9 398.8v48.8M1130.2 475.6v-18.7M1131 427.7v-0.4M1131.1 425v-0.2M1131.3 421.3v2.9M1131.4 425.2l0.1 0.2M1131.6 428v0.5M1132.4 466v18.4M1132.7 350.5v20.6M1133 458.3l0.1 0.5M1133.8 429.5v-0.4M1134 427v-0.2M1134.1 426.1v0M1134.3 426.9v0.2M1134.4 429.3v0.4M1135.1 484.4v-20.9M1135.4 484.4v-8.7M1135.7 484.4v-44.8M1136 484.4v-13.5M1136.6 409.2v-0.5M1136.8 406.3v-0.3M1136.9 405.5v0.1M1137.1 407v0.4M1137.2 434.6v17.8M1138.1 432.6v37.9M1138.4 484.4v-23.6M1139.2 464.6v-17.8M1139.3 392.5l0.1 -0.3M1139.5 390.4v-0.2M1139.6 389.9l0.1 0.1M1139.8 391.2v0.3M1139.9 394.2v14.2M1140.8 449.4v-19.2M1141 433.3v43.2M1141.9 440.6v-17.8M1142 386.5v-0.3M1142.2 384.6v-0.2M1142.3 384.3v0M1142.4 385.6l0.1 0.3M1142.6 388.5v15.1M1143.4 441v42.1M1143.7 450.9l0.1 16.1M1144.6 406.9v-17.8M1144.7 380.4v-0.4M1144.9 378.9v0M1145 379.8v0.2M1145.1 383v6.1M1145.8 441.6l0.1 32M1146.1 410.2l0.1 9.4M1146.5 454.2v-9.9M1147.1 388.1v-0.9M1147.3 384.5v-0.2M1147.4 383.3v-0.1M1147.5 383.9l0.1 0.2M1147.7 386.3v0.5M1147.9 484.4v-11.1M1148.5 445.3l0.1 39.1M1148.8 442.8v-16.7M1149.2 469.3v15.1M1149.7 391.2v-0.4M1149.8 388.6v-0.2M1149.9 387.8v0M1150.1 388.7v0.2M1150.2 391.3v0.5M1150.8 449.2l0.1 -3.2M1151.1 390.2l0.1 -23.9M1151.3 474.7l0.1 9.7M1152.1 422.7v-15.4M1152.2 404.6v-0.3M1152.3 403v-0.1M1152.5 403.2v0.1M1152.6 404.9v0.4M1152.7 444.8v17.8M1153.6 462.1v-45.8M1153.7 450.8l0.1 22.4M1154.5 442.1v7.5M1154.6 427v-0.4M1154.8 424.6v-0.1M1154.9 425v0.3M1155 428.2v0.6M1155.5 476.4l0.1 8M1156 477.7v-97.1M1156.1 446l0.1 38.4M1156.8 467.9l0.1 -16.6M1157 448.7v-0.3M1157.1 447.2v-0.1M1157.2 447.1v0.1M1157.3 448.6l0.1 0.2M1157.5 457.2v17.8M1158.3 409.9v-43.3M1158.5 461.1v23.3M1159.2 411.4v-0.4M1159.3 408.6l0.1 -0.2M1159.5 407.5v-0.1M1159.6 407.9v0.2M1159.7 410v0.4M1159.8 475v9.4M1160.6 384.7v-17.5M1160.9 468v16.4M1161.5 405.2v-0.4M1161.6 402.4v-0.3M1161.8 401.3v-5.2M1161.9 401.8v0.2M1162 404.2v0.4M1162.5 478.1v-3.8M1162.8 418.2v11.4M1162.9 475.1v9.3M1163.2 459.5v24.9M1163.8 403.6v-4.6M1163.9 396v-0.2M1164 395.1v0.1M1164.2 396.9v0.4M1164.3 450.5v17.8M1165.1 484.4v-70.4M1165.4 484.4v-14.8M1166 403.3v-7.4M1166.1 393.2v-0.2M1166.2 391.8v0M1166.3 392.3v0.1M1166.4 394.5v0.4M1166.5 469.5l0.1 14.9M1167.2 429.8v54.6M1167.5 470.7v13.7M1168.1 434.4v-17.8M1168.2 394.8l0.1 -0.3M1168.4 393.2v0M1168.5 393.9v0.3M1168.6 397v0.5M1169.2 475.5v8.9M1169.5 388.3v24.7M1169.7 469.6v14.8M1170.3 403.3v-0.4M1170.4 400.8v-0.2M1170.5 394.5v5.4M1170.6 400.7v0.3M1170.7 403.2l0.1 0.5M1171.3 471.5v12.9M1171.6 441.9v42.5M1172.3 452.1l0.1 -17.8M1172.5 409.6v-0.4M1172.6 407.8v-0.1M1172.7 407.9v0.1M1172.8 409.9v0.4M1172.9 469.1v15.3M1173.5 467.2v-39.4M1173.7 399.6v66M1173.9 472.9v11.5M1174.5 425v-0.3M1174.6 422.9v-0.2M1174.7 422.2v0M1174.8 422.9v0.2M1174.9 425v0.4M1175.4 474l0.1 10.4M1175.7 369.5v10.1M1176 466.5v17.9M1176.5 449.8v-0.4M1176.6 447.8v-0.2M1176.7 447.5l0.1 0.1M1176.9 448.9v0.3M1177 455.8v17.8M1177.6 424.6v3.8M1177.7 464l0.1 20.4M1178.4 481.6l0.1 -17.7M1178.6 417.1v-0.4M1178.7 415v-0.1M1178.8 415v0.2M1178.9 417.2v0.4M1179.3 484.4v-11.9M1179.6 441.8v42.6M1179.8 423.9v3.2M1180.4 454.5v-17.8M1180.5 411.2v-0.4M1180.6 409.3v-0.1M1180.7 409.1v0M1180.8 410.4v0.2M1180.9 413.2v10.7M1181.5 440.1v6.6M1181.8 464.3v-12.5M1182.4 450.5v8.3M1182.5 401.3v-0.4M1182.6 398.9v-0.1M1182.7 399.4v0.2M1182.8 402.6v0.6M1183 467.9v-5.4M1183.4 484.4v-52.4M1183.7 484.4v-26.4M1183.9 473.8v-13.6M1184.3 394.8l0.1 -0.5M1184.4 391.8l0.1 -0.2M1184.6 391.2v0M1184.7 392.8v0.4M1184.8 432.9v17.8M1185.2 484.4v-31.4M1185.5 484.4v-37.1M1185.7 468.4v-20.6M1186.2 434.9v-17.8M1186.3 393.8v-0.4M1186.4 392.1v0M1186.5 392.8v0.2M1186.6 395.8v0.5M1187.1 475.6v8.8M1187.4 484.4v-10.8M1187.9 473.2v4.7M1188.1 400.9v-0.5M1188.2 398.4v-0.2M1188.3 397.8v0.1M1188.4 399.2v0.4M1188.5 416.3v17.8M1189 447.1v22.9M1189.2 389.8v2.4M1189.4 474.6v-17.3M1189.9 429.8v-16.8M1190 410.1v-0.3M1190.1 408.7v-0.1M1190.2 409.3v0.2M1190.3 411.9v0.5M1190.8 461.9v22.5M1191 403.4v81M1191.6 479.5v-17.8M1191.7 437.3v-0.4M1191.8 435.4v-0.1M1191.9 435v0.1M1192 436.1v0.2M1192.1 438.6v0.4M1192.7 469.9v-20.3M1192.8 438.7v44.5M1193.4 475.2v9.2M1193.5 457.9v-0.5M1193.6 455.1v-0.2M1193.7 454.6v0.1M1193.8 456.5v0.4M1193.9 454.5v12.7M1194.3 444l0.1 8.6M1194.6 392.4v-10.8M1194.8 445.7v4.6M1195.2 484.4v-8.2M1195.3 424.7v-0.4M1195.4 422.3v-0.2M1195.5 422v0.1M1195.6 423.9v0.4M1195.7 444.1v35.8M1196.2 431.5v18.4M1196.4 459.3v-1.9M1196.9 468.2v-17.8M1197 413.5v-0.3M1197.1 411.6v-0.2M1197.2 411.1v0M1197.3 412.1v0.3M1197.4 414.6v0.5M1197.8 484.4v-16.8M1198 464v-59.5M1198.2 484.4v-28.6M1198.7 414.8v-3.4M1198.8 408.4v-0.2M1198.9 407.5v0M1199 409.1v0.4M1199.1 451.8v-6.7M1199.5 456.8v-4.5M1199.7 414.7v10.8M1200.3 484.4v-14.4M1200.4 404.5v-0.5M1200.5 402.1v-0.2M1200.6 401.9v0.2M1200.7 404.1v0.4M1200.8 472.8v11.6M1201.4 455.9v28.5M1201.9 475.4v-19.5M1202 421.1l0.1 -6.7M1202.1 411.5l0.1 -0.3M1202.2 402.8v7.6M1202.3 411.6v-3.1M1202.4 425.4v17.8M1202.9 463.6v20.8M1203.1 426.5v57.9M1203.3 484.4l0.1 -8.1M1203.7 439.4v-17.8M1203.8 413.9v-5.3M1203.8 412.3l0.1 0M1203.9 412.8v0.1M1204 415.1v0.4M1204.2 467.4v11.3M1204.7 450.1v-46M1204.9 484.4v-9.5M1205.3 424.6v-0.5M1205.4 421.5v-0.3M1205.5 420.3v-3.6M1205.6 421.1v0.2M1205.7 423.8v0.5M1206.1 484.4v-16.6M1206.3 411.6v-19.1M1206.5 474.2v-3M1206.9 443.5v-0.5M1207 440.5v-0.2M1207.1 439.2v0M1207.2 439.6v0.2M1207.2 441.6l0.1 0.4M1207.6 474.2v10.2M1207.8 435.8v48.6M1208 435.8v27.6M1208.2 466.5v17.9M1208.5 470.1l0.1 -0.3M1208.6 468.2v-0.1M1208.7 468.1v0.1M1208.8 469.6v0.3M1208.9 468.8v15.6M1209.4 484.4l0.1 -76.3M1209.6 484.4l0.1 -28.6M1210.1 433.8v-0.4M1210.1 431v-0.3M1210.2 429.7v-0.1M1210.3 430.1v0.1M1210.4 432.1v0.3M1210.8 479.9v-12.3M1211 399.7v3.1M1211.2 454.1v19.1M1211.6 418.6v-0.5M1211.7 415.6v-0.3M1211.8 414.8v0.1M1211.9 416.3v0.4M1212 448.9v13.8M1212.4 483.1v-47.6M1212.6 484.4v-31.8M1213.1 460.5v-17.8M1213.2 416v-0.3M1213.3 414.1v-0.1M1213.4 414.1v0.1M1213.4 415.9v0.4M1213.5 456.9v17.8M1214 455.2v29.2M1214.2 472.6v11.8M1214.6 459.7v-8.9M1214.7 412.3v-0.3M1214.8 410.4v-0.1M1214.9 410.8v0.2M1215 413.6v0.5M1215.4 480.7v-27.6M1215.6 466.4v18M1216.1 484.4v-8.4M1216.2 414.8v-0.4M1216.3 412.5v-0.1M1216.3 412.3l0.1 0.1M1216.4 414.1v0.3M1216.5 457.5v17.8M1217 484.4v-28.2M1217.2 474.5v9.9M1217.7 416.5v-0.5M1217.7 414.1v-0.2M1217.8 413.7v0.1M1217.9 415.3v0.4M1218 447.3v17.8M1218.3 452.6v-23.9M1218.5 477.8v-57.3M1218.7 484.4v-26M1219.1 450.7v-4.6M1219.1 429.6v-1.1M1219.2 428v-0.1M1219.3 428.2v0.2M1219.4 430.4v0.4M1219.5 476.1v8.3M1219.9 484.4l0.1 -53.8M1220.1 461.2v23.2M1220.5 454.2v-8.9M1220.6 442.3v-0.2M1220.7 441.1v0M1220.8 442.1v-1.9M1220.8 445.4v12.4M1221.2 465.8v15.1M1221.4 405.6v34.2M1221.6 476v8.4M1222 477.8v-6.5M1222.1 476.3v-0.1M1222.2 476.5v0.1M1222.4 477.3v-6.7M1222.6 456.9l0.1 27.5M1222.8 419v65.4M1223.2 484.4v-17M1223.4 455.8v28.6M1223.4 392.2v16.3M1223.5 447.2v-1.2M1223.6 448.2v0.3M1223.7 461.5v17.7M1223.9 484.4v-10.5M1224 439.1l0.1 18.2M1224.2 413.8v-1.8M1224.4 458v-22.1M1224.7 452l0.1 7.3M1224.8 415.5v0M1224.9 424.8v-0.1M1225 425.5v0.2M1225 428.7l0.1 2.9M1225.2 469.2v15.2M1225.5 484.4v-10.5M1225.6 434.4v50M1225.8 435.6v37.4M1226.1 473.5v-17.8M1226.2 420.8v-0.3M1226.3 418.9v-0.1M1226.3 418.8v0.2M1226.4 420.7v0.3M1226.5 464.9v17.8M1226.8 438.3v21.3M1227 436.8v1M1227.1 438.9l0.1 16.9M1227.5 480.8v-17.8M1227.5 429v-0.4M1227.6 427v-0.1M1227.7 426.7v0.1M1227.8 427.9v0.3M1227.8 430.8v7.3M1228.2 466.9v-34.3M1228.4 484.4v-45.5M1228.6 463.9v-9.2M1228.8 425.8v-0.4M1228.9 422.9v-3.5M1229 421.5v0M1229.1 421.7v0.1M1229.1 423.4v0.3M1229.2 453.6v17.8M1229.6 451.8v-22.3M1229.8 438.4v32.2M1230.1 484.4v-8.2M1230.2 428v-5.1M1230.3 420v-0.3"/>
<path d="M263.5 419.5l15.2 -14.8M352.9 435.2l7.9 -8.9M405.2 424.2l5.3 -1.8M442.3 410.8l4 -1.7M471.1 396.2l3.2 -2.1M494.6 376.9l2.7 -3M514.5 348.7l2.3 -4.4M531.7 303.9l2 -8M546.9 180.7l1.8 -68.1M560.5 259.1l1.6 12.5M572.8 326.9l1.5 5.4M584 362.3l1.4 3.5M594.4 386.5l1.2 2.5M603.9 404.7l1.2 2M612.8 425.2l1.1 -10.6M621.1 429.6l1.1 11.6M629 431.3l0.9 -2.5M636.3 377.2l0.9 -19.7M643.3 360.5l0.9 20.7M653.9 484.4l0.8 -30M668.7 460.1l0.7 24.3M674.1 469.7l0.7 -3.9M679.4 451.9l0.6 -2.6M684.4 418.8l0.6 -5.7M689.2 351l0.6 -15.3M693.9 276.9l0.6 30.7M698.4 397.8l0.6 7.2M702.8 429.1l0.5 12M707 477.3l0.5 -32.4M716.9 456.3l0.5 18.6M726.2 473.7l0.4 10.7M730.6 420.4l0.4 34.8M737.7 440.2l0.4 44.2M751.3 469.6l0.3 -41.7M754.2 444.1l0.3 -7.4M757 360.4l0.4 -22.5M759.8 354.3l0.3 18.6M762.5 443.7l0.4 5.9M765.2 472l0.3 12.4M776.5 452.2l0.3 25.4M781 433.8l0.3 -29.8M783.3 458.6l0.3 14.7M787 455.8l0.3 -16.3M797.2 428l0.2 17.3M799.2 433.6l0.3 -14M801.2 326.4l0.3 -45.8M803.2 385.6l0.2 13.5M805.1 456.3l0.3 5.8M808.5 473.1l0.2 -6M816.9 412.7l0.3 -2M818.9 320l0.2 -11.9M821.1 405.2l0.2 13.4M828.5 484.4l0.2 -20.5M832.3 425.7l0.2 -10M834.5 317.4l0.2 96.1M837.5 484.4l0.2 -35.9M842.9 462.3l0.1 1.3M846.2 405l0.2 18.2M848 322.7l0.2 56.5M849.5 411.6l0.2 36.2M855.6 482.6l0.1 -9M858.2 461.7l0.1 -7.9M859.4 382.8l0.2 -20.2M860.7 361.2l0.2 20.5M862 457.1l0.1 5.6M864.3 484.4l0.1 -21.2M867.3 451l0.2 21.5M870 433.1l0.1 -0.5M871.4 316.1l0.2 27.8M872.9 419.7l0.1 64.7M876.5 480l0.2 -13.4M880.2 484.4l0.2 -52.5M881.4 390.7l0.2 -146.7M882.6 484.4l0.2 -51.3M885.1 484.4l0.2 -14.4M889 458.3l0.1 26.1M891.1 355l0.1 -26.9M892.5 443.5l0.1 40.9M896.8 475l0.1 0.8M898.5 458.2l0.1 -5.6M899.4 395.6l0.1 -13.4M900.3 272.1l0.2 48M901.3 453l0.1 -27.3M902.2 482.8l0.1 -46.6M906.6 459.6l0.1 24.8M908.3 404.7l0.1 -54.7M909.5 421.9l0.1 19.5M915.2 481.7l0.1 -52.4M916 363.1l0.1 -37.6M916.8 408.5l0.1 14.2M918.1 484.4l0.1 -9.5M922.9 469l0.1 15.4M925.4 480.2l0.1 -7M929.4 456.3l0.1 -6M930.2 385l0.1 -16.4M930.9 326.8l0.1 26.9M931.6 439.2l0.1 6.4M932.4 461.6v22.8M937 436.7l0.1 -46.2M938 470.2l0.1 -9.8M942.8 451.9v-22.1M943.4 315.6l0.1 -72.4M944.1 418l0.1 11.7M945.1 465.9v-5.8M949.3 483.3l0.1 -34.5M950.4 452.6v31.8M953.9 455.8l0.1 28.6M954.8 418.3l0.1 -13.7M955.4 307.5l0.1 42.6M956 428.8l0.1 37.8M958.8 473.7l0.1 10.7M960.2 433.4v51M960.9 361.9l0.1 51M962 484.4l0.1 -13.5M965.3 472.6l0.1 -21.1M965.9 371.4v-41.4M966.4 424.1l0.1 13.7M967.4 465.9l0.1 18.5M971.1 320.8l0.1 18.6M972.3 474.9l0.1 -1.2M975.5 453.9v30.5M976 318.5l0.1 66.6M977.1 484.4v-22.9M980.1 441.5l0.1 42.9M980.8 369v47.7M981.8 484.4v-9.5M984.7 452.6v19.9M985.2 286.9v-5.8M985.6 465.7l0.1 8.5M989.1 457v27.4M989.8 476v8.4M992.7 484.4v-24.2M993.5 457.3v-14M993.9 357.7l0.1 38.4M994.4 431.7v50.1M997.4 467.3l0.1 17.1M998 439.8l0.1 26.8M1000.9 459.6v22.6M1001.6 422.7v-15.7M1002 353.6v29.4M1002.4 474.4l0.1 5.1M1005.2 429.6l0.1 -1.3M1005.8 460.1l0.1 24.3M1008.5 484.4v-18.2M1009.2 475.9v-13.9M1009.6 381.9v36.6M1010 442.9v41.5M1012.6 462.5v-17.9M1013.4 484.4l0.1 -16.4M1014 475l0.1 9.4M1016.4 425.4v-15.8M1016.7 360.5l0.1 28.4M1017.1 442.9l0.1 36.3M1019.7 442.1v42.3M1020.4 452.4l0.1 -18.3M1022.6 456.1l0.1 28.3M1023.3 407.2l0.1 -118.3M1023.8 457.4v-30.5M1025.9 445.3v33.6M1026.7 352v10.4M1027.5 453.3v-8.9M1029.5 435.2v25M1029.8 323.6v-37.4M1030.1 458.4l0.1 12.9M1032.2 459.9v13.9M1032.9 410.5v-52.9M1033.4 429.1v20.4M1035.6 449.2v-1.7M1036 300.2l0.1 22.2M1036.4 457l0.1 27.4M1038.6 455.7v-11.6M1039 441.1l0.1 38.3M1041.1 465l0.1 -10.4M1041.8 431v-58.2M1042.2 431.6v-3.9M1044.3 484.4v-12.1M1044.7 355.1l0.1 36.8M1045.3 484.4l0.1 -17.8M1047.1 484.4v-32M1047.5 327.3v25.6M1048.1 484.4l0.1 -29.6M1049.9 446.3v27.6M1050.5 430.2l0.1 6.2M1052.5 484.4v-49.9M1052.8 402.7v-64.3M1053.1 484.4l0.1 -46.6M1054.8 456.8v-15.6M1055.4 463.4v-50.1M1055.8 426.1v27.3M1057.7 444v5.6M1058 311.6v-8M1058.3 442.9v-17.1M1059.9 470l0.1 14.4M1060.8 484.4v-27.6M1062.3 468.8l0.1 -3.7M1062.8 455l0.1 -22.3M1063.1 447.4v19.2M1063.6 459.1v-9M1065.1 447.2v12.7M1065.4 405.8v0.2M1065.7 453.2v-6.8M1067.2 474.8v9.6M1067.7 407.6v-44.4M1067.9 464.9l0.1 13.2M1068.4 451.5v32.9M1069.9 415.4v-17.8M1070.1 392.7v0.5M1070.4 452.9v11.8M1072 484.4l0.1 -57.2M1072.3 332.2l0.1 -22.2M1072.6 436.7l0.1 3.6M1074 475.2l0.1 -9.7M1074.3 388.6l0.1 -0.9M1074.6 384.4v-0.1M1074.8 386.5v0.7M1075.1 478.6l0.1 -14M1076.5 415.1l0.1 6.5M1076.8 321.5l0.1 37.3M1077.1 464.8v19.6M1078.5 449.9l0.1 -17.8M1078.8 372.9v-0.5M1079 370v0.9M1079.2 373.1v0.6M1079.4 457l0.1 17.8M1080.8 430.6l0.1 -8.7M1081.2 467.1v17.3M1082.6 484.4v-14.2M1082.8 371.2v-0.5M1083 368.2l0.1 -0.2M1083.3 367.6v0M1083.5 369.2v0.4M1083.7 407.6v17.8M1085 432.5v10.5M1085.3 460.4l0.1 24M1086.6 467.5l0.1 -17.8M1086.8 374.9l0.1 -0.4M1087.1 372.5v-0.2M1087.3 371.6v-4.3M1087.5 372.2v0.2M1087.7 374.3v0.4M1087.9 441.8l0.1 17.8M1089.1 466.1v18.3M1089.6 448v36.4M1090.8 418.3v-17.8M1091 374.4v-0.4M1091.2 372.6v0M1091.4 373.2l0.1 0.2M1091.6 375.9l0.1 0.5M1092.7 484.4v-23.3M1093.1 483.8v-20.7M1093.3 467.4v17M1093.7 469.5v14.9M1094.7 383.5l0.1 -0.5M1095 380.4v-0.2M1095.2 379.6v0.1M1095.4 381.2v0.3M1095.6 414.9v17.8M1096.8 445.1v-2.5M1097.1 437.9v33.4M1097.5 467v17.4M1098.4 395.2v-0.4M1098.6 392.6v-0.3M1098.8 391.4v0M1099 391.8v0.1M1099.2 393.6v0.4M1099.4 436.4v17.8M1100.5 452.1v19.6M1100.7 338.3v53.9M1101.1 484.4v-12.4M1102.1 427.4v-0.4M1102.3 425v-0.2M1102.5 419.2v5.1M1102.7 425.2v0.2M1102.9 427.7v0.5M1104 484.4v-37.7M1104.3 332.3v26.5M1104.7 484.4v-26.7M1105.7 420.6v-0.5M1105.9 417.4v-0.2M1106.1 416.6v0M1106.2 418l0.1 0.3M1106.4 442.1l0.1 17.8M1107.5 438.1l0.1 20.3M1107.8 406.8v41.4M1109 477.2v-17.8M1109.2 390.9v-0.4M1109.3 388.4l0.1 -0.1M1109.5 388.1l0.1 0.1M1109.7 389.7v0.4M1109.9 424.5v17.8M1110.9 435.4l0.1 3.1M1111.2 436.7v31M1111.6 462.3v22.1M1112.5 385.2v-0.4M1112.7 382.4v-0.2M1112.8 381.7l0.1 0M1113 383v0.3M1113.2 394.1v17.8M1114 438.5l0.1 -3.9M1114.4 456v-75.3M1114.8 484.4l0.1 -31.5M1115.7 415.8v-17.8M1115.8 379.7l0.1 -0.4M1116 377.9v0M1116.2 378.1v0.1M1116.4 380.1v0.3M1116.5 437.1l0.1 17.8M1117.5 469.9v-32.9M1117.8 484.4l0.1 -54.1M1118.8 470.4v-17.8M1119 381.4v-0.4M1119.1 379v-0.2M1119.3 378.3v0.1M1119.5 379.5v0.2M1119.6 382.4l0.1 4M1120.4 473.5l0.1 -1.1M1120.8 390.3l0.1 14.5M1122 482.5v-17.8M1122.1 389.2v-0.4M1122.3 386.7v-0.2M1122.5 386.6v0.1M1122.6 388.9v0.5M1122.8 471.1v13.3M1123.9 461.2v-48.1M1124.1 438v25.2M1125.1 395.6v-0.5M1125.3 392.4v-0.2M1125.4 391.6l0.1 0M1125.6 393.1v0.4M1125.8 426.4v17.8M1126.7 424.3v29.2M1127.1 425.7v7.3M1128 453.1v-6.3M1128.2 402.6v-0.4M1128.3 400.3v-0.2M1128.5 400.5v0.2M1128.6 403.4l0.1 0.5M1128.9 474.2v10.2M1129.7 428.8v55.6M1129.9 447.6v28M1130.2 456.9v16.6M1131 427.3v-0.4M1131.1 424.8l0.1 -0.2M1131.3 424.2v0M1131.5 425.4v0.3M1131.6 428.5v13.4M1132.5 480.5v-52.3M1132.7 371.1v97.4M1133.1 458.8v25.6M1133.8 429.1v-0.4M1134 426.8v-0.2M1134.1 426.1v0.1M1134.3 427.1v0.3M1134.4 429.7l0.1 0.5M1135.1 463.5l0.1 -11.5M1135.4 475.7l0.1 -29.6M1135.7 439.6v-5.4M1136 470.9v9.6M1136.6 408.7l0.1 -0.4M1136.8 406v-0.1M1136.9 405.6l0.1 0.1M1137.1 407.4v0.3M1137.2 452.4v17.8M1138.1 470.5v13.9M1138.4 460.8v-23.3M1139.2 446.8v-17.8M1139.4 392.2v-0.4M1139.5 390.2v-0.1M1139.7 390v0.1M1139.8 391.5v0.3M1139.9 408.4l0.1 17.8M1140.8 430.2v16.9M1141.1 484.4v-41.8M1141.9 422.8v-17.8M1142 386.2l0.1 -0.3M1142.2 384.4v-0.1M1142.3 384.3v0.1M1142.5 385.9v0.3M1142.6 403.6v17.8M1143.5 484.4v-16.4M1143.8 467v17.4M1144.6 389.1v-6.1M1144.7 380v-0.2M1144.9 378.9v0M1145 380v0.4M1145.1 389.1l0.1 17.8M1145.9 473.6v10.8M1146.2 419.6v64.2M1146.5 444.3v26.5M1147.1 387.2l0.1 -0.5M1147.3 384.3v-0.3M1147.4 383.2v0M1147.6 384.1v0.2M1147.7 386.8v0.4M1147.9 473.3v7.1M1148.6 484.2l0.1 -43.3M1148.8 426.1l0.1 19.1M1149.5 479.1l0.1 -17.8M1149.7 390.8v-0.4M1149.8 388.4v-0.1M1149.9 387.8l0.1 0M1150.1 388.9v0.3M1150.2 391.8v1.2M1150.9 446v36.1M1151.2 366.3v12.2M1151.4 484.4l0.1 -13.7M1152.1 407.3v-0.5M1152.2 404.3v-0.3M1152.3 402.9l0.1 0M1152.5 403.3v0.1M1152.6 405.3v0.3M1152.7 462.6l0.1 17.7M1153.6 416.3v-49M1153.8 473.2v11.2M1154.5 449.6v25.8M1154.6 426.6l0.1 -0.4M1154.8 424.5v0M1154.9 425.3v0.3M1155 428.8v16.7M1155.7 484.4v-34.4M1156 380.6v-20.6M1156.3 484.4v-39.6M1156.9 451.3v-4.3M1157 448.4v-0.2M1157.1 447.1v-0.1M1157.2 447.2l0.1 0.1M1157.4 448.8v0.4M1157.5 475v9.4M1158.3 366.6v-1M1158.6 484.4v-21.4M1159.2 411v-0.4M1159.4 408.4v-0.2M1159.5 407.4v0M1159.6 408.1v0.2M1159.7 410.4v0.4M1160.3 484.4v-21.5M1160.6 367.2v18.2M1161.3 484.4v-8M1161.5 404.8v-0.5M1161.6 402.1l0.1 -0.2M1161.8 396.1v5.1M1161.9 402v0.3M1162 404.6v0.4M1162.5 474.3v10.1M1162.8 429.6v54.8M1163 484.4v-55.7M1163.3 484.4v-9.3M1163.8 399v-0.5M1163.9 395.8v-0.3M1164 395.2l0.1 0.1M1164.2 397.3v0.5M1164.3 468.3v10.8M1165.1 414v-14.5M1165.4 469.6v1.2M1166 395.9v-0.4M1166.1 393v-0.3M1166.2 391.8v-3.4M1166.3 392.4v0.2M1166.4 394.9l0.1 0.4M1167 484.4v-24.6M1167.3 484.4v-21.8M1167.5 484.4l0.1 -22.9M1168.1 416.6l0.1 -17.7M1168.3 394.5v-0.3M1168.4 393.2v-1M1168.5 394.2v0.2M1168.6 397.5v15.6M1169.3 484.4v-44.6M1169.5 413v71.4M1170.2 484.4v-14.4M1170.3 402.9v-0.4M1170.4 400.6v-0.2M1170.5 399.9v0.1M1170.6 401l0.1 0.2M1170.8 403.7v0.4M1171.4 481.9v-18M1171.7 484.4v-29.3M1172.4 434.3v-17.8M1172.5 409.2v-0.3M1172.6 407.7v-0.1M1172.7 408v0.2M1172.8 410.3v0.4M1173.3 484.4v-8.3M1173.5 427.8v0.8M1173.7 465.6v18.8M1174.4 480.4v-17.8M1174.5 424.7v-0.3M1174.6 422.7v-0.1M1174.7 422.2v0M1174.8 423.1v0.2M1174.9 425.4v0.4M1175.5 484.4l0.1 -27.3M1175.7 379.6v66.6M1176.4 484.4v-24.2M1176.5 449.4l0.1 -0.3M1176.6 447.6l0.1 -0.1M1176.8 447.6v0.1M1176.9 449.2v0.3M1177 473.6v10.8M1177.6 428.4v48.1M1177.8 484.4v-34.6M1178.5 463.9v-17.8M1178.6 416.7v-0.3M1178.7 414.9v-0.1M1178.8 415.2v0.2M1178.9 417.6v0.4M1179.3 472.5v7.2M1179.7 481.1v-82M1179.8 427.1v47.4M1180.4 436.7v-17.8M1180.5 410.8v-0.2M1180.6 409.2v-0.1M1180.7 409.1v0.1M1180.8 410.6v0.3M1180.9 423.9l0.1 17.8M1181.5 446.7l0.1 37.7M1181.8 451.8v22.7M1182.4 458.8v-9.7M1182.5 400.9v-0.4M1182.6 398.8v0M1182.7 399.6v0.3M1182.8 403.2v16.7M1183 462.5v21.9M1183.4 432l0.1 -9.5M1183.7 458v-32M1183.9 460.2l0.1 22.4M1184.4 394.3v-0.4M1184.5 391.6v-0.2M1184.6 391.2v0.2M1184.7 393.2v0.4M1184.8 450.7v17.8M1185.2 453v-16.1M1185.5 447.3v-0.3M1185.7 447.8v15.3M1186.2 417.1v-17.8M1186.3 393.4v-0.3M1186.4 392.1v0M1186.5 393v0.3M1186.6 396.3v12.2M1187.2 484.4v-27.6M1187.4 473.6l0.1 -28.2M1188 476.8v-17.8M1188.1 400.4v-0.3M1188.2 398.2v-0.2M1188.3 397.9v0.1M1188.4 399.6v0.3M1188.5 434.1v17.8M1189 470v14.4M1189.2 392.2v46M1189.4 457.3v18.3M1189.9 413v-0.5M1190 409.8v-0.2M1190.1 408.6v0M1190.2 409.5v0.2M1190.3 412.4v0.5M1190.9 480.5v-49M1191.1 484.4v-35.7M1191.6 461.7l0.1 -17.8M1191.7 436.9l0.1 -0.2M1191.8 435.3l0.1 -0.1M1191.9 435.1v0.1M1192 436.3v0.3M1192.1 439v0.7M1192.7 449.6v14.6M1192.9 484.4v-29.9M1193.4 484.4v-11.2M1193.5 457.4v-0.4M1193.6 454.9v-0.2M1193.7 454.7v0.2M1193.8 456.9v0.4M1193.9 467.2v17.2M1194.4 452.6v31.8M1194.6 381.6v25.6M1194.8 450.3v34.1M1195.2 476.2v-40.4M1195.3 424.3v-0.4M1195.4 422.1v-0.1M1195.5 422.1v0.2M1195.6 424.3v0.4M1195.8 484v-13.3M1196.2 449.9v34.5M1196.4 457.4v27M1196.9 450.4v-17.8M1197 413.2v-0.3M1197.1 411.4v-0.1M1197.2 411.1v0.1M1197.3 412.4v0.2M1197.4 415.1v0.4M1197.8 467.6v-24.8M1198 404.5v-7.9M1198.2 455.8v7.4M1198.7 411.4v-0.5M1198.8 408.2v-0.3M1198.9 407.5v0.1M1199 409.5v0.4M1199.1 445.1v-0.5M1199.5 452.3v32.1M1199.7 425.5v58.9M1200.3 470l0.1 -17.8M1200.4 404v-0.4M1200.5 401.9v-0.1M1200.6 402.1v0.2M1200.7 404.5v0.5M1201.2 484.4v-17.5M1201.5 484.4v-34.4M1201.9 455.9v16.2M1202.1 414.4v-0.5M1202.2 411.2v-0.2M1202.2 410.4l0.1 0M1202.3 408.5v3.8M1202.4 443.2v-9.5M1202.9 484.4v-27.8M1203.1 484.4v-11.3M1203.4 476.3v8.1M1203.7 421.6v-5.3M1203.8 408.6v4.7M1203.9 412.3v-3.3M1203.9 412.9l0.1 0.3M1204 415.5v0.5M1204.5 481.6v-18.3M1204.7 404.1v-2.4M1204.9 474.9v-22.9M1205.3 424.1v-0.4M1205.4 421.2v-0.2M1205.5 416.7v3.6M1205.6 421.3v-3.1M1205.7 424.3v4.3M1206.1 467.8v0.9M1206.3 392.5v16.7M1206.5 471.2v13.2M1206.9 443v-0.4M1207 440.3v-0.2M1207.1 439.2v-4.3M1207.2 439.8v0.2M1207.3 442v0.4M1207.7 484.4v-27.3M1207.9 484.4v-48.9M1208 463.4v21M1208.5 484.4v-14.4M1208.6 469.8v-0.3M1208.6 468.1v-0.1M1208.7 468.2v0.1M1208.8 469.9v0.4M1209.3 484.4v-26.6M1209.5 408.1v-16M1209.7 455.8v-0.3M1210.1 433.4v-0.4M1210.1 430.7l0.1 -0.2M1210.2 429.6v0M1210.3 430.2v0.2M1210.4 432.4v0.4M1210.8 467.6v16.8M1211 402.8v47.4M1211.2 473.2v11.2M1211.6 418.1l0.1 -0.5M1211.7 415.3v-0.2M1211.8 414.9v0.1M1211.9 416.7v0.4M1212 462.7v10.6M1212.4 435.5l0.1 -3.1M1212.6 452.6v-23.8M1213.1 442.7v-17.8M1213.2 415.7v-0.3M1213.3 414v0M1213.4 414.2v0.2M1213.4 416.3l0.1 0.3M1213.5 474.7v9.7M1214 484.4l0.1 -27.1M1214.2 484.4v-17.7M1214.6 450.8l0.1 -17.8M1214.7 412v-0.4M1214.8 410.3v0M1214.9 411v0.3M1215 414.1v0.6M1215.4 453.1v9.4M1215.6 484.4l0.1 -22.8M1216.1 476v-18M1216.2 414.4v-0.3M1216.3 412.4v-0.1M1216.4 412.4v0.1M1216.4 414.4v0.4M1216.5 475.3v9.1M1217 456.2v-28.3M1217.6 482.2v-17.8M1217.7 416v-0.3M1217.7 413.9l0.1 -0.1M1217.8 413.8v0.1M1217.9 415.7v0.4M1218 465.1v17.8M1218.3 428.7v12.1M1218.5 420.5v-7.3M1218.7 458.4v-29.1M1219.1 446.1v-13.9M1219.1 428.5l0.1 -5.5M1219.2 427.9v-0.1M1219.3 428.4v0.2M1219.4 430.8v0.5M1219.8 484.4v-32.3M1220 430.6v-24.7M1220.1 484.4v-24.3M1220.5 445.3v-0.6M1220.6 442.1v-0.3M1220.7 441.1v0M1220.8 440.2v-6.2M1220.8 457.8l0.1 0.5M1221.3 484.4v-29.2M1221.4 439.8v44.6M1221.8 477.1v-18.7M1222 471.3v-46.9M1222.1 476.2v0M1222.2 476.8v-29.7M1222.4 470.6v13.8M1222.7 484.4v-51.6M1222.9 484.4v-20.2M1223.2 467.4v10.3M1223.4 484.4v-11.6M1223.4 408.5l0.1 39.9M1223.5 446v1.2M1223.6 448.5v-29.1M1223.7 484.4v-49.3M1223.9 473.9v2.2M1224.1 457.3v27.1M1224.2 412v38.5M1224.4 435.9v13.8M1224.8 459.3v-17.8M1224.8 415.5v10.4M1224.9 424.7v0M1225 425.7v-3.4M1225.1 431.6v17.8M1225.3 483.6v-13.9M1225.5 473.9v-59.7M1225.7 484.4v-50M1225.8 473v11.4M1226.1 455.7v-17.8M1226.2 420.5v-0.3M1226.3 418.8v-0.1M1226.3 419v0.1M1226.4 421v0.4M1226.5 484.4l0.1 -18.6M1226.8 459.6v24.8M1227 437.8v43.4M1227.2 455.8v28.6M1227.5 463v-17.8M1227.5 428.6l0.1 -0.3M1227.6 426.9v-0.1M1227.7 426.8v0M1227.8 428.2v0.3M1227.8 438.1v17.8M1228.2 432.6v4.4M1228.4 438.9v-26.4M1228.6 454.7v27.5M1228.8 425.4l0.1 -0.5M1228.9 419.4v-13.4M1229 421.5v-0.1M1229.1 421.8v0.2M1229.1 423.7v0.3M1229.2 471.4v13M1229.6 429.5v13.7M1229.8 470.6v13.8M1230.1 476.2v-9.8M1230.2 422.9v-0.5M1230.3 419.7v-0.2"/>
</g>
<path stroke="#ffffff" stroke-opacity="0.16" stroke-width="1" fill="none" shape-rendering="crispEdges" d="M48.5 119.5H1230.5M48.5 179.5H1230.5M48.5 238.5H1230.5M48.5 297.5H1230.5M48.5 356.5H1230.5M48.5 416.5H1230.5M255.5 60.5V475.5M552.5 60.5V475.5M849.5 60.5V475.5M1146.5 60.5V475.5"/>
<polygon points="545.3,73.4 555.9,73.4 550.6,83" fill="#908136" stroke="#f5e15e" stroke-width="1.2" stroke-linejoin="miter"/><polygon points="687.3,172.5 697.9,172.5 692.6,182.1" fill="#908136" stroke="#f5e15e" stroke-width="1.2" stroke-linejoin="miter"/><polygon points="753.1,191.8 763.7,191.8 758.4,201.4" fill="#908136" stroke="#f5e15e" stroke-width="1.2" stroke-linejoin="miter"/>
<g fill="#c8c8c8" font-family="'Liberation Sans', sans-serif" font-size="11"><text x="43.5" y="64.3" text-anchor="end">60</text><text x="43.5" y="123.6" text-anchor="end">40</text><text x="43.5" y="182.9" text-anchor="end">20</text><text x="43.5" y="242.2" text-anchor="end">0</text><text x="43.5" y="301.4" text-anchor="end">-20</text><text x="43.5" y="360.7" text-anchor="end">-40</text><text x="43.5" y="420" text-anchor="end">-60</text><text x="43.5" y="479.3" text-anchor="end">-80</text><text x="255.4" y="490.2" text-anchor="end">10</text><text x="256" y="485.8" font-size="9">-1</text><text x="552.4" y="490.2" text-anchor="end">10</text><text x="553" y="485.8" font-size="9">0</text><text x="849.4" y="490.2" text-anchor="end">10</text><text x="850" y="485.8" font-size="9">1</text><text x="1146.4" y="490.2" text-anchor="end">10</text><text x="1147" y="485.8" font-size="9">2</text><text x="639" y="506.5" text-anchor="middle" font-size="13">Frequency (kHz)</text><text transform="translate(17.5,268) rotate(-90)" text-anchor="middle" font-size="13">Power (dBm)</text></g>
</svg>
<div id="peakshdr" class="abs"></div>
<div id="peakstxt" class="abs">Peaks</div>
<div id="tbl" class="abs"></div>
<div class="abs hl" style="top:543px"></div>
<div class="abs hl" style="top:570px"></div>
<div class="abs hl" style="top:592px"></div>
<div class="abs hl" style="top:615px;background:#fff"></div>
<div class="abs hl" style="top:616px;background:#7c7c7c"></div>
<div class="abs vl" style="left:0"></div>
<div class="abs vl" style="left:313px"></div>
<div class="abs vl" style="left:625px"></div>
<div class="abs vl" style="left:938px"></div>
<div class="abs vl" style="left:1250px"></div>
<div class="abs c b" style="left:4px;top:551px">Channel 1</div>
<div class="abs c b" style="left:317px;top:551px">P1</div>
<div class="abs c b" style="left:629px;top:551px">P2</div>
<div class="abs c b" style="left:942px;top:551px">P3</div>
<div class="abs c" style="left:4px;top:574px">Frequency (kHz)</div>
<div class="abs c" style="left:317px;top:574px">0.9867</div>
<div class="abs c" style="left:629px;top:574px">2.9733</div>
<div class="abs c" style="left:942px;top:574px">4.9467</div>
<div class="abs c" style="left:4px;top:596px">Power (dBm)</div>
<div class="abs c" style="left:317px;top:596px">51.8882</div>
<div class="abs c" style="left:629px;top:596px">18.5176</div>
<div class="abs c" style="left:942px;top:596px">12.0307</div>
<div id="status" class="abs"></div>
<div class="abs st" style="left:7px">Ready</div>
<div class="abs st" style="left:479.5px">ΔT=50.0000 ms</div>
<div class="abs st" style="left:570.3px">Samples/Update=28800</div>
<div class="abs st" style="left:705.5px">VBW=606.3045 mHz</div>
<div class="abs st" style="left:824.2px">RBW=20.0000 Hz</div>
<div class="abs st" style="left:926.3px">Sample Rate=384.0000 kHz</div>
<div class="abs st" style="left:1083px">Updates=1</div>
<div class="abs st" style="left:1147.2px">T=0.0782</div>
<svg class="abs" style="left:1200px;top:617px" width="51" height="23" viewBox="1200 617 51 23">
<circle cx="1214.4" cy="623.5" r="1.5" fill="#666"/><circle cx="1214.4" cy="629.5" r="1.5" fill="#666"/><circle cx="1214.4" cy="635.5" r="1.5" fill="#666"/>
<polygon points="1235.2,625 1246.8,625 1241,631.8" fill="#8c8c8c"/><rect x="1235" y="632" width="12" height="2" fill="#8c8c8c"/>
</svg>
</div>
</body>
</html>
